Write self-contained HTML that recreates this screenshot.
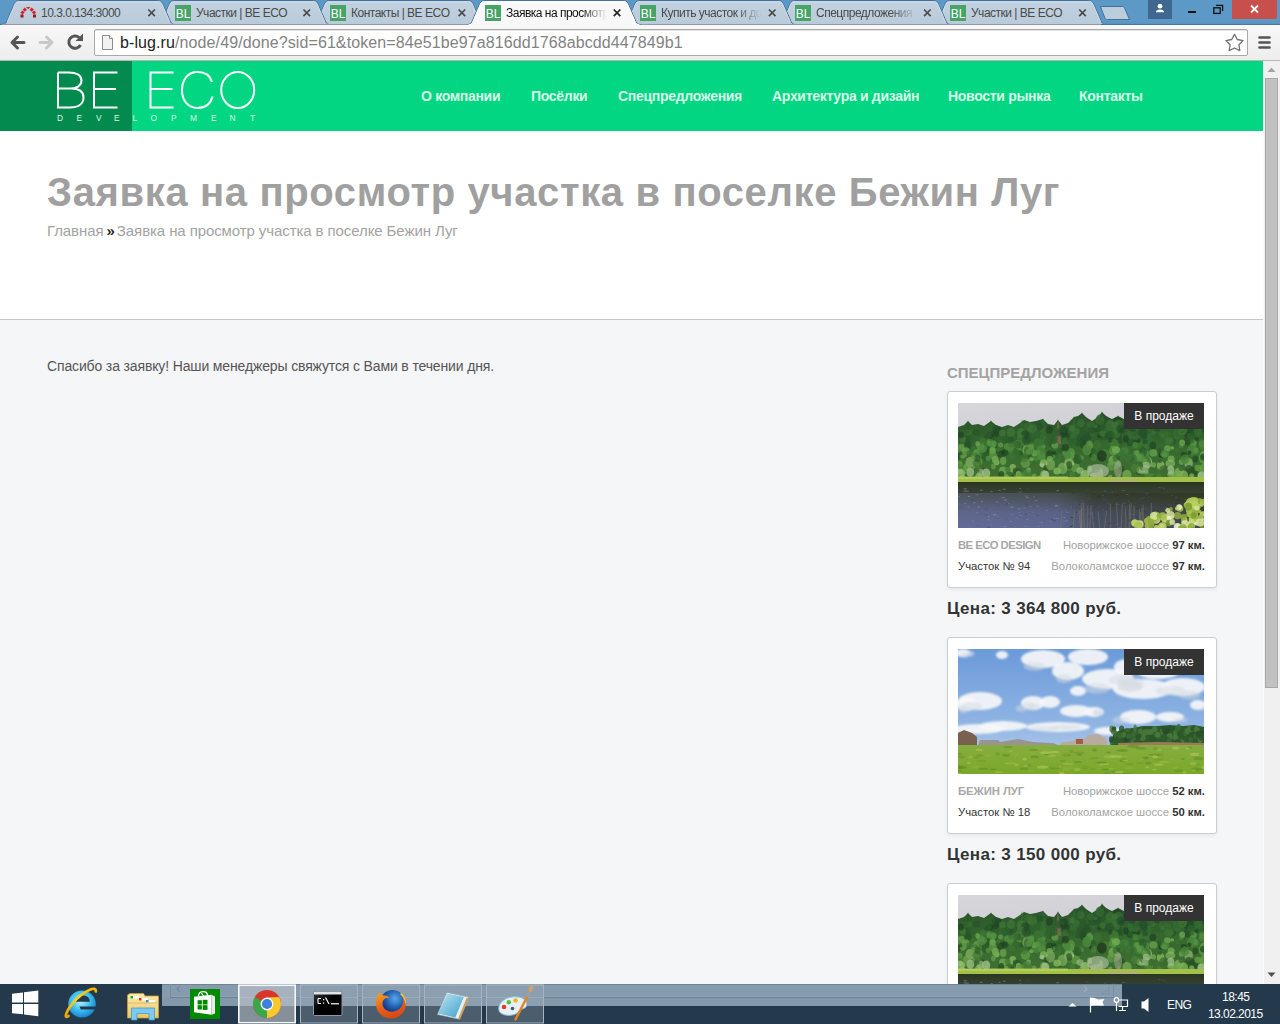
<!DOCTYPE html>
<html><head><meta charset="utf-8">
<style>
*{margin:0;padding:0;box-sizing:border-box}
html,body{width:1280px;height:1024px;overflow:hidden;background:#f5f6f8;font-family:"Liberation Sans",sans-serif}
.a{position:absolute}
#strip{left:0;top:0;width:1280px;height:25px;background:linear-gradient(#5c99c6 85%,#5690bd)}
.tt{position:absolute;top:5px;font-size:12px;line-height:16px;color:#4a4a4a;white-space:nowrap;overflow:hidden;width:104px;letter-spacing:-0.5px}
.fade{-webkit-mask-image:linear-gradient(to right,#000 72%,transparent 97%)}
#toolbar{left:0;top:25px;width:1280px;height:36px;background:linear-gradient(#f8f8f8,#ededed);border-bottom:1px solid #b6b6b6}
#omni{left:94px;top:29px;width:1154px;height:27px;background:#fff;border:1px solid #a9a9a9;border-radius:2px;box-shadow:inset 0 1px 0 #e6e6e6}
#url{left:120px;top:34px;font-size:16px;line-height:18px;color:#838383;white-space:nowrap;letter-spacing:0.1px}
#url b{font-weight:normal;color:#222}
#page{left:0;top:61px;width:1263px;height:923px;background:#f5f6f8;overflow:hidden}
#hdr{left:0;top:0;width:1263px;height:70px;background:#02d682}
#hdrdark{left:0;top:0;width:132px;height:70px;background:#038a4e}
#titlebox{left:0;top:70px;width:1263px;height:189px;background:#fff;border-bottom:1px solid #c5c7cc}
.nav{top:27px;font-size:14px;font-weight:bold;color:#d9f7e8;letter-spacing:-0.3px;line-height:16px;white-space:nowrap}
#h1{left:47px;top:108px;font-size:40px;line-height:46px;font-weight:bold;color:#a0a0a0;letter-spacing:0.63px;white-space:nowrap}
#crumb{left:47px;top:161px;font-size:15px;line-height:18px;color:#a3a3a3;letter-spacing:-0.09px;white-space:nowrap}
#crumb span{color:#2a2a2a;font-weight:bold;letter-spacing:-0.6px;margin:0 -1.5px 0 -1px}
#thanks{left:47px;top:297px;font-size:14px;line-height:16px;color:#555;letter-spacing:-0.14px;white-space:nowrap}
#sbh{left:947px;top:304px;font-size:15px;line-height:16px;font-weight:bold;color:#a3a3a3;white-space:nowrap}
.card{position:absolute;left:947px;width:270px;height:197px;background:#fff;border:1px solid #cdcdcd;border-radius:3px;box-shadow:0 2px 4px rgba(0,0,0,0.06)}
.card .img{position:absolute;left:10px;top:11px;width:246px;height:125px;overflow:hidden}
.badge{position:absolute;left:176px;top:11px;width:80px;height:26px;background:#333;color:#fff;font-size:12px;line-height:26px;text-align:center}
.r1,.r2{position:absolute;font-size:11.3px;line-height:13px;white-space:nowrap}
.r1{top:147px}.r2{top:167.5px}
.lt{left:10px}.rt{right:11px;color:#a3a3a3;text-align:right}
.rt b{color:#333}
.lt.g{color:#a8a8a8;font-weight:bold;letter-spacing:-0.55px}
.lt.d{color:#333}
.price{position:absolute;left:947px;font-size:17px;line-height:20px;font-weight:bold;color:#333;letter-spacing:0.35px;white-space:nowrap}
#scroll{left:1263px;top:61px;width:17px;height:923px;background:#f0f0f0;border-left:1px solid #fbfbfb}
#taskbar{left:0;top:984px;width:1280px;height:40px;background:#243a4c}
.tb{color:#fff;line-height:12px;white-space:nowrap}
</style></head><body>
<div id="strip" class="a">
<svg class="a" style="left:0;top:0" width="1280" height="26">
<defs><linearGradient id="tg" x1="0" y1="0" x2="0" y2="1"><stop offset="0" stop-color="#c2d2e1"/><stop offset="1" stop-color="#b9cad9"/></linearGradient></defs>
<rect x="0" y="0" width="1280" height="1" fill="#5c99c6"/>
<rect x="0" y="24" width="1280" height="1" fill="#4a76a0"/>
<path d="M932.90 24.5 C935.40 24.5 936.40 23.5 937.20 22 L944.40 5.5 C945.40 3 946.40 0.5 949.40 0.5 L1089.40 0.5 C1092.40 0.5 1093.40 3 1094.40 5.5 L1101.60 22 C1102.40 23.5 1103.40 24.5 1105.90 24.5 Z" fill="url(#tg)" stroke="#45729c" stroke-width="1"/>
<path d="M938.20 22 L945.20 5.8 C946.10 3.4 946.90 2 949.60 2 L1089.20 2 C1091.90 2 1092.70 3.4 1093.60 5.8 L1100.60 22" fill="none" stroke="#d3e0eb" stroke-width="1" opacity="0.8"/>
<path d="M777.75 24.5 C780.25 24.5 781.25 23.5 782.05 22 L789.25 5.5 C790.25 3 791.25 0.5 794.25 0.5 L934.25 0.5 C937.25 0.5 938.25 3 939.25 5.5 L946.45 22 C947.25 23.5 948.25 24.5 950.75 24.5 Z" fill="url(#tg)" stroke="#45729c" stroke-width="1"/>
<path d="M783.05 22 L790.05 5.8 C790.95 3.4 791.75 2 794.45 2 L934.05 2 C936.75 2 937.55 3.4 938.45 5.8 L945.45 22" fill="none" stroke="#d3e0eb" stroke-width="1" opacity="0.8"/>
<path d="M622.60 24.5 C625.10 24.5 626.10 23.5 626.90 22 L634.10 5.5 C635.10 3 636.10 0.5 639.10 0.5 L779.10 0.5 C782.10 0.5 783.10 3 784.10 5.5 L791.30 22 C792.10 23.5 793.10 24.5 795.60 24.5 Z" fill="url(#tg)" stroke="#45729c" stroke-width="1"/>
<path d="M627.90 22 L634.90 5.8 C635.80 3.4 636.60 2 639.30 2 L778.90 2 C781.60 2 782.40 3.4 783.30 5.8 L790.30 22" fill="none" stroke="#d3e0eb" stroke-width="1" opacity="0.8"/>
<path d="M312.30 24.5 C314.80 24.5 315.80 23.5 316.60 22 L323.80 5.5 C324.80 3 325.80 0.5 328.80 0.5 L468.80 0.5 C471.80 0.5 472.80 3 473.80 5.5 L481.00 22 C481.80 23.5 482.80 24.5 485.30 24.5 Z" fill="url(#tg)" stroke="#45729c" stroke-width="1"/>
<path d="M317.60 22 L324.60 5.8 C325.50 3.4 326.30 2 329.00 2 L468.60 2 C471.30 2 472.10 3.4 473.00 5.8 L480.00 22" fill="none" stroke="#d3e0eb" stroke-width="1" opacity="0.8"/>
<path d="M157.15 24.5 C159.65 24.5 160.65 23.5 161.45 22 L168.65 5.5 C169.65 3 170.65 0.5 173.65 0.5 L313.65 0.5 C316.65 0.5 317.65 3 318.65 5.5 L325.85 22 C326.65 23.5 327.65 24.5 330.15 24.5 Z" fill="url(#tg)" stroke="#45729c" stroke-width="1"/>
<path d="M162.45 22 L169.45 5.8 C170.35 3.4 171.15 2 173.85 2 L313.45 2 C316.15 2 316.95 3.4 317.85 5.8 L324.85 22" fill="none" stroke="#d3e0eb" stroke-width="1" opacity="0.8"/>
<path d="M2.00 24.5 C4.50 24.5 5.50 23.5 6.30 22 L13.50 5.5 C14.50 3 15.50 0.5 18.50 0.5 L158.50 0.5 C161.50 0.5 162.50 3 163.50 5.5 L170.70 22 C171.50 23.5 172.50 24.5 175.00 24.5 Z" fill="url(#tg)" stroke="#45729c" stroke-width="1"/>
<path d="M7.30 22 L14.30 5.8 C15.20 3.4 16.00 2 18.70 2 L158.30 2 C161.00 2 161.80 3.4 162.70 5.8 L169.70 22" fill="none" stroke="#d3e0eb" stroke-width="1" opacity="0.8"/>
<rect x="2" y="24" width="1099" height="1" fill="#8e9ba6"/>
<path d="M467.45 24.5 C469.95 24.5 470.95 23.5 471.75 22 L478.95 5.5 C479.95 3 480.95 0.5 483.95 0.5 L623.95 0.5 C626.95 0.5 627.95 3 628.95 5.5 L636.15 22 C636.95 23.5 637.95 24.5 640.45 24.5" fill="#f8f8f8" stroke="#45729c" stroke-width="1"/>
<rect x="468.45" y="24" width="171" height="2" fill="#f8f8f8"/>
<path d="M472.75 22 L479.75 5.8 C480.65 3.4 481.45 2 484.15 2 L623.75 2 C626.45 2 627.25 3.4 628.15 5.8 L635.15 22" fill="none" stroke="#ffffff" stroke-width="1"/>
<path d="M1100.5 6.5 L1122 6.5 C1123.5 6.5 1124.3 7 1124.8 8.5 L1129.5 19.5 L1107.5 19.5 C1106 19.5 1105.2 19 1104.7 17.5 Z" fill="#bccddd" stroke="#44709a" stroke-width="1"/>
<rect x="1148" y="0" width="24" height="19" fill="#3f6790"/>
<circle cx="1160" cy="6.2" r="2.4" fill="#fff"/>
<path d="M1156 12.3 C1156 10.2 1157.5 9.4 1160 9.4 C1162.5 9.4 1164 10.2 1164 12.3 Z" fill="#fff"/>
<rect x="1188" y="11" width="8" height="2" fill="#111"/>
<rect x="1213.8" y="7.8" width="6.4" height="5.6" fill="none" stroke="#111" stroke-width="1.3"/>
<path d="M1216 5.4 L1222.6 5.4 L1222.6 11" fill="none" stroke="#111" stroke-width="1.3"/>
<rect x="1232" y="0" width="45" height="19" fill="#c7504c"/>
<path d="M1251 5.5 L1258 12.5 M1258 5.5 L1251 12.5" stroke="#fff" stroke-width="1.8"/>
<g transform="translate(20,6)">
<path d="M0.5 11.5 L0.5 8.5 L3.5 8.5 L3.5 11.5 Z M13 11.5 L13 8.5 L16 8.5 L16 11.5 Z" fill="#a3141a"/>
<g fill="#d4202a"><rect x="1" y="5" width="3" height="3" transform="rotate(45 2.5 6.5)"/><rect x="3.3" y="2.2" width="3" height="3" transform="rotate(45 4.8 3.7)"/><path d="M6 1 L10.5 1 L8.25 3.3 Z"/><rect x="10.2" y="2.2" width="3" height="3" transform="rotate(45 11.7 3.7)"/><rect x="12.5" y="5" width="3" height="3" transform="rotate(45 14 6.5)"/></g>
</g>
<g font-family="Liberation Sans" font-size="12" fill="#fff">
<rect x="175" y="5" width="16" height="16" fill="#46a466"/><text x="175.7" y="17.5" textLength="14.6" lengthAdjust="spacingAndGlyphs">BL</text>
<rect x="330" y="5" width="16" height="16" fill="#46a466"/><text x="330.7" y="17.5" textLength="14.6" lengthAdjust="spacingAndGlyphs">BL</text>
<rect x="485" y="5" width="16" height="16" fill="#46a466"/><text x="485.7" y="17.5" textLength="14.6" lengthAdjust="spacingAndGlyphs">BL</text>
<rect x="640" y="5" width="16" height="16" fill="#46a466"/><text x="640.7" y="17.5" textLength="14.6" lengthAdjust="spacingAndGlyphs">BL</text>
<rect x="795" y="5" width="16" height="16" fill="#46a466"/><text x="795.7" y="17.5" textLength="14.6" lengthAdjust="spacingAndGlyphs">BL</text>
<rect x="950" y="5" width="16" height="16" fill="#46a466"/><text x="950.7" y="17.5" textLength="14.6" lengthAdjust="spacingAndGlyphs">BL</text>
</g>
<g stroke="#4a4a4a" stroke-width="1.7">
<path d="M148.30 9.5 L154.90 16.1 M154.90 9.5 L148.30 16.1" stroke="#4a4a4a"/>
<path d="M303.45 9.5 L310.05 16.1 M310.05 9.5 L303.45 16.1" stroke="#4a4a4a"/>
<path d="M458.60 9.5 L465.20 16.1 M465.20 9.5 L458.60 16.1" stroke="#4a4a4a"/>
<path d="M613.75 9.5 L620.35 16.1 M620.35 9.5 L613.75 16.1" stroke="#222"/>
<path d="M768.90 9.5 L775.50 16.1 M775.50 9.5 L768.90 16.1" stroke="#4a4a4a"/>
<path d="M924.05 9.5 L930.65 16.1 M930.65 9.5 L924.05 16.1" stroke="#4a4a4a"/>
<path d="M1079.20 9.5 L1085.80 16.1 M1085.80 9.5 L1079.20 16.1" stroke="#4a4a4a"/>
</g></svg>
<div class="tt" style="left:41px">10.3.0.134:3000</div>
<div class="tt" style="left:196px">Участки | BE ECO</div>
<div class="tt" style="left:351px">Контакты | BE ECO</div>
<div class="tt fade" style="left:506px;color:#111">Заявка на просмотр</div>
<div class="tt fade" style="left:661px">Купить участок и дом</div>
<div class="tt fade" style="left:816px">Спецпредложения</div>
<div class="tt" style="left:971px">Участки | BE ECO</div>
</div>

<div id="toolbar" class="a"></div>
<svg class="a" style="left:0;top:25px" width="100" height="35">
  <path d="M24 17.5 L13 17.5 M17.5 12 L12 17.5 L17.5 23" fill="none" stroke="#555" stroke-width="3" stroke-linecap="round" stroke-linejoin="round"/>
  <path d="M40 17.5 L51 17.5 M46.5 12 L52 17.5 L46.5 23" fill="none" stroke="#c9c9c9" stroke-width="3" stroke-linecap="round" stroke-linejoin="round"/>
  <path d="M80.5 20 A6.2 6.2 0 1 1 79.2 12.5" fill="none" stroke="#555" stroke-width="3"/>
  <path d="M83 8.5 L83 16 L75.5 16 Z" fill="#555"/>
</svg>
<div id="omni" class="a"></div>
<svg class="a" style="left:100px;top:33px" width="20" height="20">
  <path d="M2.5 2.5 L9.5 2.5 L12.5 5.5 L12.5 16.5 L2.5 16.5 Z" fill="#f2f2f3" stroke="#8c8c8c" stroke-width="1"/>
  <path d="M9.5 2.5 L9.5 5.5 L12.5 5.5" fill="#fff" stroke="#8c8c8c" stroke-width="1"/>
</svg>
<div id="url" class="a"><b>b-lug.ru</b>/node/49/done?sid=61&amp;token=84e51be97a816dd1768abcdd447849b1</div>
<svg class="a" style="left:1220px;top:25px" width="60" height="35">
  <path d="M14.50 9.30 L17.26 14.50 L23.06 15.52 L18.97 19.75 L19.79 25.58 L14.50 23.00 L9.21 25.58 L10.03 19.75 L5.94 15.52 L11.74 14.50 Z" fill="#fff" stroke="#707070" stroke-width="1.3" stroke-linejoin="round"/>
  <g stroke="#555" stroke-width="2.6" stroke-linecap="round"><path d="M39.5 12.5 L49.5 12.5 M39.5 17.5 L49.5 17.5 M39.5 22.5 L49.5 22.5"/></g>
</svg>

<div id="page" class="a">
  <div id="hdr" class="a"></div>
  <div id="hdrdark" class="a"></div>
  <svg class="a" style="left:0;top:0" width="300" height="70">
    <g fill="none" stroke="#fff" stroke-width="2">
      <!-- B -->
      <path d="M58 11.5 L58 46.5 L70 46.5 C78 46.5 83.5 43 83.5 36.5 C83.5 30.5 79 27.5 71 27.5 L58 27.5 M58 11.5 L69 11.5 C76 11.5 81.5 14 81.5 19.5 C81.5 25 76 27.5 71 27.5"/>
      <!-- E -->
      <path d="M117.5 11.5 L94 11.5 L94 46.5 L117.5 46.5 M94 28 L116 28"/>
      <!-- E2 -->
      <path d="M173.5 11.5 L150.5 11.5 L150.5 46.5 L173.5 46.5 M150.5 28 L172.5 28"/>
      <!-- C -->
      <path d="M212 21 C210 14 204.5 11 197.5 11 C188 11 182 18.5 182 29 C182 39.5 188 47 197.5 47 C204.5 47 210.5 43.5 212.5 35.5"/>
      <!-- O -->
      <ellipse cx="237.7" cy="29" rx="16.5" ry="18"/>
    </g>
    <g font-family="Liberation Sans" font-size="8.4" fill="#dff7ea">
      <text x="57" y="60">D</text><text x="76.5" y="60">E</text><text x="96" y="60">V</text><text x="114" y="60">E</text><text x="132.5" y="60">L</text><text x="150.5" y="60">O</text><text x="171" y="60">P</text><text x="190" y="60">M</text><text x="211" y="60">E</text><text x="229.5" y="60">N</text><text x="250" y="60">T</text>
    </g>
  </svg>
  <div class="a nav" style="left:421px">О компании</div>
  <div class="a nav" style="left:531px">Посёлки</div>
  <div class="a nav" style="left:618px">Спецпредложения</div>
  <div class="a nav" style="left:772px">Архитектура и дизайн</div>
  <div class="a nav" style="left:948px">Новости рынка</div>
  <div class="a nav" style="left:1079px">Контакты</div>
  <div id="titlebox" class="a"></div>
  <div class="a" id="h1">Заявка на просмотр участка в поселке Бежин Луг</div>
  <div class="a" id="crumb">Главная <span>»</span> Заявка на просмотр участка в поселке Бежин Луг</div>
  <div class="a" id="thanks">Спасибо за заявку! Наши менеджеры свяжутся с Вами в течении дня.</div>
  <div class="a" id="sbh">СПЕЦПРЕДЛОЖЕНИЯ</div>
  <div class="card" style="top:330px"><div class="img"><svg width="246" height="125" viewBox="0 0 246 125"><defs><linearGradient id="sa" x1="0" y1="0" x2="0.3" y2="1"><stop offset="0" stop-color="#d6d6db"/><stop offset="1" stop-color="#c4c4ca"/></linearGradient><linearGradient id="wa" x1="0" y1="0" x2="0" y2="1"><stop offset="0" stop-color="#2a3620"/><stop offset="0.3" stop-color="#3c4438"/><stop offset="0.65" stop-color="#545c7c"/><stop offset="1" stop-color="#5c6690"/></linearGradient><linearGradient id="wla" x1="0" y1="0" x2="1" y2="0"><stop offset="0" stop-color="#7078a8" stop-opacity="0.35"/><stop offset="0.4" stop-color="#6a72a0" stop-opacity="0.25"/><stop offset="0.55" stop-color="#2a2e20" stop-opacity="0.35"/><stop offset="1" stop-color="#2c3418" stop-opacity="0.6"/></linearGradient><linearGradient id="ta" x1="0" y1="0" x2="0" y2="1"><stop offset="0" stop-color="#28522a"/><stop offset="0.5" stop-color="#36682e"/><stop offset="1" stop-color="#3e7032"/></linearGradient><filter id="fa" x="-10%" y="-10%" width="120%" height="120%"><feGaussianBlur stdDeviation="0.5"/></filter></defs><rect width="246" height="125" fill="url(#sa)"/><path d="M0 76 L0 24 L6 22 L10 18 L14 22 L20 21 L26 23 L33 18 L38 22 L44 24 L50 22 L56 24 L62 20 L66 17 L72 19 L78 18 L85 16 L90 21 L96 22 L100 17 L104 22 L110 20 L116 14 L120 13 L124 10 L128 14 L134 18 L140 14 L144 9 L148 13 L154 16 L160 13 L166 16 L172 15 L180 18 L190 16 L200 18 L210 17 L220 18 L232 17 L246 18 L246 76 Z" fill="url(#ta)"/><g filter="url(#fa)"><path d="M10 17 L14.7 51.5 L5.3 51.5 Z" fill="#28552a"/><path d="M33 17 L39.7 50.7 L26.3 50.7 Z" fill="#2a5a2a"/><path d="M64 16 L69.8 54.9 L58.2 54.9 Z" fill="#336b32"/><path d="M85 15 L89.8 45.8 L80.2 45.8 Z" fill="#336b32"/><path d="M100 16 L105.6 50.6 L94.4 50.6 Z" fill="#336b32"/><path d="M116 13 L121.9 42.8 L110.1 42.8 Z" fill="#2f6330"/><path d="M124 9 L130.6 43.3 L117.4 43.3 Z" fill="#2a5a2a"/><path d="M144 8 L150.0 36.8 L138.0 36.8 Z" fill="#2a5a2a"/><path d="M160 12 L164.9 40.4 L155.1 40.4 Z" fill="#28552a"/><path d="M172 14 L177.4 50.6 L166.6 50.6 Z" fill="#336b32"/><path d="M190 15 L196.1 54.1 L183.9 54.1 Z" fill="#336b32"/><path d="M100 17 L104 45 L96 45 Z" fill="#8a6a5a" opacity="0.7"/><ellipse cx="180.5" cy="53.1" rx="4.9" ry="6.1" fill="#4a863a" opacity="0.58"/><ellipse cx="31.3" cy="34.7" rx="4.9" ry="5.8" fill="#1f4424" opacity="0.85"/><ellipse cx="103.1" cy="67.5" rx="3.7" ry="4.1" fill="#2a5226" opacity="0.87"/><ellipse cx="168.9" cy="72.0" rx="4.6" ry="5.3" fill="#80b45a" opacity="0.66"/><ellipse cx="133.5" cy="52.8" rx="2.3" ry="2.1" fill="#1e3e1e" opacity="0.84"/><ellipse cx="141.5" cy="33.2" rx="2.2" ry="1.8" fill="#1f4424" opacity="0.83"/><ellipse cx="100.4" cy="29.8" rx="2.9" ry="3.6" fill="#1f4424" opacity="0.57"/><ellipse cx="151.9" cy="21.5" rx="4.2" ry="4.5" fill="#386c32" opacity="0.87"/><ellipse cx="67.3" cy="34.3" rx="2.1" ry="1.8" fill="#24502a" opacity="0.76"/><ellipse cx="4.9" cy="36.2" rx="3.2" ry="3.0" fill="#3f7436" opacity="0.79"/><ellipse cx="243.9" cy="40.3" rx="3.1" ry="3.8" fill="#4a863a" opacity="0.68"/><ellipse cx="113.0" cy="49.6" rx="3.9" ry="4.5" fill="#62a048" opacity="0.59"/><ellipse cx="242.2" cy="65.8" rx="2.8" ry="3.6" fill="#4a8438" opacity="0.70"/><ellipse cx="62.1" cy="39.7" rx="3.0" ry="3.0" fill="#70a852" opacity="0.75"/><ellipse cx="2.1" cy="57.3" rx="3.9" ry="4.4" fill="#3c7432" opacity="0.67"/><ellipse cx="85.9" cy="71.4" rx="3.8" ry="4.5" fill="#90bc68" opacity="0.56"/><ellipse cx="12.3" cy="59.2" rx="4.9" ry="5.4" fill="#90bc68" opacity="0.65"/><ellipse cx="148.6" cy="27.7" rx="2.6" ry="3.1" fill="#386c32" opacity="0.64"/><ellipse cx="195.4" cy="26.8" rx="4.4" ry="5.1" fill="#3f7436" opacity="0.60"/><ellipse cx="123.0" cy="54.8" rx="2.8" ry="2.5" fill="#569444" opacity="0.70"/><ellipse cx="172.9" cy="25.1" rx="3.0" ry="3.4" fill="#386c32" opacity="0.63"/><ellipse cx="201.1" cy="73.9" rx="2.2" ry="2.8" fill="#4a8438" opacity="0.71"/><ellipse cx="53.7" cy="33.1" rx="3.6" ry="3.4" fill="#2e602c" opacity="0.84"/><ellipse cx="141.9" cy="67.8" rx="3.0" ry="3.6" fill="#6ea84e" opacity="0.67"/><ellipse cx="29.7" cy="39.4" rx="4.4" ry="4.5" fill="#386c32" opacity="0.77"/><ellipse cx="70.2" cy="52.9" rx="2.1" ry="1.8" fill="#2a5a28" opacity="0.55"/><ellipse cx="234.7" cy="69.4" rx="5.0" ry="5.4" fill="#2a5226" opacity="0.90"/><ellipse cx="177.7" cy="22.9" rx="3.4" ry="4.3" fill="#3f7436" opacity="0.74"/><ellipse cx="221.2" cy="68.5" rx="4.6" ry="3.9" fill="#90bc68" opacity="0.64"/><ellipse cx="5.9" cy="66.2" rx="3.5" ry="4.4" fill="#4a8438" opacity="0.86"/><ellipse cx="142.4" cy="15.8" rx="4.2" ry="4.5" fill="#2e602c" opacity="0.63"/><ellipse cx="2.0" cy="53.5" rx="2.2" ry="1.9" fill="#62a048" opacity="0.59"/><ellipse cx="241.9" cy="51.1" rx="4.4" ry="4.3" fill="#3c7432" opacity="0.62"/><ellipse cx="131.7" cy="65.8" rx="2.5" ry="3.2" fill="#90bc68" opacity="0.83"/><ellipse cx="204.5" cy="22.0" rx="3.9" ry="3.2" fill="#1f4424" opacity="0.64"/><ellipse cx="64.7" cy="50.5" rx="3.3" ry="3.1" fill="#2a5a28" opacity="0.84"/><ellipse cx="213.0" cy="63.7" rx="2.1" ry="1.8" fill="#5e9a44" opacity="0.89"/><ellipse cx="212.3" cy="25.9" rx="3.5" ry="3.1" fill="#386c32" opacity="0.58"/><ellipse cx="94.2" cy="45.3" rx="2.9" ry="2.6" fill="#569444" opacity="0.67"/><ellipse cx="28.2" cy="53.5" rx="4.1" ry="5.0" fill="#2a5a28" opacity="0.75"/><ellipse cx="7.8" cy="48.1" rx="4.0" ry="3.9" fill="#62a048" opacity="0.83"/><ellipse cx="154.0" cy="44.2" rx="3.1" ry="3.7" fill="#2a5a28" opacity="0.66"/><ellipse cx="236.5" cy="44.2" rx="2.1" ry="2.2" fill="#4a863a" opacity="0.79"/><ellipse cx="15.0" cy="47.1" rx="3.3" ry="4.2" fill="#3c7432" opacity="0.68"/><ellipse cx="223.3" cy="64.7" rx="2.8" ry="3.2" fill="#3c6a30" opacity="0.88"/><ellipse cx="181.3" cy="67.8" rx="3.6" ry="4.1" fill="#2a5226" opacity="0.81"/><ellipse cx="139.1" cy="24.5" rx="3.8" ry="3.9" fill="#24502a" opacity="0.63"/><ellipse cx="94.9" cy="52.3" rx="3.7" ry="4.6" fill="#1e3e1e" opacity="0.61"/><ellipse cx="2.9" cy="68.2" rx="2.4" ry="2.7" fill="#6ea84e" opacity="0.84"/><ellipse cx="237.0" cy="53.0" rx="4.4" ry="5.7" fill="#3c7432" opacity="0.75"/><ellipse cx="130.3" cy="33.0" rx="3.7" ry="4.6" fill="#24502a" opacity="0.57"/><ellipse cx="78.7" cy="52.4" rx="4.5" ry="5.8" fill="#4a863a" opacity="0.78"/><ellipse cx="111.4" cy="60.0" rx="4.8" ry="4.7" fill="#90bc68" opacity="0.69"/><ellipse cx="85.3" cy="43.6" rx="2.2" ry="2.1" fill="#62a048" opacity="0.88"/><ellipse cx="209.6" cy="74.2" rx="3.2" ry="2.9" fill="#3c6a30" opacity="0.69"/><ellipse cx="220.7" cy="30.7" rx="3.5" ry="4.4" fill="#1f4424" opacity="0.73"/><ellipse cx="108.6" cy="61.5" rx="2.6" ry="3.0" fill="#90bc68" opacity="0.60"/><ellipse cx="126.9" cy="72.1" rx="4.6" ry="5.2" fill="#90bc68" opacity="0.85"/><ellipse cx="147.0" cy="51.1" rx="5.0" ry="4.7" fill="#4a863a" opacity="0.64"/><ellipse cx="199.6" cy="32.8" rx="3.7" ry="3.6" fill="#2e602c" opacity="0.82"/><ellipse cx="33.2" cy="75.5" rx="3.4" ry="3.6" fill="#4a8438" opacity="0.84"/><ellipse cx="204.0" cy="51.9" rx="3.4" ry="2.9" fill="#1e3e1e" opacity="0.88"/><ellipse cx="194.3" cy="69.5" rx="2.1" ry="2.7" fill="#4a8438" opacity="0.78"/><ellipse cx="192.9" cy="24.4" rx="2.7" ry="2.4" fill="#386c32" opacity="0.62"/><ellipse cx="62.2" cy="33.6" rx="4.1" ry="5.1" fill="#24502a" opacity="0.64"/><ellipse cx="215.0" cy="38.6" rx="3.3" ry="2.8" fill="#24502a" opacity="0.64"/><ellipse cx="227.3" cy="23.4" rx="3.4" ry="2.7" fill="#386c32" opacity="0.67"/><ellipse cx="106.9" cy="49.8" rx="2.6" ry="3.1" fill="#62a048" opacity="0.72"/><ellipse cx="28.6" cy="41.4" rx="4.7" ry="5.3" fill="#3c7432" opacity="0.59"/><ellipse cx="220.6" cy="71.1" rx="2.3" ry="2.6" fill="#a0c088" opacity="0.68"/><ellipse cx="110.5" cy="58.3" rx="4.0" ry="4.8" fill="#70a852" opacity="0.59"/><ellipse cx="235.0" cy="39.8" rx="3.7" ry="3.2" fill="#62a048" opacity="0.72"/><ellipse cx="85.7" cy="60.4" rx="4.0" ry="4.5" fill="#80b45a" opacity="0.81"/><ellipse cx="34.7" cy="42.9" rx="4.8" ry="4.1" fill="#2a5a28" opacity="0.88"/><ellipse cx="32.6" cy="40.1" rx="4.2" ry="4.2" fill="#62a048" opacity="0.66"/><ellipse cx="44.1" cy="51.1" rx="4.3" ry="3.6" fill="#1e3e1e" opacity="0.80"/><ellipse cx="187.1" cy="50.7" rx="4.2" ry="3.6" fill="#569444" opacity="0.64"/><ellipse cx="10.5" cy="29.8" rx="3.4" ry="3.2" fill="#386c32" opacity="0.82"/><ellipse cx="86.2" cy="39.5" rx="3.2" ry="3.9" fill="#3f7436" opacity="0.57"/><ellipse cx="122.5" cy="75.7" rx="2.5" ry="2.8" fill="#6ea84e" opacity="0.75"/><ellipse cx="226.3" cy="27.6" rx="4.1" ry="4.1" fill="#3f7436" opacity="0.81"/><ellipse cx="202.6" cy="62.4" rx="3.8" ry="4.6" fill="#80b45a" opacity="0.83"/><ellipse cx="134.3" cy="31.0" rx="2.5" ry="2.5" fill="#386c32" opacity="0.65"/><ellipse cx="209.3" cy="45.5" rx="3.2" ry="3.2" fill="#70a852" opacity="0.74"/><ellipse cx="143.9" cy="53.0" rx="4.9" ry="5.7" fill="#1e3e1e" opacity="0.86"/><ellipse cx="165.2" cy="21.3" rx="2.6" ry="2.2" fill="#24502a" opacity="0.81"/><ellipse cx="55.9" cy="36.3" rx="3.9" ry="3.5" fill="#2e602c" opacity="0.74"/><ellipse cx="6.3" cy="50.9" rx="3.9" ry="3.4" fill="#2a5a28" opacity="0.65"/><ellipse cx="162.7" cy="27.1" rx="3.4" ry="3.8" fill="#24502a" opacity="0.57"/><ellipse cx="87.7" cy="35.1" rx="2.2" ry="1.8" fill="#3f7436" opacity="0.67"/><ellipse cx="79.7" cy="40.2" rx="4.1" ry="5.0" fill="#3c7432" opacity="0.76"/><ellipse cx="230.6" cy="60.4" rx="4.2" ry="5.5" fill="#a0c088" opacity="0.62"/><ellipse cx="13.0" cy="35.2" rx="4.1" ry="4.3" fill="#2e602c" opacity="0.59"/><ellipse cx="7.8" cy="28.3" rx="2.6" ry="2.6" fill="#2e602c" opacity="0.72"/><ellipse cx="14.1" cy="68.6" rx="2.6" ry="2.5" fill="#3c6a30" opacity="0.71"/><ellipse cx="187.8" cy="42.7" rx="2.5" ry="2.9" fill="#3c7432" opacity="0.68"/><ellipse cx="90.5" cy="52.0" rx="3.8" ry="4.9" fill="#4a863a" opacity="0.83"/><ellipse cx="62.2" cy="43.1" rx="4.6" ry="4.1" fill="#62a048" opacity="0.62"/><ellipse cx="40.0" cy="46.6" rx="2.5" ry="2.2" fill="#3c7432" opacity="0.76"/><ellipse cx="108.6" cy="34.0" rx="4.5" ry="4.6" fill="#1f4424" opacity="0.69"/><ellipse cx="174.3" cy="22.7" rx="3.2" ry="3.4" fill="#1f4424" opacity="0.87"/><ellipse cx="219.5" cy="35.0" rx="3.2" ry="2.8" fill="#2e602c" opacity="0.77"/><ellipse cx="84.3" cy="27.1" rx="2.2" ry="2.0" fill="#386c32" opacity="0.83"/><ellipse cx="114.3" cy="72.2" rx="2.9" ry="3.1" fill="#4a8438" opacity="0.56"/><ellipse cx="81.9" cy="75.6" rx="3.0" ry="3.4" fill="#5e9a44" opacity="0.89"/><ellipse cx="146.2" cy="15.5" rx="2.1" ry="1.7" fill="#24502a" opacity="0.73"/><ellipse cx="118.4" cy="28.5" rx="3.5" ry="3.2" fill="#386c32" opacity="0.89"/><ellipse cx="117.2" cy="64.6" rx="4.8" ry="4.7" fill="#5e9a44" opacity="0.81"/><ellipse cx="156.1" cy="41.4" rx="4.8" ry="5.9" fill="#4a863a" opacity="0.59"/><ellipse cx="95.2" cy="42.6" rx="4.0" ry="3.6" fill="#2a5a28" opacity="0.81"/><ellipse cx="182.0" cy="67.1" rx="3.7" ry="3.6" fill="#80b45a" opacity="0.70"/><ellipse cx="54.8" cy="65.3" rx="3.4" ry="4.2" fill="#90bc68" opacity="0.73"/><ellipse cx="186.7" cy="71.3" rx="4.1" ry="3.4" fill="#3c6a30" opacity="0.61"/><ellipse cx="186.4" cy="66.2" rx="2.3" ry="2.2" fill="#6ea84e" opacity="0.76"/><ellipse cx="198.9" cy="24.8" rx="3.8" ry="3.9" fill="#24502a" opacity="0.86"/><ellipse cx="181.7" cy="39.8" rx="3.1" ry="2.8" fill="#3c7432" opacity="0.83"/><ellipse cx="227.8" cy="39.8" rx="2.9" ry="2.5" fill="#2a5a28" opacity="0.78"/><ellipse cx="57.7" cy="29.3" rx="2.5" ry="2.7" fill="#2e602c" opacity="0.55"/><ellipse cx="54.9" cy="74.4" rx="2.7" ry="2.8" fill="#2a5226" opacity="0.87"/><ellipse cx="77.4" cy="69.7" rx="4.3" ry="3.9" fill="#3c6a30" opacity="0.58"/><ellipse cx="205.0" cy="27.6" rx="2.1" ry="1.9" fill="#24502a" opacity="0.86"/><ellipse cx="18.6" cy="48.9" rx="2.7" ry="3.0" fill="#70a852" opacity="0.59"/><ellipse cx="119.4" cy="56.5" rx="4.1" ry="4.5" fill="#2a5a28" opacity="0.71"/><ellipse cx="25.0" cy="67.9" rx="3.8" ry="3.4" fill="#2a5226" opacity="0.74"/><ellipse cx="114.0" cy="60.8" rx="2.2" ry="2.0" fill="#a0c088" opacity="0.81"/><ellipse cx="229.8" cy="58.8" rx="3.1" ry="3.5" fill="#70a852" opacity="0.76"/><ellipse cx="51.0" cy="43.7" rx="5.0" ry="4.6" fill="#569444" opacity="0.70"/><ellipse cx="60.2" cy="41.6" rx="4.2" ry="4.9" fill="#4a863a" opacity="0.86"/><ellipse cx="245.6" cy="55.0" rx="4.8" ry="5.9" fill="#62a048" opacity="0.68"/><ellipse cx="45.2" cy="57.8" rx="3.2" ry="4.2" fill="#70a852" opacity="0.71"/><ellipse cx="145.1" cy="16.2" rx="4.9" ry="4.3" fill="#24502a" opacity="0.58"/><ellipse cx="179.0" cy="37.6" rx="3.6" ry="2.9" fill="#1f4424" opacity="0.81"/><ellipse cx="66.5" cy="44.9" rx="3.0" ry="2.7" fill="#1e3e1e" opacity="0.82"/><ellipse cx="33.0" cy="46.0" rx="4.7" ry="4.0" fill="#2a5a28" opacity="0.60"/><ellipse cx="189.2" cy="59.3" rx="4.9" ry="6.3" fill="#a0c088" opacity="0.70"/><ellipse cx="233.9" cy="47.1" rx="5.0" ry="4.9" fill="#4a863a" opacity="0.85"/><ellipse cx="68.9" cy="47.0" rx="4.7" ry="5.7" fill="#70a852" opacity="0.81"/><ellipse cx="231.4" cy="49.6" rx="2.0" ry="2.2" fill="#1e3e1e" opacity="0.74"/><ellipse cx="38.8" cy="28.8" rx="2.6" ry="2.6" fill="#1f4424" opacity="0.89"/><ellipse cx="88.4" cy="52.5" rx="3.5" ry="2.8" fill="#4a863a" opacity="0.70"/><ellipse cx="82.2" cy="23.6" rx="3.6" ry="3.7" fill="#24502a" opacity="0.64"/><ellipse cx="166.3" cy="47.9" rx="4.2" ry="3.4" fill="#569444" opacity="0.70"/><ellipse cx="155.1" cy="57.6" rx="4.7" ry="5.1" fill="#70a852" opacity="0.88"/><ellipse cx="184.4" cy="67.3" rx="3.2" ry="3.5" fill="#a0c088" opacity="0.65"/><ellipse cx="39.5" cy="27.4" rx="3.9" ry="4.1" fill="#1f4424" opacity="0.78"/><ellipse cx="231.0" cy="65.8" rx="3.8" ry="3.8" fill="#2a5226" opacity="0.77"/><ellipse cx="71.0" cy="26.6" rx="2.4" ry="2.1" fill="#3f7436" opacity="0.82"/><ellipse cx="108.9" cy="38.7" rx="2.8" ry="3.5" fill="#386c32" opacity="0.60"/><ellipse cx="76.4" cy="50.3" rx="3.2" ry="3.0" fill="#70a852" opacity="0.71"/><ellipse cx="144.5" cy="30.6" rx="2.9" ry="3.2" fill="#3f7436" opacity="0.72"/><ellipse cx="67.5" cy="60.2" rx="4.7" ry="4.8" fill="#6ea84e" opacity="0.58"/><ellipse cx="5.5" cy="50.4" rx="4.3" ry="4.8" fill="#70a852" opacity="0.62"/><ellipse cx="229.0" cy="31.2" rx="3.1" ry="3.0" fill="#1f4424" opacity="0.64"/><ellipse cx="236.4" cy="72.9" rx="3.0" ry="3.2" fill="#2a5226" opacity="0.56"/><ellipse cx="102.2" cy="45.3" rx="4.7" ry="4.3" fill="#2a5a28" opacity="0.62"/><ellipse cx="17.0" cy="52.1" rx="4.2" ry="3.6" fill="#70a852" opacity="0.84"/><ellipse cx="218.9" cy="72.9" rx="4.9" ry="5.0" fill="#6ea84e" opacity="0.89"/><ellipse cx="113.4" cy="36.7" rx="3.7" ry="3.4" fill="#2e602c" opacity="0.89"/><ellipse cx="33.3" cy="70.9" rx="2.5" ry="2.9" fill="#3c6a30" opacity="0.78"/><ellipse cx="32.8" cy="25.1" rx="4.3" ry="4.1" fill="#2e602c" opacity="0.78"/><ellipse cx="30.0" cy="31.8" rx="3.6" ry="3.8" fill="#2e602c" opacity="0.68"/><ellipse cx="24.0" cy="45.7" rx="5.0" ry="4.2" fill="#569444" opacity="0.59"/><ellipse cx="71.3" cy="43.2" rx="4.8" ry="4.0" fill="#62a048" opacity="0.62"/><ellipse cx="233.7" cy="75.8" rx="4.9" ry="4.1" fill="#4a8438" opacity="0.74"/><ellipse cx="222.5" cy="27.4" rx="4.5" ry="3.7" fill="#1f4424" opacity="0.67"/><ellipse cx="185.5" cy="64.0" rx="3.7" ry="4.0" fill="#3c6a30" opacity="0.66"/><ellipse cx="34.6" cy="47.3" rx="3.2" ry="3.5" fill="#70a852" opacity="0.88"/><ellipse cx="210.8" cy="30.9" rx="4.9" ry="4.7" fill="#2e602c" opacity="0.84"/><ellipse cx="29.9" cy="55.5" rx="2.2" ry="2.7" fill="#62a048" opacity="0.59"/><ellipse cx="0.5" cy="69.7" rx="4.4" ry="4.7" fill="#a0c088" opacity="0.82"/><ellipse cx="20.3" cy="52.6" rx="3.3" ry="3.6" fill="#4a863a" opacity="0.63"/><ellipse cx="112.0" cy="52.5" rx="3.9" ry="3.8" fill="#62a048" opacity="0.76"/><ellipse cx="244.1" cy="72.5" rx="4.6" ry="4.3" fill="#a0c088" opacity="0.89"/><ellipse cx="65.0" cy="28.4" rx="3.5" ry="4.1" fill="#386c32" opacity="0.64"/><ellipse cx="106.5" cy="38.7" rx="2.4" ry="2.5" fill="#386c32" opacity="0.86"/><ellipse cx="245.6" cy="50.5" rx="3.3" ry="2.7" fill="#62a048" opacity="0.70"/><ellipse cx="135.6" cy="54.6" rx="2.9" ry="3.5" fill="#4a863a" opacity="0.68"/><ellipse cx="244.3" cy="41.7" rx="2.6" ry="2.8" fill="#62a048" opacity="0.59"/><ellipse cx="181.5" cy="42.9" rx="3.7" ry="3.5" fill="#3c7432" opacity="0.73"/><ellipse cx="97.6" cy="43.4" rx="4.0" ry="4.3" fill="#3c7432" opacity="0.60"/><ellipse cx="52.4" cy="45.1" rx="3.8" ry="4.8" fill="#4a863a" opacity="0.62"/><ellipse cx="106.7" cy="35.1" rx="2.1" ry="2.2" fill="#386c32" opacity="0.81"/><ellipse cx="205.8" cy="67.1" rx="4.7" ry="4.6" fill="#3c6a30" opacity="0.75"/><ellipse cx="125.4" cy="71.6" rx="2.7" ry="3.3" fill="#80b45a" opacity="0.65"/><ellipse cx="44.9" cy="67.5" rx="3.8" ry="3.9" fill="#6ea84e" opacity="0.83"/><ellipse cx="93.5" cy="50.3" rx="5.0" ry="4.6" fill="#2a5a28" opacity="0.69"/><ellipse cx="126.0" cy="41.9" rx="3.9" ry="3.7" fill="#1e3e1e" opacity="0.65"/><ellipse cx="158.4" cy="61.2" rx="4.6" ry="4.7" fill="#6ea84e" opacity="0.81"/><ellipse cx="246.9" cy="27.4" rx="2.0" ry="2.5" fill="#1f4424" opacity="0.77"/><ellipse cx="20.7" cy="58.7" rx="3.9" ry="3.6" fill="#62a048" opacity="0.66"/><ellipse cx="160.4" cy="73.5" rx="2.2" ry="2.7" fill="#5e9a44" opacity="0.73"/><ellipse cx="57.3" cy="67.6" rx="2.5" ry="3.1" fill="#3c6a30" opacity="0.87"/><ellipse cx="96.8" cy="42.5" rx="3.4" ry="3.1" fill="#62a048" opacity="0.75"/><ellipse cx="83.4" cy="53.1" rx="3.7" ry="4.2" fill="#569444" opacity="0.67"/><ellipse cx="190.7" cy="71.0" rx="4.6" ry="4.7" fill="#4a8438" opacity="0.80"/><ellipse cx="213.1" cy="55.7" rx="3.5" ry="3.2" fill="#70a852" opacity="0.84"/><ellipse cx="233.3" cy="27.7" rx="4.7" ry="5.8" fill="#1f4424" opacity="0.66"/><ellipse cx="187.2" cy="38.7" rx="2.7" ry="2.5" fill="#24502a" opacity="0.68"/><ellipse cx="53.3" cy="41.0" rx="3.0" ry="3.5" fill="#3c7432" opacity="0.67"/><ellipse cx="25.0" cy="37.5" rx="3.3" ry="2.9" fill="#3f7436" opacity="0.72"/><ellipse cx="49.7" cy="66.6" rx="3.1" ry="2.7" fill="#4a8438" opacity="0.81"/><ellipse cx="96.3" cy="52.8" rx="3.8" ry="3.6" fill="#1e3e1e" opacity="0.68"/><ellipse cx="16.8" cy="52.6" rx="3.4" ry="3.7" fill="#3c7432" opacity="0.64"/><ellipse cx="223.5" cy="58.9" rx="2.7" ry="2.8" fill="#70a852" opacity="0.72"/><ellipse cx="99.4" cy="55.4" rx="4.3" ry="5.0" fill="#3c7432" opacity="0.67"/><ellipse cx="181.5" cy="53.4" rx="2.3" ry="2.0" fill="#62a048" opacity="0.65"/><ellipse cx="155.6" cy="27.8" rx="4.8" ry="5.0" fill="#386c32" opacity="0.75"/><ellipse cx="204.6" cy="32.6" rx="2.3" ry="2.5" fill="#3f7436" opacity="0.75"/><ellipse cx="167.9" cy="35.9" rx="3.0" ry="3.6" fill="#1f4424" opacity="0.81"/><ellipse cx="70.4" cy="23.0" rx="4.0" ry="4.1" fill="#386c32" opacity="0.68"/><ellipse cx="42.7" cy="41.9" rx="2.6" ry="2.5" fill="#70a852" opacity="0.59"/><ellipse cx="136.6" cy="38.1" rx="4.2" ry="4.5" fill="#2e602c" opacity="0.71"/><ellipse cx="225.8" cy="51.6" rx="3.1" ry="2.6" fill="#1e3e1e" opacity="0.72"/><ellipse cx="47.8" cy="51.6" rx="2.5" ry="2.7" fill="#3c7432" opacity="0.59"/><ellipse cx="94.6" cy="53.7" rx="2.9" ry="2.5" fill="#569444" opacity="0.65"/><ellipse cx="76.2" cy="72.9" rx="2.4" ry="2.4" fill="#6ea84e" opacity="0.70"/><ellipse cx="63.1" cy="74.0" rx="2.6" ry="2.9" fill="#4a8438" opacity="0.64"/><ellipse cx="62.1" cy="42.0" rx="3.0" ry="2.6" fill="#3c7432" opacity="0.80"/><ellipse cx="186.1" cy="33.2" rx="3.4" ry="3.2" fill="#24502a" opacity="0.82"/><ellipse cx="38.7" cy="59.4" rx="2.8" ry="2.8" fill="#80b45a" opacity="0.85"/><ellipse cx="184.7" cy="48.8" rx="4.1" ry="5.2" fill="#2a5a28" opacity="0.70"/><ellipse cx="71.4" cy="37.3" rx="4.7" ry="3.9" fill="#2e602c" opacity="0.61"/><ellipse cx="158.4" cy="30.1" rx="4.3" ry="5.0" fill="#3f7436" opacity="0.62"/><ellipse cx="173.0" cy="55.9" rx="2.8" ry="3.0" fill="#1e3e1e" opacity="0.81"/><ellipse cx="229.1" cy="32.3" rx="2.5" ry="2.6" fill="#24502a" opacity="0.81"/><ellipse cx="34.7" cy="52.0" rx="4.0" ry="4.7" fill="#62a048" opacity="0.64"/><ellipse cx="18.9" cy="29.2" rx="4.0" ry="3.2" fill="#24502a" opacity="0.58"/><ellipse cx="194.9" cy="42.5" rx="3.4" ry="3.7" fill="#1e3e1e" opacity="0.64"/><ellipse cx="173.6" cy="19.7" rx="2.8" ry="2.5" fill="#1f4424" opacity="0.56"/><ellipse cx="127.6" cy="36.7" rx="4.9" ry="4.0" fill="#24502a" opacity="0.62"/><ellipse cx="-0.1" cy="51.9" rx="4.8" ry="4.6" fill="#1e3e1e" opacity="0.63"/><ellipse cx="111.0" cy="65.4" rx="3.0" ry="2.7" fill="#4a8438" opacity="0.69"/><ellipse cx="96.7" cy="75.0" rx="2.3" ry="2.2" fill="#4a8438" opacity="0.56"/><ellipse cx="3.7" cy="43.5" rx="2.6" ry="2.7" fill="#62a048" opacity="0.77"/><ellipse cx="245.5" cy="42.6" rx="4.7" ry="5.0" fill="#4a863a" opacity="0.70"/><ellipse cx="74.7" cy="25.9" rx="4.4" ry="4.7" fill="#3f7436" opacity="0.65"/><ellipse cx="233.7" cy="72.6" rx="2.4" ry="2.3" fill="#80b45a" opacity="0.73"/><ellipse cx="53.9" cy="52.9" rx="2.9" ry="3.0" fill="#3c7432" opacity="0.72"/><ellipse cx="59.4" cy="72.2" rx="3.2" ry="2.6" fill="#5e9a44" opacity="0.77"/><ellipse cx="11.7" cy="50.3" rx="3.4" ry="2.8" fill="#3c7432" opacity="0.79"/><ellipse cx="73.8" cy="47.9" rx="2.9" ry="3.5" fill="#569444" opacity="0.66"/><ellipse cx="138.9" cy="42.0" rx="3.9" ry="5.1" fill="#3c7432" opacity="0.62"/><ellipse cx="18.0" cy="63.1" rx="3.6" ry="4.0" fill="#80b45a" opacity="0.58"/><ellipse cx="166.8" cy="48.6" rx="4.9" ry="5.1" fill="#3c7432" opacity="0.68"/><ellipse cx="122.9" cy="20.0" rx="4.0" ry="4.3" fill="#386c32" opacity="0.69"/><ellipse cx="114.3" cy="53.6" rx="2.1" ry="2.2" fill="#569444" opacity="0.77"/><ellipse cx="195.3" cy="62.1" rx="2.6" ry="2.9" fill="#6ea84e" opacity="0.81"/><ellipse cx="238.1" cy="47.5" rx="2.6" ry="2.9" fill="#569444" opacity="0.78"/><ellipse cx="248.5" cy="26.5" rx="3.2" ry="2.9" fill="#1f4424" opacity="0.58"/><ellipse cx="42.0" cy="51.7" rx="2.8" ry="3.0" fill="#2a5a28" opacity="0.67"/><ellipse cx="105.6" cy="27.5" rx="4.2" ry="4.1" fill="#1f4424" opacity="0.80"/><ellipse cx="65.7" cy="33.3" rx="2.7" ry="3.2" fill="#2e602c" opacity="0.56"/><ellipse cx="101.2" cy="67.7" rx="3.8" ry="4.0" fill="#2a5226" opacity="0.68"/><ellipse cx="123.8" cy="40.9" rx="2.6" ry="2.2" fill="#2a5a28" opacity="0.75"/><ellipse cx="37.7" cy="26.9" rx="3.7" ry="4.8" fill="#24502a" opacity="0.60"/><ellipse cx="192.7" cy="70.4" rx="2.4" ry="3.0" fill="#4a8438" opacity="0.65"/><ellipse cx="212.5" cy="70.9" rx="3.3" ry="2.9" fill="#80b45a" opacity="0.79"/><ellipse cx="154.9" cy="47.6" rx="3.9" ry="4.9" fill="#62a048" opacity="0.64"/><ellipse cx="1.6" cy="73.5" rx="3.0" ry="2.7" fill="#2a5226" opacity="0.59"/><ellipse cx="47.1" cy="37.1" rx="3.2" ry="3.9" fill="#2e602c" opacity="0.67"/><ellipse cx="183.3" cy="26.4" rx="3.7" ry="4.5" fill="#2e602c" opacity="0.62"/><ellipse cx="180.8" cy="21.9" rx="3.9" ry="5.0" fill="#2e602c" opacity="0.81"/><ellipse cx="203.6" cy="25.5" rx="2.8" ry="2.6" fill="#2e602c" opacity="0.67"/><ellipse cx="51.5" cy="36.4" rx="3.9" ry="4.0" fill="#24502a" opacity="0.64"/><ellipse cx="131.4" cy="42.3" rx="3.7" ry="4.8" fill="#70a852" opacity="0.62"/><ellipse cx="229.5" cy="38.3" rx="4.0" ry="4.0" fill="#24502a" opacity="0.82"/><ellipse cx="177.3" cy="64.7" rx="4.3" ry="4.0" fill="#4a8438" opacity="0.59"/><ellipse cx="142.0" cy="17.0" rx="4.6" ry="5.1" fill="#386c32" opacity="0.63"/><ellipse cx="9.0" cy="64.3" rx="3.8" ry="3.8" fill="#6ea84e" opacity="0.67"/><ellipse cx="70.3" cy="48.5" rx="4.3" ry="5.6" fill="#2a5a28" opacity="0.61"/><ellipse cx="-2.8" cy="64.7" rx="3.1" ry="2.9" fill="#3c6a30" opacity="0.85"/><ellipse cx="46.9" cy="49.6" rx="3.4" ry="3.4" fill="#1e3e1e" opacity="0.55"/><ellipse cx="134.3" cy="47.8" rx="3.5" ry="2.8" fill="#2a5a28" opacity="0.58"/><ellipse cx="73.8" cy="35.2" rx="3.6" ry="3.2" fill="#2e602c" opacity="0.83"/><ellipse cx="62.7" cy="27.6" rx="3.6" ry="4.4" fill="#2e602c" opacity="0.86"/><ellipse cx="243.9" cy="24.7" rx="3.1" ry="3.5" fill="#24502a" opacity="0.73"/><ellipse cx="84.8" cy="47.2" rx="2.0" ry="2.3" fill="#2a5a28" opacity="0.86"/><ellipse cx="135.2" cy="25.6" rx="4.7" ry="5.3" fill="#24502a" opacity="0.62"/><ellipse cx="23.3" cy="30.2" rx="3.0" ry="2.5" fill="#2e602c" opacity="0.70"/><ellipse cx="28.1" cy="70.4" rx="4.2" ry="4.8" fill="#a0c088" opacity="0.81"/><ellipse cx="153.2" cy="62.8" rx="4.1" ry="5.0" fill="#5e9a44" opacity="0.80"/><ellipse cx="159.8" cy="18.0" rx="4.3" ry="3.7" fill="#1f4424" opacity="0.85"/><ellipse cx="109.2" cy="51.3" rx="4.0" ry="4.4" fill="#4a863a" opacity="0.87"/><ellipse cx="73.4" cy="56.3" rx="2.2" ry="2.0" fill="#70a852" opacity="0.86"/><ellipse cx="107.4" cy="44.8" rx="3.6" ry="3.8" fill="#1e3e1e" opacity="0.65"/><ellipse cx="83.9" cy="62.1" rx="2.5" ry="2.1" fill="#a0c088" opacity="0.87"/><ellipse cx="180.9" cy="54.0" rx="3.2" ry="3.3" fill="#62a048" opacity="0.63"/><ellipse cx="22.3" cy="43.4" rx="3.8" ry="3.9" fill="#569444" opacity="0.57"/><ellipse cx="158.5" cy="48.6" rx="4.5" ry="5.0" fill="#569444" opacity="0.72"/><ellipse cx="128.8" cy="46.8" rx="4.5" ry="5.5" fill="#4a863a" opacity="0.90"/><ellipse cx="19.0" cy="60.3" rx="4.4" ry="4.4" fill="#3c6a30" opacity="0.61"/><ellipse cx="212.3" cy="60.4" rx="4.9" ry="3.9" fill="#90bc68" opacity="0.61"/><ellipse cx="47.3" cy="73.9" rx="3.4" ry="3.2" fill="#6ea84e" opacity="0.78"/><ellipse cx="201.9" cy="58.2" rx="2.0" ry="1.9" fill="#2a5a28" opacity="0.76"/><ellipse cx="226.9" cy="56.2" rx="4.3" ry="4.8" fill="#4a863a" opacity="0.75"/><ellipse cx="122.1" cy="67.5" rx="3.6" ry="3.3" fill="#a0c088" opacity="0.62"/><ellipse cx="5.9" cy="70.0" rx="2.2" ry="2.0" fill="#5e9a44" opacity="0.72"/><ellipse cx="79.3" cy="30.9" rx="3.1" ry="3.2" fill="#2e602c" opacity="0.73"/><ellipse cx="132.6" cy="21.7" rx="3.6" ry="3.2" fill="#386c32" opacity="0.65"/><ellipse cx="59.8" cy="69.0" rx="4.5" ry="3.9" fill="#2a5226" opacity="0.70"/><ellipse cx="173.9" cy="23.0" rx="4.8" ry="6.0" fill="#24502a" opacity="0.79"/><ellipse cx="152.6" cy="74.6" rx="2.8" ry="2.8" fill="#90bc68" opacity="0.55"/><ellipse cx="239.7" cy="65.0" rx="3.2" ry="3.2" fill="#5e9a44" opacity="0.86"/><ellipse cx="188.4" cy="58.6" rx="4.5" ry="5.8" fill="#3c7432" opacity="0.88"/><ellipse cx="43.3" cy="71.5" rx="3.0" ry="3.6" fill="#2a5226" opacity="0.88"/><ellipse cx="172.4" cy="39.4" rx="3.5" ry="3.5" fill="#1f4424" opacity="0.67"/><ellipse cx="151.9" cy="32.0" rx="4.6" ry="4.3" fill="#24502a" opacity="0.60"/><ellipse cx="63.3" cy="30.3" rx="4.6" ry="5.0" fill="#3f7436" opacity="0.85"/><ellipse cx="219.7" cy="30.9" rx="4.5" ry="5.8" fill="#386c32" opacity="0.82"/><ellipse cx="95.8" cy="36.3" rx="4.0" ry="4.9" fill="#2e602c" opacity="0.78"/><ellipse cx="88.2" cy="65.0" rx="2.8" ry="3.1" fill="#2a5226" opacity="0.82"/><ellipse cx="35.8" cy="42.0" rx="2.2" ry="2.8" fill="#569444" opacity="0.82"/><ellipse cx="67.1" cy="32.0" rx="4.2" ry="4.7" fill="#1f4424" opacity="0.62"/><ellipse cx="178.5" cy="50.0" rx="3.1" ry="2.9" fill="#62a048" opacity="0.64"/><ellipse cx="224.3" cy="28.1" rx="4.2" ry="4.6" fill="#3f7436" opacity="0.88"/><ellipse cx="162.6" cy="51.7" rx="4.6" ry="5.8" fill="#3c7432" opacity="0.84"/><ellipse cx="134.8" cy="72.6" rx="2.9" ry="2.5" fill="#a0c088" opacity="0.73"/><ellipse cx="62.0" cy="72.4" rx="4.4" ry="5.2" fill="#3c6a30" opacity="0.79"/><ellipse cx="62.8" cy="36.0" rx="4.0" ry="4.8" fill="#3f7436" opacity="0.82"/><ellipse cx="18.0" cy="66.9" rx="2.0" ry="2.5" fill="#3c6a30" opacity="0.75"/><ellipse cx="106.1" cy="31.2" rx="3.2" ry="3.8" fill="#1f4424" opacity="0.67"/><ellipse cx="223.1" cy="43.5" rx="2.2" ry="1.9" fill="#4a863a" opacity="0.64"/><ellipse cx="191.3" cy="26.7" rx="3.6" ry="4.0" fill="#2e602c" opacity="0.67"/><ellipse cx="188.0" cy="66.3" rx="3.7" ry="4.6" fill="#a0c088" opacity="0.57"/><ellipse cx="16.0" cy="54.6" rx="2.4" ry="2.2" fill="#62a048" opacity="0.83"/><ellipse cx="47.6" cy="35.1" rx="4.3" ry="4.3" fill="#2e602c" opacity="0.73"/><ellipse cx="2.9" cy="32.1" rx="3.0" ry="3.5" fill="#1f4424" opacity="0.70"/><ellipse cx="53.0" cy="29.3" rx="4.1" ry="4.8" fill="#3f7436" opacity="0.79"/><ellipse cx="210.7" cy="31.1" rx="2.6" ry="2.1" fill="#386c32" opacity="0.72"/><ellipse cx="163.2" cy="26.7" rx="2.7" ry="2.5" fill="#1f4424" opacity="0.86"/><ellipse cx="12.3" cy="69.2" rx="3.9" ry="4.8" fill="#a0c088" opacity="0.77"/><ellipse cx="37.2" cy="56.8" rx="3.3" ry="4.0" fill="#70a852" opacity="0.86"/><ellipse cx="212.7" cy="67.1" rx="3.7" ry="4.2" fill="#a0c088" opacity="0.75"/><ellipse cx="104.3" cy="27.1" rx="2.3" ry="2.4" fill="#2e602c" opacity="0.63"/><ellipse cx="99.2" cy="68.1" rx="3.9" ry="3.5" fill="#80b45a" opacity="0.86"/><ellipse cx="238.4" cy="36.0" rx="2.4" ry="1.9" fill="#1f4424" opacity="0.69"/><ellipse cx="206.7" cy="51.1" rx="4.6" ry="3.9" fill="#4a863a" opacity="0.87"/><ellipse cx="4.5" cy="74.5" rx="2.7" ry="2.8" fill="#a0c088" opacity="0.79"/><ellipse cx="70.6" cy="67.1" rx="2.3" ry="2.6" fill="#a0c088" opacity="0.57"/><ellipse cx="234.2" cy="38.5" rx="2.2" ry="1.9" fill="#386c32" opacity="0.85"/><ellipse cx="170.1" cy="54.5" rx="3.4" ry="4.2" fill="#3c7432" opacity="0.84"/><ellipse cx="177.1" cy="42.1" rx="2.8" ry="3.4" fill="#4a863a" opacity="0.67"/><ellipse cx="160.7" cy="21.3" rx="4.3" ry="4.7" fill="#386c32" opacity="0.77"/><ellipse cx="36.1" cy="37.7" rx="4.1" ry="4.2" fill="#2e602c" opacity="0.73"/><ellipse cx="19.6" cy="40.7" rx="2.2" ry="2.8" fill="#70a852" opacity="0.73"/><ellipse cx="186.7" cy="58.4" rx="2.6" ry="3.0" fill="#62a048" opacity="0.69"/><ellipse cx="237.4" cy="56.0" rx="2.9" ry="3.5" fill="#1e3e1e" opacity="0.60"/><ellipse cx="174.2" cy="55.1" rx="4.8" ry="4.4" fill="#3c7432" opacity="0.73"/><ellipse cx="111.2" cy="62.0" rx="3.2" ry="3.8" fill="#2a5226" opacity="0.73"/><ellipse cx="73.0" cy="44.4" rx="3.1" ry="2.6" fill="#569444" opacity="0.84"/><ellipse cx="152.4" cy="37.1" rx="2.3" ry="2.6" fill="#1f4424" opacity="0.64"/><ellipse cx="114.0" cy="25.4" rx="2.7" ry="3.1" fill="#3f7436" opacity="0.85"/><ellipse cx="37.9" cy="31.3" rx="3.1" ry="2.8" fill="#1f4424" opacity="0.70"/><ellipse cx="2.2" cy="70.0" rx="5.0" ry="4.1" fill="#90bc68" opacity="0.76"/><ellipse cx="44.3" cy="29.9" rx="3.4" ry="3.4" fill="#3f7436" opacity="0.83"/><ellipse cx="214.1" cy="44.9" rx="2.0" ry="1.6" fill="#70a852" opacity="0.89"/><ellipse cx="100.6" cy="27.4" rx="2.5" ry="2.8" fill="#2e602c" opacity="0.59"/><ellipse cx="140.6" cy="70.6" rx="4.7" ry="5.3" fill="#a0c088" opacity="0.66"/><ellipse cx="158.4" cy="55.6" rx="3.8" ry="3.6" fill="#2a5a28" opacity="0.55"/><ellipse cx="92.4" cy="61.6" rx="4.7" ry="6.0" fill="#90bc68" opacity="0.55"/><ellipse cx="59.8" cy="41.7" rx="3.4" ry="3.8" fill="#2a5a28" opacity="0.55"/><ellipse cx="211.0" cy="37.7" rx="4.8" ry="4.1" fill="#3f7436" opacity="0.69"/><ellipse cx="35.4" cy="63.4" rx="2.3" ry="2.8" fill="#6ea84e" opacity="0.64"/><ellipse cx="1.7" cy="61.0" rx="2.9" ry="3.0" fill="#5e9a44" opacity="0.88"/><ellipse cx="82.8" cy="47.0" rx="4.6" ry="4.5" fill="#4a863a" opacity="0.84"/><ellipse cx="205.7" cy="30.8" rx="4.8" ry="4.8" fill="#386c32" opacity="0.67"/><ellipse cx="22.5" cy="69.7" rx="3.3" ry="4.1" fill="#a0c088" opacity="0.67"/><ellipse cx="20.6" cy="73.9" rx="3.4" ry="3.8" fill="#90bc68" opacity="0.73"/><ellipse cx="123.6" cy="38.8" rx="2.6" ry="3.2" fill="#24502a" opacity="0.75"/><ellipse cx="60.4" cy="71.5" rx="2.6" ry="3.4" fill="#80b45a" opacity="0.81"/><ellipse cx="195.4" cy="49.9" rx="4.1" ry="3.6" fill="#70a852" opacity="0.67"/><ellipse cx="246.0" cy="65.2" rx="4.3" ry="4.8" fill="#6ea84e" opacity="0.61"/><ellipse cx="178.0" cy="34.7" rx="2.8" ry="2.3" fill="#386c32" opacity="0.71"/><ellipse cx="224.2" cy="39.7" rx="2.9" ry="3.2" fill="#70a852" opacity="0.75"/><ellipse cx="224.0" cy="27.0" rx="3.0" ry="3.5" fill="#2e602c" opacity="0.64"/><ellipse cx="232.6" cy="33.5" rx="3.3" ry="3.8" fill="#2e602c" opacity="0.89"/><ellipse cx="201.3" cy="47.7" rx="2.4" ry="2.7" fill="#2a5a28" opacity="0.67"/><ellipse cx="34.5" cy="40.8" rx="4.5" ry="3.6" fill="#569444" opacity="0.63"/><ellipse cx="90.2" cy="38.3" rx="3.8" ry="4.9" fill="#2e602c" opacity="0.66"/><ellipse cx="245.5" cy="54.1" rx="3.5" ry="3.4" fill="#1e3e1e" opacity="0.66"/><ellipse cx="223.4" cy="26.1" rx="3.2" ry="2.8" fill="#3f7436" opacity="0.75"/><ellipse cx="193.8" cy="67.5" rx="3.5" ry="3.6" fill="#3c6a30" opacity="0.85"/><ellipse cx="68.2" cy="37.2" rx="4.4" ry="5.5" fill="#24502a" opacity="0.59"/><ellipse cx="104.5" cy="65.4" rx="4.8" ry="5.9" fill="#80b45a" opacity="0.71"/><ellipse cx="65.9" cy="55.3" rx="4.1" ry="4.1" fill="#3c7432" opacity="0.55"/><ellipse cx="206.5" cy="51.7" rx="2.8" ry="2.5" fill="#569444" opacity="0.84"/><ellipse cx="1.5" cy="63.4" rx="2.5" ry="2.8" fill="#4a8438" opacity="0.58"/><ellipse cx="-0.8" cy="45.3" rx="4.1" ry="4.8" fill="#62a048" opacity="0.63"/><ellipse cx="79.5" cy="49.1" rx="2.8" ry="2.3" fill="#569444" opacity="0.75"/><ellipse cx="138.2" cy="65.4" rx="3.8" ry="4.2" fill="#3c6a30" opacity="0.77"/><ellipse cx="188.3" cy="61.8" rx="3.5" ry="3.1" fill="#a0c088" opacity="0.67"/><ellipse cx="19.0" cy="67.1" rx="2.8" ry="2.6" fill="#3c6a30" opacity="0.76"/><ellipse cx="4.4" cy="53.7" rx="2.4" ry="2.1" fill="#62a048" opacity="0.71"/><ellipse cx="71.1" cy="48.7" rx="3.5" ry="2.9" fill="#569444" opacity="0.70"/><ellipse cx="226.0" cy="72.7" rx="4.0" ry="4.9" fill="#80b45a" opacity="0.72"/><ellipse cx="137.4" cy="23.3" rx="2.0" ry="2.1" fill="#3f7436" opacity="0.70"/><ellipse cx="163.6" cy="66.1" rx="3.2" ry="3.0" fill="#2a5226" opacity="0.71"/><ellipse cx="157.0" cy="21.5" rx="3.5" ry="3.0" fill="#3f7436" opacity="0.75"/><ellipse cx="35.3" cy="40.2" rx="2.2" ry="2.3" fill="#569444" opacity="0.82"/><ellipse cx="62.2" cy="73.5" rx="4.1" ry="4.3" fill="#5e9a44" opacity="0.76"/><ellipse cx="19.4" cy="55.2" rx="2.9" ry="3.7" fill="#2a5a28" opacity="0.60"/><ellipse cx="172.5" cy="38.8" rx="2.3" ry="2.9" fill="#2e602c" opacity="0.83"/><ellipse cx="157.4" cy="74.7" rx="3.7" ry="4.1" fill="#3c6a30" opacity="0.85"/><ellipse cx="212.7" cy="37.9" rx="2.6" ry="2.5" fill="#3f7436" opacity="0.66"/><ellipse cx="157.4" cy="63.5" rx="3.1" ry="3.0" fill="#4a8438" opacity="0.68"/><ellipse cx="69.3" cy="71.0" rx="4.7" ry="4.8" fill="#4a8438" opacity="0.68"/><ellipse cx="218.9" cy="46.7" rx="2.2" ry="2.3" fill="#3c7432" opacity="0.70"/><ellipse cx="183.1" cy="54.5" rx="3.3" ry="4.2" fill="#569444" opacity="0.68"/><ellipse cx="185.3" cy="29.7" rx="4.7" ry="4.0" fill="#24502a" opacity="0.85"/><ellipse cx="91.2" cy="52.1" rx="3.8" ry="4.4" fill="#1e3e1e" opacity="0.55"/><ellipse cx="207.7" cy="68.3" rx="2.6" ry="2.5" fill="#3c6a30" opacity="0.81"/><ellipse cx="91.8" cy="55.8" rx="3.0" ry="2.9" fill="#70a852" opacity="0.83"/><ellipse cx="157.9" cy="46.8" rx="4.0" ry="3.6" fill="#70a852" opacity="0.88"/><ellipse cx="239.7" cy="28.6" rx="4.3" ry="5.0" fill="#386c32" opacity="0.71"/><ellipse cx="162.7" cy="26.0" rx="4.5" ry="4.5" fill="#24502a" opacity="0.68"/><ellipse cx="114.8" cy="32.6" rx="3.5" ry="2.9" fill="#386c32" opacity="0.63"/><ellipse cx="91.6" cy="26.4" rx="3.3" ry="4.2" fill="#1f4424" opacity="0.78"/><ellipse cx="175.5" cy="23.1" rx="2.3" ry="2.8" fill="#1f4424" opacity="0.87"/><ellipse cx="105.2" cy="27.3" rx="2.9" ry="3.2" fill="#24502a" opacity="0.77"/><ellipse cx="87.2" cy="72.4" rx="4.0" ry="5.0" fill="#a0c088" opacity="0.80"/><ellipse cx="140" cy="68" rx="11" ry="7" fill="#a9b99a" opacity="0.7"/><ellipse cx="160" cy="66" rx="4" ry="9" fill="#b0aa9a" opacity="0.5"/></g><rect x="0" y="74" width="246" height="5" fill="#a2c04a"/><rect x="0" y="73.5" width="110" height="2.5" fill="#b8cf5c" opacity="0.8"/><rect x="150" y="76.5" width="30" height="2.5" fill="#b9a98f" opacity="0.6"/><rect x="0" y="79" width="246" height="46" fill="url(#wa)"/><rect x="0" y="90" width="246" height="35" fill="url(#wla)"/><rect x="213.7" y="120.0" width="1.6" height="1" fill="#6a7090" opacity="0.5"/><rect x="18.9" y="122.1" width="2.6" height="1" fill="#3c4560" opacity="0.5"/><rect x="200.2" y="84.1" width="1.8" height="1" fill="#5a6270" opacity="0.5"/><rect x="154.6" y="100.6" width="1.8" height="1" fill="#3c4030" opacity="0.5"/><rect x="68.3" y="94.2" width="2.1" height="1" fill="#a0a6c8" opacity="0.5"/><rect x="38.2" y="98.6" width="1.6" height="1" fill="#a0a6c8" opacity="0.5"/><rect x="202.8" y="87.5" width="2.6" height="1" fill="#2c3020" opacity="0.5"/><rect x="197.1" y="96.4" width="2.3" height="1" fill="#3c4030" opacity="0.5"/><rect x="5.7" y="87.5" width="3.2" height="1" fill="#a0a6c8" opacity="0.5"/><rect x="178.2" y="104.8" width="2.5" height="1" fill="#2c3020" opacity="0.5"/><rect x="235.5" y="86.3" width="2.4" height="1" fill="#3c4030" opacity="0.5"/><rect x="121.1" y="101.1" width="1.9" height="1" fill="#2c3020" opacity="0.5"/><rect x="58.5" y="114.0" width="2.0" height="1" fill="#a0a6c8" opacity="0.5"/><rect x="183.2" y="117.3" width="1.5" height="1" fill="#6a7090" opacity="0.5"/><rect x="53.7" y="103.4" width="1.9" height="1" fill="#7a84b2" opacity="0.5"/><rect x="91.2" y="118.2" width="1.9" height="1" fill="#7a84b2" opacity="0.5"/><rect x="26.7" y="105.5" width="1.5" height="1" fill="#3c4560" opacity="0.5"/><rect x="143.9" y="106.6" width="2.1" height="1" fill="#5a6270" opacity="0.5"/><rect x="239.3" y="111.2" width="2.0" height="1" fill="#2c3020" opacity="0.5"/><rect x="45.7" y="123.1" width="2.0" height="1" fill="#a0a6c8" opacity="0.5"/><rect x="172.0" y="121.3" width="1.2" height="1" fill="#4b5478" opacity="0.5"/><rect x="134.1" y="120.9" width="1.3" height="1" fill="#4b5478" opacity="0.5"/><rect x="207.2" y="104.1" width="2.9" height="1" fill="#5a6270" opacity="0.5"/><rect x="67.0" y="92.7" width="3.4" height="1" fill="#7a84b2" opacity="0.5"/><rect x="198.0" y="108.0" width="2.9" height="1" fill="#2c3020" opacity="0.5"/><rect x="238.4" y="104.6" width="1.7" height="1" fill="#2c3020" opacity="0.5"/><rect x="203.5" y="123.1" width="1.1" height="1" fill="#2c3020" opacity="0.5"/><rect x="217.1" y="93.8" width="1.9" height="1" fill="#6a7090" opacity="0.5"/><rect x="154.0" y="102.3" width="1.4" height="1" fill="#2c3020" opacity="0.5"/><rect x="129.1" y="113.1" width="3.3" height="1" fill="#3c4030" opacity="0.5"/><rect x="64.9" y="104.6" width="3.1" height="1" fill="#7a84b2" opacity="0.5"/><rect x="149.4" y="99.9" width="1.6" height="1" fill="#5a6270" opacity="0.5"/><rect x="196.6" y="100.2" width="1.1" height="1" fill="#4b5478" opacity="0.5"/><rect x="169.4" y="116.7" width="3.0" height="1" fill="#2c3020" opacity="0.5"/><rect x="151.0" y="119.5" width="3.2" height="1" fill="#2c3020" opacity="0.5"/><rect x="18.5" y="108.9" width="1.5" height="1" fill="#8c94bc" opacity="0.5"/><rect x="237.2" y="120.2" width="3.0" height="1" fill="#4b5478" opacity="0.5"/><rect x="115.7" y="104.8" width="3.1" height="1" fill="#4b5478" opacity="0.5"/><rect x="9.8" y="92.9" width="2.3" height="1" fill="#a0a6c8" opacity="0.5"/><rect x="17.8" y="110.0" width="1.1" height="1" fill="#7a84b2" opacity="0.5"/><rect x="107.8" y="95.2" width="1.4" height="1" fill="#4b5478" opacity="0.5"/><rect x="231.3" y="98.8" width="2.7" height="1" fill="#6a7090" opacity="0.5"/><rect x="112.2" y="114.0" width="3.2" height="1" fill="#2c3020" opacity="0.5"/><rect x="90.4" y="100.7" width="1.1" height="1" fill="#3c4560" opacity="0.5"/><rect x="112.2" y="123.0" width="1.9" height="1" fill="#2c3020" opacity="0.5"/><rect x="31.6" y="95.0" width="1.5" height="1" fill="#4b5478" opacity="0.5"/><rect x="219.4" y="94.9" width="2.7" height="1" fill="#3c4030" opacity="0.5"/><rect x="59.6" y="105.3" width="1.7" height="1" fill="#a0a6c8" opacity="0.5"/><rect x="130.9" y="109.7" width="2.5" height="1" fill="#5a6270" opacity="0.5"/><rect x="204.8" y="84.9" width="2.2" height="1" fill="#5a6270" opacity="0.5"/><rect x="224.6" y="92.3" width="1.1" height="1" fill="#2c3020" opacity="0.5"/><rect x="184.2" y="94.6" width="2.1" height="1" fill="#4b5478" opacity="0.5"/><rect x="92.3" y="115.7" width="3.4" height="1" fill="#3c4560" opacity="0.5"/><rect x="53.7" y="99.3" width="1.2" height="1" fill="#4b5478" opacity="0.5"/><rect x="22.0" y="86.7" width="2.5" height="1" fill="#a0a6c8" opacity="0.5"/><rect x="227.2" y="92.8" width="3.5" height="1" fill="#3c4030" opacity="0.5"/><rect x="169.2" y="121.4" width="1.4" height="1" fill="#2c3020" opacity="0.5"/><rect x="18.3" y="95.5" width="2.1" height="1" fill="#4b5478" opacity="0.5"/><rect x="231.5" y="124.4" width="3.2" height="1" fill="#3c4030" opacity="0.5"/><rect x="208.6" y="117.4" width="2.4" height="1" fill="#5a6270" opacity="0.5"/><rect x="82.7" y="118.9" width="1.8" height="1" fill="#a0a6c8" opacity="0.5"/><rect x="126.0" y="106.5" width="1.9" height="1" fill="#4b5478" opacity="0.5"/><rect x="0.8" y="100.6" width="1.4" height="1" fill="#7a84b2" opacity="0.5"/><rect x="154.1" y="89.4" width="1.2" height="1" fill="#5a6270" opacity="0.5"/><rect x="231.1" y="91.2" width="2.5" height="1" fill="#3c4030" opacity="0.5"/><rect x="95.5" y="115.0" width="1.7" height="1" fill="#7a84b2" opacity="0.5"/><rect x="187.2" y="115.0" width="2.8" height="1" fill="#2c3020" opacity="0.5"/><rect x="73.6" y="108.6" width="2.7" height="1" fill="#7a84b2" opacity="0.5"/><rect x="66.7" y="110.7" width="2.2" height="1" fill="#3c4560" opacity="0.5"/><rect x="220.4" y="96.9" width="1.4" height="1" fill="#2c3020" opacity="0.5"/><rect x="47.1" y="100.4" width="2.7" height="1" fill="#3c4560" opacity="0.5"/><rect x="28.6" y="105.9" width="1.8" height="1" fill="#3c4560" opacity="0.5"/><rect x="39.1" y="114.8" width="1.6" height="1" fill="#4b5478" opacity="0.5"/><rect x="223.9" y="103.4" width="1.5" height="1" fill="#2c3020" opacity="0.5"/><rect x="143.9" y="91.6" width="1.7" height="1" fill="#6a7090" opacity="0.5"/><rect x="75.1" y="93.6" width="1.5" height="1" fill="#8c94bc" opacity="0.5"/><rect x="170.9" y="117.4" width="2.9" height="1" fill="#2c3020" opacity="0.5"/><rect x="229.5" y="122.2" width="2.4" height="1" fill="#6a7090" opacity="0.5"/><rect x="78.1" y="93.4" width="2.0" height="1" fill="#3c4560" opacity="0.5"/><rect x="47.3" y="115.1" width="1.9" height="1" fill="#4b5478" opacity="0.5"/><rect x="164.0" y="86.8" width="3.4" height="1" fill="#6a7090" opacity="0.5"/><rect x="28.1" y="112.3" width="1.4" height="1" fill="#4b5478" opacity="0.5"/><rect x="150.1" y="91.8" width="2.8" height="1" fill="#3c4030" opacity="0.5"/><rect x="157.4" y="96.6" width="1.5" height="1" fill="#2c3020" opacity="0.5"/><rect x="5.2" y="100.0" width="3.1" height="1" fill="#7a84b2" opacity="0.5"/><rect x="220.4" y="110.6" width="1.9" height="1" fill="#5a6270" opacity="0.5"/><rect x="183.8" y="122.8" width="1.7" height="1" fill="#2c3020" opacity="0.5"/><rect x="165.9" y="110.0" width="1.3" height="1" fill="#5a6270" opacity="0.5"/><rect x="234.7" y="98.6" width="2.7" height="1" fill="#2c3020" opacity="0.5"/><rect x="157.7" y="120.8" width="2.1" height="1" fill="#6a7090" opacity="0.5"/><rect x="183.5" y="111.3" width="3.3" height="1" fill="#5a6270" opacity="0.5"/><rect x="9.6" y="103.3" width="2.0" height="1" fill="#8c94bc" opacity="0.5"/><rect x="167.7" y="90.9" width="2.8" height="1" fill="#6a7090" opacity="0.5"/><rect x="173.1" y="106.5" width="1.4" height="1" fill="#4b5478" opacity="0.5"/><rect x="237.1" y="124.4" width="1.4" height="1" fill="#3c4030" opacity="0.5"/><rect x="187.1" y="96.6" width="2.9" height="1" fill="#3c4030" opacity="0.5"/><rect x="237.7" y="117.1" width="3.0" height="1" fill="#5a6270" opacity="0.5"/><rect x="239.2" y="86.7" width="2.1" height="1" fill="#3c4030" opacity="0.5"/><rect x="172.2" y="97.0" width="3.1" height="1" fill="#2c3020" opacity="0.5"/><rect x="68.6" y="85.4" width="3.0" height="1" fill="#3c4560" opacity="0.5"/><rect x="145.1" y="96.1" width="3.2" height="1" fill="#4b5478" opacity="0.5"/><rect x="235.6" y="114.6" width="2.5" height="1" fill="#3c4030" opacity="0.5"/><rect x="156.5" y="122.4" width="1.3" height="1" fill="#5a6270" opacity="0.5"/><rect x="29.8" y="113.1" width="1.8" height="1" fill="#a0a6c8" opacity="0.5"/><rect x="158.5" y="101.0" width="3.2" height="1" fill="#5a6270" opacity="0.5"/><rect x="187.9" y="105.6" width="3.3" height="1" fill="#4b5478" opacity="0.5"/><rect x="150.8" y="120.4" width="1.3" height="1" fill="#2c3020" opacity="0.5"/><rect x="134.9" y="116.5" width="1.5" height="1" fill="#2c3020" opacity="0.5"/><rect x="19.9" y="122.2" width="1.1" height="1" fill="#a0a6c8" opacity="0.5"/><rect x="204.6" y="112.5" width="1.6" height="1" fill="#5a6270" opacity="0.5"/><rect x="69.7" y="110.9" width="1.6" height="1" fill="#7a84b2" opacity="0.5"/><rect x="61.4" y="104.9" width="2.4" height="1" fill="#7a84b2" opacity="0.5"/><rect x="221.6" y="124.9" width="2.4" height="1" fill="#5a6270" opacity="0.5"/><rect x="145.7" y="87.6" width="2.7" height="1" fill="#6a7090" opacity="0.5"/><rect x="23.1" y="110.1" width="1.6" height="1" fill="#4b5478" opacity="0.5"/><rect x="245.6" y="111.4" width="1.2" height="1" fill="#2c3020" opacity="0.5"/><rect x="40.4" y="86.9" width="2.1" height="1" fill="#8c94bc" opacity="0.5"/><rect x="43.6" y="94.0" width="3.2" height="1" fill="#8c94bc" opacity="0.5"/><rect x="92.3" y="107.2" width="1.3" height="1" fill="#4b5478" opacity="0.5"/><rect x="137.9" y="122.9" width="3.4" height="1" fill="#4b5478" opacity="0.5"/><rect x="26.7" y="111.1" width="2.4" height="1" fill="#4b5478" opacity="0.5"/><rect x="15.9" y="90.2" width="2.9" height="1" fill="#4b5478" opacity="0.5"/><rect x="32.6" y="88.1" width="2.1" height="1" fill="#8c94bc" opacity="0.5"/><rect x="6.1" y="85.0" width="1.9" height="1" fill="#4b5478" opacity="0.5"/><rect x="166.7" y="117.1" width="2.5" height="1" fill="#4b5478" opacity="0.5"/><rect x="29.0" y="123.8" width="3.2" height="1" fill="#3c4560" opacity="0.5"/><rect x="108.2" y="108.9" width="3.1" height="1" fill="#7a84b2" opacity="0.5"/><rect x="60.5" y="112.0" width="3.0" height="1" fill="#7a84b2" opacity="0.5"/><rect x="169.8" y="110.4" width="2.2" height="1" fill="#4b5478" opacity="0.5"/><rect x="213.0" y="91.7" width="1.7" height="1" fill="#5a6270" opacity="0.5"/><rect x="166.2" y="124.6" width="1.9" height="1" fill="#6a7090" opacity="0.5"/><rect x="78.7" y="111.9" width="2.4" height="1" fill="#3c4560" opacity="0.5"/><rect x="184.5" y="106.3" width="2.1" height="1" fill="#4b5478" opacity="0.5"/><rect x="97.1" y="102.5" width="3.4" height="1" fill="#a0a6c8" opacity="0.5"/><rect x="139.6" y="104.2" width="2.7" height="1" fill="#4b5478" opacity="0.5"/><rect x="90.7" y="89.4" width="1.4" height="1" fill="#4b5478" opacity="0.5"/><rect x="115.8" y="113.1" width="2.4" height="1" fill="#5a6270" opacity="0.5"/><rect x="107.9" y="99.0" width="1.0" height="1" fill="#3c4560" opacity="0.5"/><rect x="15.5" y="99.3" width="2.0" height="1" fill="#a0a6c8" opacity="0.5"/><rect x="3.9" y="94.0" width="2.6" height="1" fill="#4b5478" opacity="0.5"/><rect x="29.4" y="116.4" width="2.5" height="1" fill="#8c94bc" opacity="0.5"/><rect x="209.9" y="119.0" width="3.2" height="1" fill="#2c3020" opacity="0.5"/><rect x="60.5" y="88.6" width="3.2" height="1" fill="#7a84b2" opacity="0.5"/><rect x="124.1" y="108.4" width="1.4" height="1" fill="#3c4030" opacity="0.5"/><rect x="144.6" y="110.9" width="2.3" height="1" fill="#5a6270" opacity="0.5"/><rect x="199.7" y="122.7" width="1.3" height="1" fill="#4b5478" opacity="0.5"/><rect x="59.3" y="114.8" width="1.3" height="1" fill="#8c94bc" opacity="0.5"/><rect x="243.0" y="113.4" width="2.0" height="1" fill="#5a6270" opacity="0.5"/><rect x="157.6" y="88.8" width="3.5" height="1" fill="#3c4030" opacity="0.5"/><rect x="205.4" y="91.2" width="2.2" height="1" fill="#3c4030" opacity="0.5"/><rect x="167.1" y="104.7" width="2.4" height="1" fill="#4b5478" opacity="0.5"/><rect x="117.2" y="99.1" width="1.1" height="1" fill="#6a7090" opacity="0.5"/><rect x="17.6" y="91.3" width="3.2" height="1" fill="#7a84b2" opacity="0.5"/><rect x="208.1" y="119.6" width="1.2" height="1" fill="#3c4030" opacity="0.5"/><rect x="98.4" y="87.2" width="2.4" height="1" fill="#a0a6c8" opacity="0.5"/><rect x="52.0" y="117.8" width="2.2" height="1" fill="#8c94bc" opacity="0.5"/><rect x="105.2" y="117.8" width="1.5" height="1" fill="#7a84b2" opacity="0.5"/><rect x="39.5" y="102.2" width="1.4" height="1" fill="#3c4560" opacity="0.5"/><rect x="87.8" y="106.9" width="2.1" height="1" fill="#7a84b2" opacity="0.5"/><rect x="226.7" y="96.2" width="3.0" height="1" fill="#5a6270" opacity="0.5"/><rect x="68.5" y="116.0" width="1.7" height="1" fill="#8c94bc" opacity="0.5"/><rect x="84.2" y="102.4" width="2.1" height="1" fill="#4b5478" opacity="0.5"/><rect x="23.3" y="98.1" width="1.6" height="1" fill="#a0a6c8" opacity="0.5"/><rect x="193.6" y="114.4" width="3.2" height="1" fill="#6a7090" opacity="0.5"/><rect x="78.3" y="102.7" width="2.6" height="1" fill="#7a84b2" opacity="0.5"/><rect x="139.7" y="93.1" width="1.7" height="1" fill="#2c3020" opacity="0.5"/><rect x="5.9" y="88.9" width="1.9" height="1" fill="#4b5478" opacity="0.5"/><rect x="69.8" y="112.0" width="1.5" height="1" fill="#4b5478" opacity="0.5"/><rect x="158.8" y="91.9" width="1.9" height="1" fill="#2c3020" opacity="0.5"/><rect x="171.3" y="105.9" width="1.8" height="1" fill="#4b5478" opacity="0.5"/><rect x="157.0" y="88.5" width="1.8" height="1" fill="#4b5478" opacity="0.5"/><rect x="174.1" y="111.0" width="2.1" height="1" fill="#6a7090" opacity="0.5"/><rect x="211.3" y="113.1" width="2.2" height="1" fill="#5a6270" opacity="0.5"/><rect x="45.8" y="96.5" width="3.3" height="1" fill="#a0a6c8" opacity="0.5"/><rect x="50.3" y="100.2" width="1.2" height="1" fill="#a0a6c8" opacity="0.5"/><rect x="207.9" y="118.7" width="3.2" height="1" fill="#6a7090" opacity="0.5"/><rect x="113.6" y="89.6" width="2.4" height="1" fill="#2c3020" opacity="0.5"/><rect x="113.1" y="122.4" width="1.9" height="1" fill="#2c3020" opacity="0.5"/><rect x="66.8" y="122.9" width="1.5" height="1" fill="#8c94bc" opacity="0.5"/><rect x="51.7" y="103.5" width="3.4" height="1" fill="#8c94bc" opacity="0.5"/><rect x="125.1" y="91.6" width="1.6" height="1" fill="#4b5478" opacity="0.5"/><rect x="8.5" y="87.7" width="2.3" height="1" fill="#8c94bc" opacity="0.5"/><rect x="242.9" y="98.6" width="1.7" height="1" fill="#3c4030" opacity="0.5"/><rect x="106.8" y="114.5" width="2.3" height="1" fill="#4b5478" opacity="0.5"/><rect x="180.6" y="95.3" width="3.3" height="1" fill="#4b5478" opacity="0.5"/><rect x="56.7" y="123.2" width="1.1" height="1" fill="#8c94bc" opacity="0.5"/><rect x="165.6" y="103.2" width="3.3" height="1" fill="#5a6270" opacity="0.5"/><rect x="97.3" y="101.9" width="1.4" height="1" fill="#a0a6c8" opacity="0.5"/><rect x="112.3" y="103.7" width="1.8" height="1" fill="#6a7090" opacity="0.5"/><rect x="14.2" y="117.4" width="1.3" height="1" fill="#8c94bc" opacity="0.5"/><rect x="189.3" y="116.2" width="3.3" height="1" fill="#6a7090" opacity="0.5"/><rect x="61.5" y="84.9" width="1.6" height="1" fill="#a0a6c8" opacity="0.5"/><rect x="129.8" y="94.8" width="1.3" height="1" fill="#5a6270" opacity="0.5"/><rect x="59.1" y="113.8" width="2.9" height="1" fill="#3c4560" opacity="0.5"/><rect x="60.0" y="109.2" width="2.3" height="1" fill="#7a84b2" opacity="0.5"/><rect x="52.5" y="122.6" width="2.1" height="1" fill="#4b5478" opacity="0.5"/><rect x="106.9" y="117.5" width="3.4" height="1" fill="#8c94bc" opacity="0.5"/><rect x="0.4" y="93.3" width="1.6" height="1" fill="#8c94bc" opacity="0.5"/><rect x="197.2" y="104.6" width="2.1" height="1" fill="#4b5478" opacity="0.5"/><rect x="190.3" y="93.6" width="1.1" height="1" fill="#6a7090" opacity="0.5"/><rect x="0.2" y="86.7" width="1.1" height="1" fill="#4b5478" opacity="0.5"/><rect x="239.3" y="107.0" width="3.0" height="1" fill="#3c4030" opacity="0.5"/><rect x="67.4" y="101.0" width="1.1" height="1" fill="#3c4560" opacity="0.5"/><rect x="19.2" y="103.4" width="2.3" height="1" fill="#a0a6c8" opacity="0.5"/><rect x="198.6" y="117.5" width="2.8" height="1" fill="#5a6270" opacity="0.5"/><rect x="78.9" y="123.1" width="2.7" height="1" fill="#7a84b2" opacity="0.5"/><rect x="32.6" y="121.5" width="1.8" height="1" fill="#8c94bc" opacity="0.5"/><rect x="170.4" y="97.5" width="1.8" height="1" fill="#5a6270" opacity="0.5"/><rect x="115.9" y="108.8" width="3.4" height="1" fill="#3c4030" opacity="0.5"/><rect x="38.3" y="112.6" width="2.7" height="1" fill="#7a84b2" opacity="0.5"/><rect x="52.2" y="111.0" width="2.8" height="1" fill="#7a84b2" opacity="0.5"/><rect x="45.0" y="85.7" width="2.7" height="1" fill="#8c94bc" opacity="0.5"/><rect x="30.5" y="89.3" width="1.9" height="1" fill="#4b5478" opacity="0.5"/><rect x="164.4" y="99.7" width="3.3" height="1" fill="#6a7090" opacity="0.5"/><rect x="159.9" y="123.9" width="3.5" height="1" fill="#5a6270" opacity="0.5"/><rect x="114.6" y="121.9" width="3.1" height="1" fill="#5a6270" opacity="0.5"/><rect x="187.3" y="90.1" width="3.4" height="1" fill="#4b5478" opacity="0.5"/><rect x="153.2" y="88.4" width="3.2" height="1" fill="#4b5478" opacity="0.5"/><rect x="94.5" y="117.2" width="3.5" height="1" fill="#3c4560" opacity="0.5"/><rect x="216.9" y="117.7" width="1.1" height="1" fill="#4b5478" opacity="0.5"/><rect x="5.7" y="85.3" width="3.1" height="1" fill="#8c94bc" opacity="0.5"/><rect x="210.4" y="101.4" width="3.0" height="1" fill="#4b5478" opacity="0.5"/><rect x="210.2" y="104.9" width="2.4" height="1" fill="#6a7090" opacity="0.5"/><rect x="122.8" y="97.0" width="2.9" height="1" fill="#4b5478" opacity="0.5"/><rect x="144.5" y="90.9" width="1.1" height="1" fill="#2c3020" opacity="0.5"/><rect x="69.8" y="101.1" width="1.9" height="1" fill="#4b5478" opacity="0.5"/><rect x="145.2" y="98.0" width="1.8" height="1" fill="#3c4030" opacity="0.5"/><rect x="105.5" y="114.3" width="2.2" height="1" fill="#a0a6c8" opacity="0.5"/><rect x="34.9" y="111.3" width="3.4" height="1" fill="#a0a6c8" opacity="0.5"/><rect x="1.5" y="104.0" width="2.7" height="1" fill="#4b5478" opacity="0.5"/><rect x="103.7" y="102.6" width="1.2" height="1" fill="#4b5478" opacity="0.5"/><rect x="70.8" y="103.2" width="3.0" height="1" fill="#7a84b2" opacity="0.5"/><rect x="245.6" y="85.9" width="1.3" height="1" fill="#6a7090" opacity="0.5"/><rect x="202.7" y="84.0" width="1.8" height="1" fill="#4b5478" opacity="0.5"/><rect x="14.1" y="96.2" width="2.1" height="1" fill="#3c4560" opacity="0.5"/><rect x="133.0" y="120.5" width="3.2" height="1" fill="#4b5478" opacity="0.5"/><rect x="242.1" y="113.6" width="1.3" height="1" fill="#5a6270" opacity="0.5"/><rect x="107.0" y="107.3" width="1.6" height="1" fill="#7a84b2" opacity="0.5"/><rect x="43.7" y="85.1" width="1.0" height="1" fill="#4b5478" opacity="0.5"/><rect x="39.2" y="109.1" width="1.8" height="1" fill="#4b5478" opacity="0.5"/><rect x="200.1" y="118.2" width="1.3" height="1" fill="#2c3020" opacity="0.5"/><rect x="68.4" y="85.2" width="2.9" height="1" fill="#3c4560" opacity="0.5"/><rect x="176.1" y="112.9" width="1.2" height="1" fill="#2c3020" opacity="0.5"/><rect x="76.4" y="97.2" width="3.4" height="1" fill="#7a84b2" opacity="0.5"/><rect x="194.3" y="103.4" width="1.7" height="1" fill="#4b5478" opacity="0.5"/><rect x="98.4" y="115.0" width="2.4" height="1" fill="#8c94bc" opacity="0.5"/><rect x="67.8" y="101.3" width="1.7" height="1" fill="#3c4560" opacity="0.5"/><rect x="242.8" y="94.2" width="2.9" height="1" fill="#4b5478" opacity="0.5"/><rect x="195.8" y="107.2" width="3.4" height="1" fill="#2c3020" opacity="0.5"/><rect x="73.2" y="89.6" width="3.0" height="1" fill="#3c4560" opacity="0.5"/><rect x="127.7" y="86.4" width="3.2" height="1" fill="#4b5478" opacity="0.5"/><rect x="178.9" y="121.5" width="1.9" height="1" fill="#5a6270" opacity="0.5"/><rect x="170.5" y="100.7" width="2.5" height="1" fill="#2c3020" opacity="0.5"/><rect x="101.9" y="97.9" width="1.3" height="1" fill="#4b5478" opacity="0.5"/><rect x="216.7" y="99.8" width="2.9" height="1" fill="#2c3020" opacity="0.5"/><rect x="159.0" y="93.5" width="2.3" height="1" fill="#3c4030" opacity="0.5"/><rect x="53.1" y="104.3" width="2.2" height="1" fill="#7a84b2" opacity="0.5"/><rect x="185.0" y="107.6" width="1.7" height="1" fill="#2c3020" opacity="0.5"/><rect x="127.7" y="103.5" width="3.4" height="1" fill="#3c4030" opacity="0.5"/><rect x="231.4" y="101.5" width="1.4" height="1" fill="#5a6270" opacity="0.5"/><path d="M115.1 125 L116.8 107.1" stroke="#8a8268" stroke-width="0.8" opacity="0.55"/><path d="M126.4 125 L125.3 99.4" stroke="#8a8268" stroke-width="0.8" opacity="0.55"/><path d="M181.5 125 L182.6 108.9" stroke="#8a8268" stroke-width="0.8" opacity="0.55"/><path d="M124.0 125 L123.1 100.3" stroke="#8a8268" stroke-width="0.8" opacity="0.55"/><path d="M193.1 125 L193.4 99.7" stroke="#8a8268" stroke-width="0.8" opacity="0.55"/><path d="M146.5 125 L148.5 108.0" stroke="#8a8268" stroke-width="0.8" opacity="0.55"/><path d="M176.2 125 L176.1 102.7" stroke="#8a8268" stroke-width="0.8" opacity="0.55"/><path d="M159.8 125 L158.6 99.8" stroke="#8a8268" stroke-width="0.8" opacity="0.55"/><path d="M152.8 125 L152.3 100.7" stroke="#8a8268" stroke-width="0.8" opacity="0.55"/><path d="M182.0 125 L181.3 106.0" stroke="#8a8268" stroke-width="0.8" opacity="0.55"/><path d="M171.7 125 L173.2 100.2" stroke="#8a8268" stroke-width="0.8" opacity="0.55"/><path d="M102.8 125 L104.2 107.6" stroke="#8a8268" stroke-width="0.8" opacity="0.55"/><path d="M132.0 125 L133.2 102.1" stroke="#8a8268" stroke-width="0.8" opacity="0.55"/><path d="M122.4 125 L120.7 107.3" stroke="#8a8268" stroke-width="0.8" opacity="0.55"/><path d="M184.5 125 L183.8 105.6" stroke="#8a8268" stroke-width="0.8" opacity="0.55"/><path d="M141.6 125 L140.2 108.4" stroke="#8a8268" stroke-width="0.8" opacity="0.55"/><path d="M135.9 125 L134.0 108.6" stroke="#8a8268" stroke-width="0.8" opacity="0.55"/><path d="M185.3 125 L185.1 101.6" stroke="#8a8268" stroke-width="0.8" opacity="0.55"/><path d="M129.6 125 L129.8 102.4" stroke="#8a8268" stroke-width="0.8" opacity="0.55"/><path d="M122.5 125 L122.1 106.7" stroke="#8a8268" stroke-width="0.8" opacity="0.55"/><path d="M163.1 125 L164.2 100.9" stroke="#8a8268" stroke-width="0.8" opacity="0.55"/><path d="M123.5 125 L123.8 105.5" stroke="#8a8268" stroke-width="0.8" opacity="0.55"/><path d="M168.1 125 L167.3 105.5" stroke="#8a8268" stroke-width="0.8" opacity="0.55"/><path d="M171.1 125 L171.5 100.6" stroke="#8a8268" stroke-width="0.8" opacity="0.55"/><g filter="url(#fa)"><ellipse cx="177.0" cy="120.1" rx="3.3" ry="3.3" fill="#eef0d8" opacity="0.85"/><ellipse cx="230.6" cy="123.0" rx="2.6" ry="2.6" fill="#eef0d8" opacity="0.85"/><ellipse cx="242.0" cy="98.6" rx="2.1" ry="2.1" fill="#8fae3a" opacity="0.85"/><ellipse cx="191.7" cy="117.3" rx="2.6" ry="2.6" fill="#c6d86c" opacity="0.85"/><ellipse cx="203.1" cy="123.5" rx="3.0" ry="3.0" fill="#7a9a30" opacity="0.85"/><ellipse cx="189.4" cy="122.7" rx="2.8" ry="2.8" fill="#a9c24e" opacity="0.85"/><ellipse cx="207.8" cy="118.2" rx="2.1" ry="2.1" fill="#a9c24e" opacity="0.85"/><ellipse cx="230.3" cy="102.3" rx="4.0" ry="4.0" fill="#c6d86c" opacity="0.85"/><ellipse cx="237.8" cy="117.8" rx="2.6" ry="2.6" fill="#a9c24e" opacity="0.85"/><ellipse cx="227.2" cy="116.6" rx="2.3" ry="2.3" fill="#c6d86c" opacity="0.85"/><ellipse cx="204.5" cy="123.5" rx="4.2" ry="4.2" fill="#c6d86c" opacity="0.85"/><ellipse cx="199.4" cy="114.2" rx="1.8" ry="1.8" fill="#c6d86c" opacity="0.85"/><ellipse cx="181.6" cy="121.2" rx="4.0" ry="4.0" fill="#d8e4a0" opacity="0.85"/><ellipse cx="233.8" cy="121.0" rx="3.6" ry="3.6" fill="#eef0d8" opacity="0.85"/><ellipse cx="235.3" cy="106.1" rx="2.6" ry="2.6" fill="#d8e4a0" opacity="0.85"/><ellipse cx="234.8" cy="98.2" rx="4.2" ry="4.2" fill="#b4cc58" opacity="0.85"/><ellipse cx="236.9" cy="107.3" rx="4.3" ry="4.3" fill="#7a9a30" opacity="0.85"/><ellipse cx="227.6" cy="101.8" rx="2.1" ry="2.1" fill="#8fae3a" opacity="0.85"/><ellipse cx="241.6" cy="97.6" rx="2.6" ry="2.6" fill="#8fae3a" opacity="0.85"/><ellipse cx="214.1" cy="114.3" rx="2.0" ry="2.0" fill="#c6d86c" opacity="0.85"/><ellipse cx="191.8" cy="116.8" rx="4.1" ry="4.1" fill="#7a9a30" opacity="0.85"/><ellipse cx="236.6" cy="101.8" rx="3.7" ry="3.7" fill="#eef0d8" opacity="0.85"/><ellipse cx="189.1" cy="117.9" rx="3.1" ry="3.1" fill="#a9c24e" opacity="0.85"/><ellipse cx="219.6" cy="112.6" rx="3.7" ry="3.7" fill="#8fae3a" opacity="0.85"/><ellipse cx="222.1" cy="105.6" rx="3.3" ry="3.3" fill="#a9c24e" opacity="0.85"/><ellipse cx="191.6" cy="116.6" rx="3.4" ry="3.4" fill="#8fae3a" opacity="0.85"/><ellipse cx="239.0" cy="103.1" rx="3.3" ry="3.3" fill="#c6d86c" opacity="0.85"/><ellipse cx="207.0" cy="115.3" rx="4.2" ry="4.2" fill="#c6d86c" opacity="0.85"/><ellipse cx="243.6" cy="101.7" rx="2.1" ry="2.1" fill="#c6d86c" opacity="0.85"/><ellipse cx="198.5" cy="124.6" rx="2.7" ry="2.7" fill="#c6d86c" opacity="0.85"/><ellipse cx="193.1" cy="122.3" rx="3.1" ry="3.1" fill="#8fae3a" opacity="0.85"/><ellipse cx="220.4" cy="123.9" rx="2.9" ry="2.9" fill="#b4cc58" opacity="0.85"/><ellipse cx="231.1" cy="111.2" rx="2.9" ry="2.9" fill="#8fae3a" opacity="0.85"/><ellipse cx="230.8" cy="123.0" rx="3.3" ry="3.3" fill="#b4cc58" opacity="0.85"/><ellipse cx="231.4" cy="107.1" rx="3.6" ry="3.6" fill="#a9c24e" opacity="0.85"/><ellipse cx="244.9" cy="120.7" rx="2.3" ry="2.3" fill="#b4cc58" opacity="0.85"/><ellipse cx="221.2" cy="104.1" rx="2.8" ry="2.8" fill="#eef0d8" opacity="0.85"/><ellipse cx="238.2" cy="120.1" rx="2.5" ry="2.5" fill="#eef0d8" opacity="0.85"/><ellipse cx="244.8" cy="122.0" rx="3.6" ry="3.6" fill="#7a9a30" opacity="0.85"/><ellipse cx="244.2" cy="116.0" rx="1.9" ry="1.9" fill="#d8e4a0" opacity="0.85"/><ellipse cx="244.7" cy="111.0" rx="2.8" ry="2.8" fill="#c6d86c" opacity="0.85"/><ellipse cx="198.2" cy="116.4" rx="4.3" ry="4.3" fill="#c6d86c" opacity="0.85"/><ellipse cx="213.4" cy="116.0" rx="1.8" ry="1.8" fill="#7a9a30" opacity="0.85"/><ellipse cx="194.9" cy="120.5" rx="1.8" ry="1.8" fill="#8fae3a" opacity="0.85"/><ellipse cx="226.2" cy="118.1" rx="2.9" ry="2.9" fill="#c6d86c" opacity="0.85"/><ellipse cx="213.0" cy="106.0" rx="1.9" ry="1.9" fill="#8fae3a" opacity="0.85"/><ellipse cx="230.4" cy="102.0" rx="4.2" ry="4.2" fill="#b4cc58" opacity="0.85"/><ellipse cx="212.4" cy="112.1" rx="4.1" ry="4.1" fill="#d8e4a0" opacity="0.85"/><ellipse cx="236.6" cy="111.3" rx="3.6" ry="3.6" fill="#b4cc58" opacity="0.85"/><ellipse cx="232.3" cy="99.0" rx="4.1" ry="4.1" fill="#b4cc58" opacity="0.85"/><ellipse cx="219.2" cy="105.4" rx="2.2" ry="2.2" fill="#c6d86c" opacity="0.85"/><ellipse cx="197.1" cy="115.8" rx="2.7" ry="2.7" fill="#8fae3a" opacity="0.85"/><ellipse cx="219.4" cy="123.7" rx="3.7" ry="3.7" fill="#eef0d8" opacity="0.85"/><ellipse cx="231.9" cy="110.6" rx="3.2" ry="3.2" fill="#a9c24e" opacity="0.85"/><ellipse cx="230.4" cy="103.5" rx="3.8" ry="3.8" fill="#7a9a30" opacity="0.85"/><ellipse cx="245.4" cy="99.0" rx="3.2" ry="3.2" fill="#a9c24e" opacity="0.85"/><ellipse cx="211.1" cy="115.3" rx="2.3" ry="2.3" fill="#eef0d8" opacity="0.85"/><ellipse cx="234.9" cy="115.8" rx="4.2" ry="4.2" fill="#b4cc58" opacity="0.85"/><ellipse cx="176.7" cy="119.9" rx="3.6" ry="3.6" fill="#b4cc58" opacity="0.85"/><ellipse cx="209.7" cy="107.3" rx="2.4" ry="2.4" fill="#d8e4a0" opacity="0.85"/><ellipse cx="181.9" cy="120.6" rx="2.2" ry="2.2" fill="#b4cc58" opacity="0.85"/><ellipse cx="223.9" cy="123.0" rx="2.0" ry="2.0" fill="#d8e4a0" opacity="0.85"/><ellipse cx="227.0" cy="120.3" rx="3.6" ry="3.6" fill="#d8e4a0" opacity="0.85"/><ellipse cx="197.7" cy="112.6" rx="4.1" ry="4.1" fill="#a9c24e" opacity="0.85"/><ellipse cx="204.6" cy="113.2" rx="3.9" ry="3.9" fill="#a9c24e" opacity="0.85"/><ellipse cx="238.3" cy="104.2" rx="4.1" ry="4.1" fill="#b4cc58" opacity="0.85"/><ellipse cx="233.0" cy="119.9" rx="2.8" ry="2.8" fill="#d8e4a0" opacity="0.85"/><ellipse cx="222.2" cy="124.9" rx="2.3" ry="2.3" fill="#8fae3a" opacity="0.85"/><ellipse cx="237.4" cy="97.3" rx="3.1" ry="3.1" fill="#b4cc58" opacity="0.85"/><ellipse cx="211.1" cy="120.0" rx="3.3" ry="3.3" fill="#7a9a30" opacity="0.85"/><ellipse cx="195.9" cy="113.0" rx="3.9" ry="3.9" fill="#d8e4a0" opacity="0.85"/><ellipse cx="225.7" cy="114.2" rx="3.3" ry="3.3" fill="#8fae3a" opacity="0.85"/><ellipse cx="234.0" cy="117.6" rx="3.2" ry="3.2" fill="#c6d86c" opacity="0.85"/><ellipse cx="238.7" cy="115.6" rx="3.3" ry="3.3" fill="#a9c24e" opacity="0.85"/><ellipse cx="233.5" cy="123.5" rx="3.6" ry="3.6" fill="#8fae3a" opacity="0.85"/><ellipse cx="204.1" cy="123.0" rx="2.2" ry="2.2" fill="#c6d86c" opacity="0.85"/><ellipse cx="201.0" cy="112.9" rx="2.5" ry="2.5" fill="#8fae3a" opacity="0.85"/><ellipse cx="192.8" cy="118.9" rx="3.4" ry="3.4" fill="#8fae3a" opacity="0.85"/><ellipse cx="180.3" cy="122.8" rx="4.1" ry="4.1" fill="#a9c24e" opacity="0.85"/><ellipse cx="225.1" cy="124.9" rx="3.7" ry="3.7" fill="#8fae3a" opacity="0.85"/><ellipse cx="242.0" cy="119.5" rx="4.1" ry="4.1" fill="#d8e4a0" opacity="0.85"/><ellipse cx="236.8" cy="103.7" rx="1.9" ry="1.9" fill="#c6d86c" opacity="0.85"/><ellipse cx="238.8" cy="105.1" rx="2.4" ry="2.4" fill="#d8e4a0" opacity="0.85"/><ellipse cx="241.5" cy="108.6" rx="1.8" ry="1.8" fill="#a9c24e" opacity="0.85"/><ellipse cx="214.2" cy="118.9" rx="2.9" ry="2.9" fill="#d8e4a0" opacity="0.85"/><ellipse cx="236.8" cy="110.3" rx="3.1" ry="3.1" fill="#8fae3a" opacity="0.85"/><ellipse cx="243.1" cy="113.3" rx="2.4" ry="2.4" fill="#a9c24e" opacity="0.85"/><ellipse cx="235.6" cy="112.7" rx="3.1" ry="3.1" fill="#7a9a30" opacity="0.85"/></g></svg></div><div class="badge">В продаже</div>
<div class="r1 lt g">BE ECO DESIGN</div><div class="r1 rt">Новорижское шоссе <b>97 км.</b></div>
<div class="r2 lt d">Участок № 94</div><div class="r2 rt">Волоколамское шоссе <b>97 км.</b></div></div>
<div class="price" style="top:538px">Цена: 3 364 800 руб.</div>
<div class="card" style="top:576px"><div class="img"><svg width="246" height="125" viewBox="0 0 246 125"><defs><linearGradient id="sb" x1="0" y1="0" x2="0" y2="1"><stop offset="0" stop-color="#6b9ad8"/><stop offset="0.6" stop-color="#8fb4e4"/><stop offset="1" stop-color="#c4d6ec"/></linearGradient><linearGradient id="gb" x1="0" y1="0" x2="0" y2="1"><stop offset="0" stop-color="#86ad40"/><stop offset="1" stop-color="#7aa82a"/></linearGradient><filter id="cb" x="-20%" y="-20%" width="140%" height="140%"><feGaussianBlur stdDeviation="1.1"/></filter><filter id="tb"><feGaussianBlur stdDeviation="0.5"/></filter></defs><rect width="246" height="125" fill="url(#sb)"/><g filter="url(#cb)"><ellipse cx="5" cy="4" rx="8" ry="4" fill="#f6f7f9" opacity="0.92"/><ellipse cx="44" cy="6" rx="6" ry="4" fill="#f6f7f9" opacity="0.92"/><ellipse cx="85" cy="10" rx="22" ry="9" fill="#f6f7f9" opacity="0.92"/><ellipse cx="110" cy="22" rx="16" ry="9" fill="#f6f7f9" opacity="0.92"/><ellipse cx="130" cy="8" rx="20" ry="8" fill="#f6f7f9" opacity="0.92"/><ellipse cx="150" cy="30" rx="26" ry="10" fill="#f6f7f9" opacity="0.92"/><ellipse cx="185" cy="40" rx="30" ry="10" fill="#f6f7f9" opacity="0.92"/><ellipse cx="225" cy="38" rx="22" ry="9" fill="#f6f7f9" opacity="0.92"/><ellipse cx="200" cy="22" rx="22" ry="8" fill="#f6f7f9" opacity="0.92"/><ellipse cx="170" cy="18" rx="14" ry="8" fill="#f6f7f9" opacity="0.92"/><ellipse cx="22" cy="52" rx="22" ry="9" fill="#f6f7f9" opacity="0.92"/><ellipse cx="8" cy="55" rx="10" ry="7" fill="#f6f7f9" opacity="0.92"/><ellipse cx="75" cy="54" rx="12" ry="7" fill="#f6f7f9" opacity="0.92"/><ellipse cx="92" cy="53" rx="10" ry="6" fill="#f6f7f9" opacity="0.92"/><ellipse cx="118" cy="62" rx="16" ry="6" fill="#f6f7f9" opacity="0.92"/><ellipse cx="136" cy="63" rx="10" ry="5" fill="#f6f7f9" opacity="0.92"/><ellipse cx="180" cy="68" rx="18" ry="7" fill="#f6f7f9" opacity="0.92"/><ellipse cx="212" cy="68" rx="14" ry="5" fill="#f6f7f9" opacity="0.92"/><ellipse cx="45" cy="77" rx="24" ry="5" fill="#f6f7f9" opacity="0.92"/><ellipse cx="100" cy="78" rx="32" ry="5" fill="#f6f7f9" opacity="0.92"/><ellipse cx="20" cy="80" rx="26" ry="5" fill="#f6f7f9" opacity="0.92"/><ellipse cx="150" cy="82" rx="14" ry="4" fill="#f6f7f9" opacity="0.92"/><ellipse cx="240" cy="56" rx="8" ry="5" fill="#f6f7f9" opacity="0.92"/><ellipse cx="120" cy="42" rx="8" ry="5" fill="#f6f7f9" opacity="0.92"/><ellipse cx="84.3" cy="79.8" rx="16.0" ry="2.5" fill="#d4dae2" opacity="0.5"/><ellipse cx="247.1" cy="59.7" rx="4.0" ry="2.5" fill="#d4dae2" opacity="0.5"/><ellipse cx="163.0" cy="71.3" rx="9.0" ry="3.5" fill="#d4dae2" opacity="0.5"/><ellipse cx="231.6" cy="46.1" rx="11.0" ry="4.5" fill="#d4dae2" opacity="0.5"/><ellipse cx="105.9" cy="29.8" rx="8.0" ry="4.5" fill="#d4dae2" opacity="0.5"/><ellipse cx="76.1" cy="58.0" rx="6.0" ry="3.5" fill="#d4dae2" opacity="0.5"/><ellipse cx="8.7" cy="5.6" rx="4.0" ry="2.0" fill="#d4dae2" opacity="0.5"/><ellipse cx="171.6" cy="37.7" rx="13.0" ry="5.0" fill="#d4dae2" opacity="0.5"/><ellipse cx="163.6" cy="30.7" rx="13.0" ry="5.0" fill="#d4dae2" opacity="0.5"/><ellipse cx="107.5" cy="78.6" rx="16.0" ry="2.5" fill="#d4dae2" opacity="0.5"/><ellipse cx="12.6" cy="4.0" rx="4.0" ry="2.0" fill="#d4dae2" opacity="0.5"/><ellipse cx="212.6" cy="41.7" rx="15.0" ry="5.0" fill="#d4dae2" opacity="0.5"/><ellipse cx="139.0" cy="39.6" rx="13.0" ry="5.0" fill="#d4dae2" opacity="0.5"/><ellipse cx="222.5" cy="71.1" rx="7.0" ry="2.5" fill="#d4dae2" opacity="0.5"/><ellipse cx="172.9" cy="36.9" rx="13.0" ry="5.0" fill="#d4dae2" opacity="0.5"/><ellipse cx="70.2" cy="56.5" rx="6.0" ry="3.5" fill="#d4dae2" opacity="0.5"/><ellipse cx="172.7" cy="32.6" rx="13.0" ry="5.0" fill="#d4dae2" opacity="0.5"/><ellipse cx="13.3" cy="57.4" rx="11.0" ry="4.5" fill="#d4dae2" opacity="0.5"/><ellipse cx="6.5" cy="6.8" rx="4.0" ry="2.0" fill="#d4dae2" opacity="0.5"/><ellipse cx="76.6" cy="17.4" rx="11.0" ry="4.5" fill="#d4dae2" opacity="0.5"/><ellipse cx="139.9" cy="63.9" rx="5.0" ry="2.5" fill="#d4dae2" opacity="0.5"/><ellipse cx="140.1" cy="63.3" rx="5.0" ry="2.5" fill="#d4dae2" opacity="0.5"/><ellipse cx="12.2" cy="5.4" rx="4.0" ry="2.0" fill="#d4dae2" opacity="0.5"/><ellipse cx="63.4" cy="59.5" rx="6.0" ry="3.5" fill="#d4dae2" opacity="0.5"/><ellipse cx="5.5" cy="60.9" rx="5.0" ry="3.5" fill="#d4dae2" opacity="0.5"/></g><g filter="url(#tb)"><path d="M0 97 L0 84 L6 81 L14 84 L19 88 L19 97 Z" fill="#7a6050"/><path d="M20 97 L22 91 L40 91 L42 93 L60 90 L75 93 L95 94 L100 96 Z" fill="#9a9490"/><path d="M100 97 L104 93 L115 92 L120 89 L127 90 L130 86 L140 85 L148 89 L150 97 Z" fill="#b8aca0"/><rect x="118" y="90" width="7" height="5" fill="#a45a48"/><path d="M153 97 L155 86 L160 82 L166 80 L175 79 L185 77 L200 77 L212 76 L225 77 L236 76 L246 78 L246 97 Z" fill="#2e5a2c"/><ellipse cx="194.6" cy="89.3" rx="2.7" ry="3.9" fill="#2a5228" opacity="0.8"/><ellipse cx="223.0" cy="92.9" rx="3.4" ry="2.7" fill="#4a7a3e" opacity="0.8"/><ellipse cx="235.9" cy="82.0" rx="2.4" ry="3.2" fill="#4a7a3e" opacity="0.8"/><ellipse cx="232.8" cy="78.6" rx="3.4" ry="2.2" fill="#4a7a3e" opacity="0.8"/><ellipse cx="200.2" cy="83.8" rx="1.8" ry="2.6" fill="#2a5228" opacity="0.8"/><ellipse cx="181.4" cy="83.1" rx="1.9" ry="2.2" fill="#3a6a34" opacity="0.8"/><ellipse cx="219.8" cy="82.9" rx="2.5" ry="3.4" fill="#2a5228" opacity="0.8"/><ellipse cx="244.7" cy="86.5" rx="2.3" ry="2.5" fill="#4a7a3e" opacity="0.8"/><ellipse cx="229.7" cy="85.3" rx="2.3" ry="2.1" fill="#2a5228" opacity="0.8"/><ellipse cx="227.4" cy="83.3" rx="1.9" ry="4.0" fill="#3a6a34" opacity="0.8"/><ellipse cx="211.3" cy="90.6" rx="1.7" ry="2.9" fill="#3a6a34" opacity="0.8"/><ellipse cx="157.5" cy="84.7" rx="1.8" ry="3.8" fill="#3a6a34" opacity="0.8"/><ellipse cx="243.7" cy="85.3" rx="2.5" ry="3.5" fill="#24482a" opacity="0.8"/><ellipse cx="177.8" cy="85.5" rx="3.3" ry="2.2" fill="#3a6a34" opacity="0.8"/><ellipse cx="210.9" cy="86.0" rx="2.2" ry="2.2" fill="#4a7a3e" opacity="0.8"/><ellipse cx="200.4" cy="86.8" rx="2.5" ry="2.1" fill="#4a7a3e" opacity="0.8"/><ellipse cx="217.3" cy="88.6" rx="3.0" ry="2.7" fill="#4a7a3e" opacity="0.8"/><ellipse cx="230.5" cy="82.2" rx="3.5" ry="3.4" fill="#4a7a3e" opacity="0.8"/><ellipse cx="213.1" cy="87.3" rx="1.5" ry="3.1" fill="#4a7a3e" opacity="0.8"/><ellipse cx="182.6" cy="82.4" rx="2.1" ry="3.0" fill="#4a7a3e" opacity="0.8"/><ellipse cx="184.7" cy="88.3" rx="3.0" ry="3.7" fill="#4a7a3e" opacity="0.8"/><ellipse cx="238.7" cy="80.8" rx="3.2" ry="2.9" fill="#4a7a3e" opacity="0.8"/><ellipse cx="241.9" cy="86.3" rx="2.6" ry="2.3" fill="#4a7a3e" opacity="0.8"/><ellipse cx="240.1" cy="85.6" rx="2.9" ry="3.4" fill="#24482a" opacity="0.8"/><ellipse cx="168.2" cy="90.5" rx="2.7" ry="3.3" fill="#24482a" opacity="0.8"/><ellipse cx="180.5" cy="86.9" rx="3.2" ry="2.5" fill="#2a5228" opacity="0.8"/><ellipse cx="170.4" cy="87.4" rx="2.7" ry="2.4" fill="#3a6a34" opacity="0.8"/><ellipse cx="211.3" cy="78.7" rx="2.4" ry="2.5" fill="#2a5228" opacity="0.8"/><ellipse cx="235.8" cy="79.8" rx="3.4" ry="3.0" fill="#2a5228" opacity="0.8"/><ellipse cx="191.1" cy="83.6" rx="2.8" ry="2.1" fill="#3a6a34" opacity="0.8"/><ellipse cx="174.4" cy="92.5" rx="1.5" ry="2.8" fill="#4a7a3e" opacity="0.8"/><ellipse cx="232.5" cy="91.9" rx="2.9" ry="3.1" fill="#2a5228" opacity="0.8"/><ellipse cx="203.7" cy="82.8" rx="2.1" ry="3.0" fill="#4a7a3e" opacity="0.8"/><ellipse cx="242.1" cy="91.1" rx="2.3" ry="3.6" fill="#4a7a3e" opacity="0.8"/><ellipse cx="195.9" cy="80.5" rx="2.3" ry="3.0" fill="#3a6a34" opacity="0.8"/><ellipse cx="243.0" cy="87.7" rx="2.2" ry="3.8" fill="#2a5228" opacity="0.8"/><ellipse cx="187.9" cy="83.2" rx="3.3" ry="3.1" fill="#4a7a3e" opacity="0.8"/><ellipse cx="211.2" cy="92.3" rx="2.3" ry="2.9" fill="#3a6a34" opacity="0.8"/><ellipse cx="198.4" cy="85.7" rx="2.9" ry="2.8" fill="#3a6a34" opacity="0.8"/><ellipse cx="208.0" cy="82.2" rx="3.5" ry="3.0" fill="#24482a" opacity="0.8"/><ellipse cx="153.8" cy="93.1" rx="2.1" ry="3.9" fill="#3a6a34" opacity="0.8"/><ellipse cx="196.8" cy="80.0" rx="2.7" ry="2.9" fill="#4a7a3e" opacity="0.8"/><ellipse cx="155.8" cy="80.2" rx="2.3" ry="3.0" fill="#4a7a3e" opacity="0.8"/><ellipse cx="174.9" cy="85.6" rx="1.6" ry="3.0" fill="#3a6a34" opacity="0.8"/><ellipse cx="219.8" cy="82.6" rx="2.5" ry="4.0" fill="#2a5228" opacity="0.8"/><ellipse cx="153.5" cy="80.0" rx="2.1" ry="3.4" fill="#4a7a3e" opacity="0.8"/><ellipse cx="220.7" cy="78.4" rx="2.2" ry="3.4" fill="#3a6a34" opacity="0.8"/><ellipse cx="155.4" cy="82.0" rx="2.4" ry="3.8" fill="#3a6a34" opacity="0.8"/><ellipse cx="153.4" cy="90.5" rx="2.4" ry="3.2" fill="#24482a" opacity="0.8"/><ellipse cx="232.7" cy="91.5" rx="2.5" ry="3.4" fill="#3a6a34" opacity="0.8"/><ellipse cx="236.5" cy="85.4" rx="3.0" ry="2.6" fill="#2a5228" opacity="0.8"/><ellipse cx="217.3" cy="84.9" rx="2.1" ry="3.6" fill="#4a7a3e" opacity="0.8"/><ellipse cx="165.4" cy="85.7" rx="2.6" ry="3.0" fill="#4a7a3e" opacity="0.8"/><ellipse cx="202.6" cy="84.8" rx="2.6" ry="2.1" fill="#3a6a34" opacity="0.8"/><ellipse cx="177.1" cy="79.4" rx="1.6" ry="3.9" fill="#4a7a3e" opacity="0.8"/><ellipse cx="219.9" cy="93.7" rx="3.5" ry="3.4" fill="#2a5228" opacity="0.8"/><ellipse cx="163.6" cy="80.0" rx="2.7" ry="3.6" fill="#2a5228" opacity="0.8"/><ellipse cx="219.0" cy="80.2" rx="2.1" ry="3.8" fill="#3a6a34" opacity="0.8"/><ellipse cx="169.2" cy="81.0" rx="3.1" ry="2.1" fill="#3a6a34" opacity="0.8"/><ellipse cx="156.1" cy="79.7" rx="2.3" ry="2.1" fill="#2a5228" opacity="0.8"/><ellipse cx="205.7" cy="79.9" rx="2.3" ry="3.2" fill="#2a5228" opacity="0.8"/><ellipse cx="192.6" cy="83.0" rx="2.7" ry="3.0" fill="#4a7a3e" opacity="0.8"/><ellipse cx="238.0" cy="80.2" rx="2.1" ry="3.1" fill="#4a7a3e" opacity="0.8"/><ellipse cx="237.6" cy="86.9" rx="2.7" ry="2.5" fill="#3a6a34" opacity="0.8"/><ellipse cx="175.9" cy="90.0" rx="2.5" ry="2.3" fill="#3a6a34" opacity="0.8"/><ellipse cx="233.2" cy="85.3" rx="2.3" ry="2.3" fill="#2a5228" opacity="0.8"/><ellipse cx="213.6" cy="79.4" rx="2.8" ry="2.2" fill="#2a5228" opacity="0.8"/><ellipse cx="199.6" cy="85.3" rx="2.3" ry="2.9" fill="#4a7a3e" opacity="0.8"/><ellipse cx="162.1" cy="86.5" rx="2.6" ry="2.8" fill="#3a6a34" opacity="0.8"/><ellipse cx="240.8" cy="84.9" rx="3.1" ry="3.5" fill="#2a5228" opacity="0.8"/><path d="M160 97 L160 94 L200 93 L246 94 L246 97 Z" fill="#9a7a5a"/></g><rect x="0" y="96" width="246" height="29" fill="url(#gb)"/><ellipse cx="239.3" cy="115.6" rx="2.6" ry="1.4" fill="#6a9628" opacity="0.55"/><ellipse cx="87.2" cy="103.6" rx="5.7" ry="1.5" fill="#b8cc60" opacity="0.55"/><ellipse cx="195.8" cy="107.6" rx="4.6" ry="1.6" fill="#b8cc60" opacity="0.55"/><ellipse cx="106.6" cy="120.8" rx="2.1" ry="1.8" fill="#90b040" opacity="0.55"/><ellipse cx="52.9" cy="102.1" rx="2.4" ry="0.8" fill="#a4c050" opacity="0.55"/><ellipse cx="49.8" cy="98.1" rx="4.6" ry="1.1" fill="#5f8a24" opacity="0.55"/><ellipse cx="105.0" cy="105.4" rx="5.7" ry="1.1" fill="#90b040" opacity="0.55"/><ellipse cx="113.6" cy="102.4" rx="2.3" ry="1.7" fill="#6a9628" opacity="0.55"/><ellipse cx="213.8" cy="110.2" rx="3.0" ry="1.1" fill="#90b040" opacity="0.55"/><ellipse cx="39.7" cy="105.0" rx="2.1" ry="1.7" fill="#6a9628" opacity="0.55"/><ellipse cx="84.7" cy="118.1" rx="5.8" ry="1.5" fill="#b8cc60" opacity="0.55"/><ellipse cx="165.8" cy="110.2" rx="2.5" ry="1.5" fill="#6a9628" opacity="0.55"/><ellipse cx="71.6" cy="115.9" rx="2.1" ry="1.5" fill="#6a9628" opacity="0.55"/><ellipse cx="141.4" cy="115.4" rx="3.6" ry="1.8" fill="#90b040" opacity="0.55"/><ellipse cx="89.6" cy="105.7" rx="3.4" ry="0.9" fill="#5f8a24" opacity="0.55"/><ellipse cx="244.4" cy="110.1" rx="2.7" ry="1.0" fill="#6a9628" opacity="0.55"/><ellipse cx="10.8" cy="114.0" rx="2.0" ry="0.9" fill="#b8cc60" opacity="0.55"/><ellipse cx="191.7" cy="108.5" rx="2.1" ry="1.6" fill="#a4c050" opacity="0.55"/><ellipse cx="206.0" cy="112.8" rx="4.9" ry="1.0" fill="#a4c050" opacity="0.55"/><ellipse cx="197.6" cy="99.6" rx="2.2" ry="1.0" fill="#5f8a24" opacity="0.55"/><ellipse cx="12.4" cy="108.1" rx="2.2" ry="1.6" fill="#a4c050" opacity="0.55"/><ellipse cx="109.7" cy="114.9" rx="5.8" ry="1.0" fill="#a4c050" opacity="0.55"/><ellipse cx="171.1" cy="114.9" rx="4.1" ry="0.9" fill="#6a9628" opacity="0.55"/><ellipse cx="77.2" cy="100.0" rx="5.9" ry="1.0" fill="#90b040" opacity="0.55"/><ellipse cx="18.5" cy="117.4" rx="2.1" ry="1.3" fill="#90b040" opacity="0.55"/><ellipse cx="119.7" cy="113.0" rx="4.1" ry="0.9" fill="#5f8a24" opacity="0.55"/><ellipse cx="3.0" cy="118.2" rx="5.6" ry="1.8" fill="#5f8a24" opacity="0.55"/><ellipse cx="136.4" cy="100.9" rx="2.4" ry="1.6" fill="#5f8a24" opacity="0.55"/><ellipse cx="201.6" cy="105.8" rx="4.1" ry="1.3" fill="#6a9628" opacity="0.55"/><ellipse cx="171.5" cy="119.4" rx="4.7" ry="1.1" fill="#90b040" opacity="0.55"/><ellipse cx="121.2" cy="104.0" rx="5.2" ry="1.7" fill="#6a9628" opacity="0.55"/><ellipse cx="217.8" cy="99.0" rx="3.5" ry="1.6" fill="#b8cc60" opacity="0.55"/><ellipse cx="0.0" cy="105.0" rx="4.3" ry="1.2" fill="#6a9628" opacity="0.55"/><ellipse cx="200.9" cy="115.4" rx="4.9" ry="1.5" fill="#a4c050" opacity="0.55"/><ellipse cx="65.9" cy="119.7" rx="4.2" ry="1.1" fill="#5f8a24" opacity="0.55"/><ellipse cx="75.4" cy="100.8" rx="4.7" ry="1.1" fill="#5f8a24" opacity="0.55"/><ellipse cx="15.6" cy="118.4" rx="2.1" ry="0.9" fill="#90b040" opacity="0.55"/><ellipse cx="238.5" cy="120.1" rx="5.4" ry="1.7" fill="#5f8a24" opacity="0.55"/><ellipse cx="150.6" cy="103.5" rx="2.5" ry="1.0" fill="#5f8a24" opacity="0.55"/><ellipse cx="88.1" cy="101.6" rx="5.3" ry="1.5" fill="#90b040" opacity="0.55"/><ellipse cx="23.4" cy="111.8" rx="4.5" ry="0.9" fill="#6a9628" opacity="0.55"/><ellipse cx="188.1" cy="109.2" rx="2.5" ry="1.1" fill="#5f8a24" opacity="0.55"/><ellipse cx="225.1" cy="109.9" rx="2.7" ry="0.8" fill="#5f8a24" opacity="0.55"/><ellipse cx="164.3" cy="101.5" rx="5.9" ry="1.4" fill="#5f8a24" opacity="0.55"/><ellipse cx="25.5" cy="119.8" rx="4.7" ry="1.0" fill="#5f8a24" opacity="0.55"/><ellipse cx="0.3" cy="122.5" rx="3.9" ry="1.7" fill="#6a9628" opacity="0.55"/><ellipse cx="96.6" cy="103.0" rx="5.3" ry="1.1" fill="#b8cc60" opacity="0.55"/><ellipse cx="126.9" cy="118.4" rx="3.5" ry="1.6" fill="#6a9628" opacity="0.55"/><ellipse cx="200.3" cy="115.6" rx="4.5" ry="1.2" fill="#a4c050" opacity="0.55"/><ellipse cx="35.2" cy="120.3" rx="3.5" ry="0.9" fill="#5f8a24" opacity="0.55"/><ellipse cx="97.7" cy="118.1" rx="5.6" ry="1.0" fill="#b8cc60" opacity="0.55"/><ellipse cx="196.1" cy="106.1" rx="5.5" ry="1.4" fill="#5f8a24" opacity="0.55"/><ellipse cx="196.9" cy="107.5" rx="2.4" ry="1.4" fill="#a4c050" opacity="0.55"/><ellipse cx="152.8" cy="119.8" rx="3.3" ry="0.8" fill="#a4c050" opacity="0.55"/><ellipse cx="76.8" cy="107.7" rx="4.2" ry="1.5" fill="#5f8a24" opacity="0.55"/><ellipse cx="110.6" cy="119.1" rx="5.7" ry="1.5" fill="#90b040" opacity="0.55"/><ellipse cx="164.9" cy="112.0" rx="3.5" ry="1.4" fill="#5f8a24" opacity="0.55"/><ellipse cx="167.1" cy="111.6" rx="3.1" ry="0.8" fill="#b8cc60" opacity="0.55"/><ellipse cx="190.3" cy="114.1" rx="3.2" ry="1.7" fill="#5f8a24" opacity="0.55"/><ellipse cx="67.6" cy="117.0" rx="2.2" ry="0.9" fill="#a4c050" opacity="0.55"/><ellipse cx="236.6" cy="105.4" rx="4.8" ry="1.6" fill="#b8cc60" opacity="0.55"/><ellipse cx="181.7" cy="114.1" rx="3.9" ry="0.9" fill="#6a9628" opacity="0.55"/><ellipse cx="29.8" cy="106.6" rx="3.7" ry="1.8" fill="#90b040" opacity="0.55"/><ellipse cx="165.1" cy="107.6" rx="5.6" ry="1.7" fill="#90b040" opacity="0.55"/><ellipse cx="150.9" cy="107.8" rx="5.4" ry="1.7" fill="#a4c050" opacity="0.55"/><ellipse cx="169.3" cy="124.5" rx="5.5" ry="1.0" fill="#6a9628" opacity="0.55"/><ellipse cx="75.2" cy="104.5" rx="2.3" ry="1.8" fill="#90b040" opacity="0.55"/><ellipse cx="18.9" cy="108.6" rx="2.9" ry="0.9" fill="#6a9628" opacity="0.55"/><ellipse cx="139.2" cy="120.2" rx="4.9" ry="1.2" fill="#90b040" opacity="0.55"/><ellipse cx="104.6" cy="111.8" rx="3.2" ry="1.1" fill="#6a9628" opacity="0.55"/><ellipse cx="148.9" cy="124.1" rx="3.7" ry="0.9" fill="#6a9628" opacity="0.55"/><ellipse cx="72.7" cy="112.5" rx="2.7" ry="1.0" fill="#90b040" opacity="0.55"/><ellipse cx="146.3" cy="115.1" rx="4.9" ry="0.9" fill="#b8cc60" opacity="0.55"/><ellipse cx="119.2" cy="120.4" rx="3.3" ry="1.7" fill="#a4c050" opacity="0.55"/><ellipse cx="158.7" cy="122.9" rx="5.6" ry="1.4" fill="#6a9628" opacity="0.55"/><ellipse cx="196.3" cy="120.5" rx="2.8" ry="1.0" fill="#a4c050" opacity="0.55"/><ellipse cx="22.8" cy="101.3" rx="5.0" ry="1.4" fill="#90b040" opacity="0.55"/><ellipse cx="108.5" cy="106.0" rx="4.9" ry="1.7" fill="#6a9628" opacity="0.55"/><ellipse cx="235.4" cy="114.5" rx="3.5" ry="1.6" fill="#a4c050" opacity="0.55"/><ellipse cx="48.1" cy="106.1" rx="3.8" ry="1.5" fill="#6a9628" opacity="0.55"/><ellipse cx="182.8" cy="99.3" rx="5.8" ry="1.3" fill="#5f8a24" opacity="0.55"/><ellipse cx="1.4" cy="124.4" rx="2.5" ry="0.8" fill="#b8cc60" opacity="0.55"/><ellipse cx="93.7" cy="106.6" rx="4.0" ry="1.7" fill="#a4c050" opacity="0.55"/><ellipse cx="175.2" cy="97.4" rx="6.0" ry="1.6" fill="#5f8a24" opacity="0.55"/><ellipse cx="48.1" cy="106.6" rx="3.2" ry="1.3" fill="#6a9628" opacity="0.55"/><ellipse cx="171.4" cy="119.1" rx="2.4" ry="1.2" fill="#90b040" opacity="0.55"/><ellipse cx="232.0" cy="98.8" rx="2.2" ry="1.2" fill="#5f8a24" opacity="0.55"/><ellipse cx="58.5" cy="115.7" rx="2.6" ry="1.8" fill="#a4c050" opacity="0.55"/><ellipse cx="136.1" cy="109.1" rx="4.2" ry="1.2" fill="#6a9628" opacity="0.55"/><ellipse cx="229.7" cy="99.6" rx="2.5" ry="0.9" fill="#b8cc60" opacity="0.55"/><ellipse cx="201.2" cy="100.9" rx="2.1" ry="1.4" fill="#a4c050" opacity="0.55"/><ellipse cx="235.4" cy="121.3" rx="2.2" ry="1.0" fill="#a4c050" opacity="0.55"/><ellipse cx="239.7" cy="109.4" rx="4.1" ry="1.8" fill="#5f8a24" opacity="0.55"/><ellipse cx="147.2" cy="120.5" rx="4.0" ry="0.9" fill="#5f8a24" opacity="0.55"/><ellipse cx="96.6" cy="118.8" rx="5.4" ry="1.7" fill="#5f8a24" opacity="0.55"/><ellipse cx="162.6" cy="114.3" rx="2.1" ry="0.8" fill="#90b040" opacity="0.55"/><ellipse cx="189.3" cy="108.6" rx="5.7" ry="1.2" fill="#5f8a24" opacity="0.55"/><ellipse cx="245.8" cy="118.2" rx="2.6" ry="1.6" fill="#b8cc60" opacity="0.55"/><ellipse cx="103.8" cy="124.2" rx="2.9" ry="1.2" fill="#b8cc60" opacity="0.55"/><ellipse cx="66.6" cy="110.2" rx="2.0" ry="1.4" fill="#b8cc60" opacity="0.55"/><ellipse cx="189.2" cy="118.2" rx="2.3" ry="1.2" fill="#a4c050" opacity="0.55"/><ellipse cx="220.8" cy="121.8" rx="4.6" ry="1.5" fill="#6a9628" opacity="0.55"/><ellipse cx="121.5" cy="105.9" rx="2.5" ry="1.0" fill="#5f8a24" opacity="0.55"/><ellipse cx="226.4" cy="123.3" rx="2.1" ry="1.6" fill="#a4c050" opacity="0.55"/><ellipse cx="21.1" cy="100.7" rx="3.3" ry="1.0" fill="#b8cc60" opacity="0.55"/><ellipse cx="72.3" cy="122.1" rx="2.4" ry="0.9" fill="#90b040" opacity="0.55"/><ellipse cx="158.3" cy="107.5" rx="5.6" ry="1.3" fill="#b8cc60" opacity="0.55"/><ellipse cx="109.1" cy="121.4" rx="2.6" ry="0.8" fill="#90b040" opacity="0.55"/><ellipse cx="3.1" cy="107.8" rx="3.9" ry="1.5" fill="#6a9628" opacity="0.55"/><ellipse cx="2.0" cy="118.6" rx="2.9" ry="1.5" fill="#5f8a24" opacity="0.55"/><ellipse cx="58.1" cy="105.6" rx="3.0" ry="1.5" fill="#90b040" opacity="0.55"/><ellipse cx="217.5" cy="118.7" rx="3.2" ry="1.3" fill="#90b040" opacity="0.55"/><ellipse cx="161.1" cy="122.9" rx="4.3" ry="1.1" fill="#b8cc60" opacity="0.55"/><ellipse cx="143.4" cy="113.6" rx="6.0" ry="1.1" fill="#5f8a24" opacity="0.55"/><ellipse cx="41.0" cy="123.1" rx="4.6" ry="0.9" fill="#a4c050" opacity="0.55"/><ellipse cx="52.2" cy="114.3" rx="5.7" ry="1.1" fill="#a4c050" opacity="0.55"/><ellipse cx="135.7" cy="120.2" rx="3.8" ry="0.9" fill="#6a9628" opacity="0.55"/><ellipse cx="0.9" cy="112.8" rx="3.8" ry="0.9" fill="#90b040" opacity="0.55"/><ellipse cx="21.6" cy="106.6" rx="3.5" ry="1.1" fill="#6a9628" opacity="0.55"/><ellipse cx="200.5" cy="110.6" rx="5.0" ry="1.1" fill="#6a9628" opacity="0.55"/></svg></div><div class="badge">В продаже</div>
<div class="r1 lt g" style="letter-spacing:-0.05px">БЕЖИН ЛУГ</div><div class="r1 rt">Новорижское шоссе <b>52 км.</b></div>
<div class="r2 lt d">Участок № 18</div><div class="r2 rt">Волоколамское шоссе <b>50 км.</b></div></div>
<div class="price" style="top:784px">Цена: 3 150 000 руб.</div>
<div class="card" style="top:822px"><div class="img"><svg width="246" height="125" viewBox="0 0 246 125"><defs><linearGradient id="sc" x1="0" y1="0" x2="0.3" y2="1"><stop offset="0" stop-color="#d6d6db"/><stop offset="1" stop-color="#c4c4ca"/></linearGradient><linearGradient id="wc" x1="0" y1="0" x2="0" y2="1"><stop offset="0" stop-color="#2a3620"/><stop offset="0.3" stop-color="#3c4438"/><stop offset="0.65" stop-color="#545c7c"/><stop offset="1" stop-color="#5c6690"/></linearGradient><linearGradient id="wlc" x1="0" y1="0" x2="1" y2="0"><stop offset="0" stop-color="#7078a8" stop-opacity="0.35"/><stop offset="0.4" stop-color="#6a72a0" stop-opacity="0.25"/><stop offset="0.55" stop-color="#2a2e20" stop-opacity="0.35"/><stop offset="1" stop-color="#2c3418" stop-opacity="0.6"/></linearGradient><linearGradient id="tc" x1="0" y1="0" x2="0" y2="1"><stop offset="0" stop-color="#28522a"/><stop offset="0.5" stop-color="#36682e"/><stop offset="1" stop-color="#3e7032"/></linearGradient><filter id="fc" x="-10%" y="-10%" width="120%" height="120%"><feGaussianBlur stdDeviation="0.5"/></filter></defs><rect width="246" height="125" fill="url(#sc)"/><path d="M0 76 L0 24 L6 22 L10 18 L14 22 L20 21 L26 23 L33 18 L38 22 L44 24 L50 22 L56 24 L62 20 L66 17 L72 19 L78 18 L85 16 L90 21 L96 22 L100 17 L104 22 L110 20 L116 14 L120 13 L124 10 L128 14 L134 18 L140 14 L144 9 L148 13 L154 16 L160 13 L166 16 L172 15 L180 18 L190 16 L200 18 L210 17 L220 18 L232 17 L246 18 L246 76 Z" fill="url(#tc)"/><g filter="url(#fc)"><path d="M10 17 L14.7 51.5 L5.3 51.5 Z" fill="#28552a"/><path d="M33 17 L39.7 50.7 L26.3 50.7 Z" fill="#2a5a2a"/><path d="M64 16 L69.8 54.9 L58.2 54.9 Z" fill="#336b32"/><path d="M85 15 L89.8 45.8 L80.2 45.8 Z" fill="#336b32"/><path d="M100 16 L105.6 50.6 L94.4 50.6 Z" fill="#336b32"/><path d="M116 13 L121.9 42.8 L110.1 42.8 Z" fill="#2f6330"/><path d="M124 9 L130.6 43.3 L117.4 43.3 Z" fill="#2a5a2a"/><path d="M144 8 L150.0 36.8 L138.0 36.8 Z" fill="#2a5a2a"/><path d="M160 12 L164.9 40.4 L155.1 40.4 Z" fill="#28552a"/><path d="M172 14 L177.4 50.6 L166.6 50.6 Z" fill="#336b32"/><path d="M190 15 L196.1 54.1 L183.9 54.1 Z" fill="#336b32"/><path d="M100 17 L104 45 L96 45 Z" fill="#8a6a5a" opacity="0.7"/><ellipse cx="180.5" cy="53.1" rx="4.9" ry="6.1" fill="#4a863a" opacity="0.58"/><ellipse cx="31.3" cy="34.7" rx="4.9" ry="5.8" fill="#1f4424" opacity="0.85"/><ellipse cx="103.1" cy="67.5" rx="3.7" ry="4.1" fill="#2a5226" opacity="0.87"/><ellipse cx="168.9" cy="72.0" rx="4.6" ry="5.3" fill="#80b45a" opacity="0.66"/><ellipse cx="133.5" cy="52.8" rx="2.3" ry="2.1" fill="#1e3e1e" opacity="0.84"/><ellipse cx="141.5" cy="33.2" rx="2.2" ry="1.8" fill="#1f4424" opacity="0.83"/><ellipse cx="100.4" cy="29.8" rx="2.9" ry="3.6" fill="#1f4424" opacity="0.57"/><ellipse cx="151.9" cy="21.5" rx="4.2" ry="4.5" fill="#386c32" opacity="0.87"/><ellipse cx="67.3" cy="34.3" rx="2.1" ry="1.8" fill="#24502a" opacity="0.76"/><ellipse cx="4.9" cy="36.2" rx="3.2" ry="3.0" fill="#3f7436" opacity="0.79"/><ellipse cx="243.9" cy="40.3" rx="3.1" ry="3.8" fill="#4a863a" opacity="0.68"/><ellipse cx="113.0" cy="49.6" rx="3.9" ry="4.5" fill="#62a048" opacity="0.59"/><ellipse cx="242.2" cy="65.8" rx="2.8" ry="3.6" fill="#4a8438" opacity="0.70"/><ellipse cx="62.1" cy="39.7" rx="3.0" ry="3.0" fill="#70a852" opacity="0.75"/><ellipse cx="2.1" cy="57.3" rx="3.9" ry="4.4" fill="#3c7432" opacity="0.67"/><ellipse cx="85.9" cy="71.4" rx="3.8" ry="4.5" fill="#90bc68" opacity="0.56"/><ellipse cx="12.3" cy="59.2" rx="4.9" ry="5.4" fill="#90bc68" opacity="0.65"/><ellipse cx="148.6" cy="27.7" rx="2.6" ry="3.1" fill="#386c32" opacity="0.64"/><ellipse cx="195.4" cy="26.8" rx="4.4" ry="5.1" fill="#3f7436" opacity="0.60"/><ellipse cx="123.0" cy="54.8" rx="2.8" ry="2.5" fill="#569444" opacity="0.70"/><ellipse cx="172.9" cy="25.1" rx="3.0" ry="3.4" fill="#386c32" opacity="0.63"/><ellipse cx="201.1" cy="73.9" rx="2.2" ry="2.8" fill="#4a8438" opacity="0.71"/><ellipse cx="53.7" cy="33.1" rx="3.6" ry="3.4" fill="#2e602c" opacity="0.84"/><ellipse cx="141.9" cy="67.8" rx="3.0" ry="3.6" fill="#6ea84e" opacity="0.67"/><ellipse cx="29.7" cy="39.4" rx="4.4" ry="4.5" fill="#386c32" opacity="0.77"/><ellipse cx="70.2" cy="52.9" rx="2.1" ry="1.8" fill="#2a5a28" opacity="0.55"/><ellipse cx="234.7" cy="69.4" rx="5.0" ry="5.4" fill="#2a5226" opacity="0.90"/><ellipse cx="177.7" cy="22.9" rx="3.4" ry="4.3" fill="#3f7436" opacity="0.74"/><ellipse cx="221.2" cy="68.5" rx="4.6" ry="3.9" fill="#90bc68" opacity="0.64"/><ellipse cx="5.9" cy="66.2" rx="3.5" ry="4.4" fill="#4a8438" opacity="0.86"/><ellipse cx="142.4" cy="15.8" rx="4.2" ry="4.5" fill="#2e602c" opacity="0.63"/><ellipse cx="2.0" cy="53.5" rx="2.2" ry="1.9" fill="#62a048" opacity="0.59"/><ellipse cx="241.9" cy="51.1" rx="4.4" ry="4.3" fill="#3c7432" opacity="0.62"/><ellipse cx="131.7" cy="65.8" rx="2.5" ry="3.2" fill="#90bc68" opacity="0.83"/><ellipse cx="204.5" cy="22.0" rx="3.9" ry="3.2" fill="#1f4424" opacity="0.64"/><ellipse cx="64.7" cy="50.5" rx="3.3" ry="3.1" fill="#2a5a28" opacity="0.84"/><ellipse cx="213.0" cy="63.7" rx="2.1" ry="1.8" fill="#5e9a44" opacity="0.89"/><ellipse cx="212.3" cy="25.9" rx="3.5" ry="3.1" fill="#386c32" opacity="0.58"/><ellipse cx="94.2" cy="45.3" rx="2.9" ry="2.6" fill="#569444" opacity="0.67"/><ellipse cx="28.2" cy="53.5" rx="4.1" ry="5.0" fill="#2a5a28" opacity="0.75"/><ellipse cx="7.8" cy="48.1" rx="4.0" ry="3.9" fill="#62a048" opacity="0.83"/><ellipse cx="154.0" cy="44.2" rx="3.1" ry="3.7" fill="#2a5a28" opacity="0.66"/><ellipse cx="236.5" cy="44.2" rx="2.1" ry="2.2" fill="#4a863a" opacity="0.79"/><ellipse cx="15.0" cy="47.1" rx="3.3" ry="4.2" fill="#3c7432" opacity="0.68"/><ellipse cx="223.3" cy="64.7" rx="2.8" ry="3.2" fill="#3c6a30" opacity="0.88"/><ellipse cx="181.3" cy="67.8" rx="3.6" ry="4.1" fill="#2a5226" opacity="0.81"/><ellipse cx="139.1" cy="24.5" rx="3.8" ry="3.9" fill="#24502a" opacity="0.63"/><ellipse cx="94.9" cy="52.3" rx="3.7" ry="4.6" fill="#1e3e1e" opacity="0.61"/><ellipse cx="2.9" cy="68.2" rx="2.4" ry="2.7" fill="#6ea84e" opacity="0.84"/><ellipse cx="237.0" cy="53.0" rx="4.4" ry="5.7" fill="#3c7432" opacity="0.75"/><ellipse cx="130.3" cy="33.0" rx="3.7" ry="4.6" fill="#24502a" opacity="0.57"/><ellipse cx="78.7" cy="52.4" rx="4.5" ry="5.8" fill="#4a863a" opacity="0.78"/><ellipse cx="111.4" cy="60.0" rx="4.8" ry="4.7" fill="#90bc68" opacity="0.69"/><ellipse cx="85.3" cy="43.6" rx="2.2" ry="2.1" fill="#62a048" opacity="0.88"/><ellipse cx="209.6" cy="74.2" rx="3.2" ry="2.9" fill="#3c6a30" opacity="0.69"/><ellipse cx="220.7" cy="30.7" rx="3.5" ry="4.4" fill="#1f4424" opacity="0.73"/><ellipse cx="108.6" cy="61.5" rx="2.6" ry="3.0" fill="#90bc68" opacity="0.60"/><ellipse cx="126.9" cy="72.1" rx="4.6" ry="5.2" fill="#90bc68" opacity="0.85"/><ellipse cx="147.0" cy="51.1" rx="5.0" ry="4.7" fill="#4a863a" opacity="0.64"/><ellipse cx="199.6" cy="32.8" rx="3.7" ry="3.6" fill="#2e602c" opacity="0.82"/><ellipse cx="33.2" cy="75.5" rx="3.4" ry="3.6" fill="#4a8438" opacity="0.84"/><ellipse cx="204.0" cy="51.9" rx="3.4" ry="2.9" fill="#1e3e1e" opacity="0.88"/><ellipse cx="194.3" cy="69.5" rx="2.1" ry="2.7" fill="#4a8438" opacity="0.78"/><ellipse cx="192.9" cy="24.4" rx="2.7" ry="2.4" fill="#386c32" opacity="0.62"/><ellipse cx="62.2" cy="33.6" rx="4.1" ry="5.1" fill="#24502a" opacity="0.64"/><ellipse cx="215.0" cy="38.6" rx="3.3" ry="2.8" fill="#24502a" opacity="0.64"/><ellipse cx="227.3" cy="23.4" rx="3.4" ry="2.7" fill="#386c32" opacity="0.67"/><ellipse cx="106.9" cy="49.8" rx="2.6" ry="3.1" fill="#62a048" opacity="0.72"/><ellipse cx="28.6" cy="41.4" rx="4.7" ry="5.3" fill="#3c7432" opacity="0.59"/><ellipse cx="220.6" cy="71.1" rx="2.3" ry="2.6" fill="#a0c088" opacity="0.68"/><ellipse cx="110.5" cy="58.3" rx="4.0" ry="4.8" fill="#70a852" opacity="0.59"/><ellipse cx="235.0" cy="39.8" rx="3.7" ry="3.2" fill="#62a048" opacity="0.72"/><ellipse cx="85.7" cy="60.4" rx="4.0" ry="4.5" fill="#80b45a" opacity="0.81"/><ellipse cx="34.7" cy="42.9" rx="4.8" ry="4.1" fill="#2a5a28" opacity="0.88"/><ellipse cx="32.6" cy="40.1" rx="4.2" ry="4.2" fill="#62a048" opacity="0.66"/><ellipse cx="44.1" cy="51.1" rx="4.3" ry="3.6" fill="#1e3e1e" opacity="0.80"/><ellipse cx="187.1" cy="50.7" rx="4.2" ry="3.6" fill="#569444" opacity="0.64"/><ellipse cx="10.5" cy="29.8" rx="3.4" ry="3.2" fill="#386c32" opacity="0.82"/><ellipse cx="86.2" cy="39.5" rx="3.2" ry="3.9" fill="#3f7436" opacity="0.57"/><ellipse cx="122.5" cy="75.7" rx="2.5" ry="2.8" fill="#6ea84e" opacity="0.75"/><ellipse cx="226.3" cy="27.6" rx="4.1" ry="4.1" fill="#3f7436" opacity="0.81"/><ellipse cx="202.6" cy="62.4" rx="3.8" ry="4.6" fill="#80b45a" opacity="0.83"/><ellipse cx="134.3" cy="31.0" rx="2.5" ry="2.5" fill="#386c32" opacity="0.65"/><ellipse cx="209.3" cy="45.5" rx="3.2" ry="3.2" fill="#70a852" opacity="0.74"/><ellipse cx="143.9" cy="53.0" rx="4.9" ry="5.7" fill="#1e3e1e" opacity="0.86"/><ellipse cx="165.2" cy="21.3" rx="2.6" ry="2.2" fill="#24502a" opacity="0.81"/><ellipse cx="55.9" cy="36.3" rx="3.9" ry="3.5" fill="#2e602c" opacity="0.74"/><ellipse cx="6.3" cy="50.9" rx="3.9" ry="3.4" fill="#2a5a28" opacity="0.65"/><ellipse cx="162.7" cy="27.1" rx="3.4" ry="3.8" fill="#24502a" opacity="0.57"/><ellipse cx="87.7" cy="35.1" rx="2.2" ry="1.8" fill="#3f7436" opacity="0.67"/><ellipse cx="79.7" cy="40.2" rx="4.1" ry="5.0" fill="#3c7432" opacity="0.76"/><ellipse cx="230.6" cy="60.4" rx="4.2" ry="5.5" fill="#a0c088" opacity="0.62"/><ellipse cx="13.0" cy="35.2" rx="4.1" ry="4.3" fill="#2e602c" opacity="0.59"/><ellipse cx="7.8" cy="28.3" rx="2.6" ry="2.6" fill="#2e602c" opacity="0.72"/><ellipse cx="14.1" cy="68.6" rx="2.6" ry="2.5" fill="#3c6a30" opacity="0.71"/><ellipse cx="187.8" cy="42.7" rx="2.5" ry="2.9" fill="#3c7432" opacity="0.68"/><ellipse cx="90.5" cy="52.0" rx="3.8" ry="4.9" fill="#4a863a" opacity="0.83"/><ellipse cx="62.2" cy="43.1" rx="4.6" ry="4.1" fill="#62a048" opacity="0.62"/><ellipse cx="40.0" cy="46.6" rx="2.5" ry="2.2" fill="#3c7432" opacity="0.76"/><ellipse cx="108.6" cy="34.0" rx="4.5" ry="4.6" fill="#1f4424" opacity="0.69"/><ellipse cx="174.3" cy="22.7" rx="3.2" ry="3.4" fill="#1f4424" opacity="0.87"/><ellipse cx="219.5" cy="35.0" rx="3.2" ry="2.8" fill="#2e602c" opacity="0.77"/><ellipse cx="84.3" cy="27.1" rx="2.2" ry="2.0" fill="#386c32" opacity="0.83"/><ellipse cx="114.3" cy="72.2" rx="2.9" ry="3.1" fill="#4a8438" opacity="0.56"/><ellipse cx="81.9" cy="75.6" rx="3.0" ry="3.4" fill="#5e9a44" opacity="0.89"/><ellipse cx="146.2" cy="15.5" rx="2.1" ry="1.7" fill="#24502a" opacity="0.73"/><ellipse cx="118.4" cy="28.5" rx="3.5" ry="3.2" fill="#386c32" opacity="0.89"/><ellipse cx="117.2" cy="64.6" rx="4.8" ry="4.7" fill="#5e9a44" opacity="0.81"/><ellipse cx="156.1" cy="41.4" rx="4.8" ry="5.9" fill="#4a863a" opacity="0.59"/><ellipse cx="95.2" cy="42.6" rx="4.0" ry="3.6" fill="#2a5a28" opacity="0.81"/><ellipse cx="182.0" cy="67.1" rx="3.7" ry="3.6" fill="#80b45a" opacity="0.70"/><ellipse cx="54.8" cy="65.3" rx="3.4" ry="4.2" fill="#90bc68" opacity="0.73"/><ellipse cx="186.7" cy="71.3" rx="4.1" ry="3.4" fill="#3c6a30" opacity="0.61"/><ellipse cx="186.4" cy="66.2" rx="2.3" ry="2.2" fill="#6ea84e" opacity="0.76"/><ellipse cx="198.9" cy="24.8" rx="3.8" ry="3.9" fill="#24502a" opacity="0.86"/><ellipse cx="181.7" cy="39.8" rx="3.1" ry="2.8" fill="#3c7432" opacity="0.83"/><ellipse cx="227.8" cy="39.8" rx="2.9" ry="2.5" fill="#2a5a28" opacity="0.78"/><ellipse cx="57.7" cy="29.3" rx="2.5" ry="2.7" fill="#2e602c" opacity="0.55"/><ellipse cx="54.9" cy="74.4" rx="2.7" ry="2.8" fill="#2a5226" opacity="0.87"/><ellipse cx="77.4" cy="69.7" rx="4.3" ry="3.9" fill="#3c6a30" opacity="0.58"/><ellipse cx="205.0" cy="27.6" rx="2.1" ry="1.9" fill="#24502a" opacity="0.86"/><ellipse cx="18.6" cy="48.9" rx="2.7" ry="3.0" fill="#70a852" opacity="0.59"/><ellipse cx="119.4" cy="56.5" rx="4.1" ry="4.5" fill="#2a5a28" opacity="0.71"/><ellipse cx="25.0" cy="67.9" rx="3.8" ry="3.4" fill="#2a5226" opacity="0.74"/><ellipse cx="114.0" cy="60.8" rx="2.2" ry="2.0" fill="#a0c088" opacity="0.81"/><ellipse cx="229.8" cy="58.8" rx="3.1" ry="3.5" fill="#70a852" opacity="0.76"/><ellipse cx="51.0" cy="43.7" rx="5.0" ry="4.6" fill="#569444" opacity="0.70"/><ellipse cx="60.2" cy="41.6" rx="4.2" ry="4.9" fill="#4a863a" opacity="0.86"/><ellipse cx="245.6" cy="55.0" rx="4.8" ry="5.9" fill="#62a048" opacity="0.68"/><ellipse cx="45.2" cy="57.8" rx="3.2" ry="4.2" fill="#70a852" opacity="0.71"/><ellipse cx="145.1" cy="16.2" rx="4.9" ry="4.3" fill="#24502a" opacity="0.58"/><ellipse cx="179.0" cy="37.6" rx="3.6" ry="2.9" fill="#1f4424" opacity="0.81"/><ellipse cx="66.5" cy="44.9" rx="3.0" ry="2.7" fill="#1e3e1e" opacity="0.82"/><ellipse cx="33.0" cy="46.0" rx="4.7" ry="4.0" fill="#2a5a28" opacity="0.60"/><ellipse cx="189.2" cy="59.3" rx="4.9" ry="6.3" fill="#a0c088" opacity="0.70"/><ellipse cx="233.9" cy="47.1" rx="5.0" ry="4.9" fill="#4a863a" opacity="0.85"/><ellipse cx="68.9" cy="47.0" rx="4.7" ry="5.7" fill="#70a852" opacity="0.81"/><ellipse cx="231.4" cy="49.6" rx="2.0" ry="2.2" fill="#1e3e1e" opacity="0.74"/><ellipse cx="38.8" cy="28.8" rx="2.6" ry="2.6" fill="#1f4424" opacity="0.89"/><ellipse cx="88.4" cy="52.5" rx="3.5" ry="2.8" fill="#4a863a" opacity="0.70"/><ellipse cx="82.2" cy="23.6" rx="3.6" ry="3.7" fill="#24502a" opacity="0.64"/><ellipse cx="166.3" cy="47.9" rx="4.2" ry="3.4" fill="#569444" opacity="0.70"/><ellipse cx="155.1" cy="57.6" rx="4.7" ry="5.1" fill="#70a852" opacity="0.88"/><ellipse cx="184.4" cy="67.3" rx="3.2" ry="3.5" fill="#a0c088" opacity="0.65"/><ellipse cx="39.5" cy="27.4" rx="3.9" ry="4.1" fill="#1f4424" opacity="0.78"/><ellipse cx="231.0" cy="65.8" rx="3.8" ry="3.8" fill="#2a5226" opacity="0.77"/><ellipse cx="71.0" cy="26.6" rx="2.4" ry="2.1" fill="#3f7436" opacity="0.82"/><ellipse cx="108.9" cy="38.7" rx="2.8" ry="3.5" fill="#386c32" opacity="0.60"/><ellipse cx="76.4" cy="50.3" rx="3.2" ry="3.0" fill="#70a852" opacity="0.71"/><ellipse cx="144.5" cy="30.6" rx="2.9" ry="3.2" fill="#3f7436" opacity="0.72"/><ellipse cx="67.5" cy="60.2" rx="4.7" ry="4.8" fill="#6ea84e" opacity="0.58"/><ellipse cx="5.5" cy="50.4" rx="4.3" ry="4.8" fill="#70a852" opacity="0.62"/><ellipse cx="229.0" cy="31.2" rx="3.1" ry="3.0" fill="#1f4424" opacity="0.64"/><ellipse cx="236.4" cy="72.9" rx="3.0" ry="3.2" fill="#2a5226" opacity="0.56"/><ellipse cx="102.2" cy="45.3" rx="4.7" ry="4.3" fill="#2a5a28" opacity="0.62"/><ellipse cx="17.0" cy="52.1" rx="4.2" ry="3.6" fill="#70a852" opacity="0.84"/><ellipse cx="218.9" cy="72.9" rx="4.9" ry="5.0" fill="#6ea84e" opacity="0.89"/><ellipse cx="113.4" cy="36.7" rx="3.7" ry="3.4" fill="#2e602c" opacity="0.89"/><ellipse cx="33.3" cy="70.9" rx="2.5" ry="2.9" fill="#3c6a30" opacity="0.78"/><ellipse cx="32.8" cy="25.1" rx="4.3" ry="4.1" fill="#2e602c" opacity="0.78"/><ellipse cx="30.0" cy="31.8" rx="3.6" ry="3.8" fill="#2e602c" opacity="0.68"/><ellipse cx="24.0" cy="45.7" rx="5.0" ry="4.2" fill="#569444" opacity="0.59"/><ellipse cx="71.3" cy="43.2" rx="4.8" ry="4.0" fill="#62a048" opacity="0.62"/><ellipse cx="233.7" cy="75.8" rx="4.9" ry="4.1" fill="#4a8438" opacity="0.74"/><ellipse cx="222.5" cy="27.4" rx="4.5" ry="3.7" fill="#1f4424" opacity="0.67"/><ellipse cx="185.5" cy="64.0" rx="3.7" ry="4.0" fill="#3c6a30" opacity="0.66"/><ellipse cx="34.6" cy="47.3" rx="3.2" ry="3.5" fill="#70a852" opacity="0.88"/><ellipse cx="210.8" cy="30.9" rx="4.9" ry="4.7" fill="#2e602c" opacity="0.84"/><ellipse cx="29.9" cy="55.5" rx="2.2" ry="2.7" fill="#62a048" opacity="0.59"/><ellipse cx="0.5" cy="69.7" rx="4.4" ry="4.7" fill="#a0c088" opacity="0.82"/><ellipse cx="20.3" cy="52.6" rx="3.3" ry="3.6" fill="#4a863a" opacity="0.63"/><ellipse cx="112.0" cy="52.5" rx="3.9" ry="3.8" fill="#62a048" opacity="0.76"/><ellipse cx="244.1" cy="72.5" rx="4.6" ry="4.3" fill="#a0c088" opacity="0.89"/><ellipse cx="65.0" cy="28.4" rx="3.5" ry="4.1" fill="#386c32" opacity="0.64"/><ellipse cx="106.5" cy="38.7" rx="2.4" ry="2.5" fill="#386c32" opacity="0.86"/><ellipse cx="245.6" cy="50.5" rx="3.3" ry="2.7" fill="#62a048" opacity="0.70"/><ellipse cx="135.6" cy="54.6" rx="2.9" ry="3.5" fill="#4a863a" opacity="0.68"/><ellipse cx="244.3" cy="41.7" rx="2.6" ry="2.8" fill="#62a048" opacity="0.59"/><ellipse cx="181.5" cy="42.9" rx="3.7" ry="3.5" fill="#3c7432" opacity="0.73"/><ellipse cx="97.6" cy="43.4" rx="4.0" ry="4.3" fill="#3c7432" opacity="0.60"/><ellipse cx="52.4" cy="45.1" rx="3.8" ry="4.8" fill="#4a863a" opacity="0.62"/><ellipse cx="106.7" cy="35.1" rx="2.1" ry="2.2" fill="#386c32" opacity="0.81"/><ellipse cx="205.8" cy="67.1" rx="4.7" ry="4.6" fill="#3c6a30" opacity="0.75"/><ellipse cx="125.4" cy="71.6" rx="2.7" ry="3.3" fill="#80b45a" opacity="0.65"/><ellipse cx="44.9" cy="67.5" rx="3.8" ry="3.9" fill="#6ea84e" opacity="0.83"/><ellipse cx="93.5" cy="50.3" rx="5.0" ry="4.6" fill="#2a5a28" opacity="0.69"/><ellipse cx="126.0" cy="41.9" rx="3.9" ry="3.7" fill="#1e3e1e" opacity="0.65"/><ellipse cx="158.4" cy="61.2" rx="4.6" ry="4.7" fill="#6ea84e" opacity="0.81"/><ellipse cx="246.9" cy="27.4" rx="2.0" ry="2.5" fill="#1f4424" opacity="0.77"/><ellipse cx="20.7" cy="58.7" rx="3.9" ry="3.6" fill="#62a048" opacity="0.66"/><ellipse cx="160.4" cy="73.5" rx="2.2" ry="2.7" fill="#5e9a44" opacity="0.73"/><ellipse cx="57.3" cy="67.6" rx="2.5" ry="3.1" fill="#3c6a30" opacity="0.87"/><ellipse cx="96.8" cy="42.5" rx="3.4" ry="3.1" fill="#62a048" opacity="0.75"/><ellipse cx="83.4" cy="53.1" rx="3.7" ry="4.2" fill="#569444" opacity="0.67"/><ellipse cx="190.7" cy="71.0" rx="4.6" ry="4.7" fill="#4a8438" opacity="0.80"/><ellipse cx="213.1" cy="55.7" rx="3.5" ry="3.2" fill="#70a852" opacity="0.84"/><ellipse cx="233.3" cy="27.7" rx="4.7" ry="5.8" fill="#1f4424" opacity="0.66"/><ellipse cx="187.2" cy="38.7" rx="2.7" ry="2.5" fill="#24502a" opacity="0.68"/><ellipse cx="53.3" cy="41.0" rx="3.0" ry="3.5" fill="#3c7432" opacity="0.67"/><ellipse cx="25.0" cy="37.5" rx="3.3" ry="2.9" fill="#3f7436" opacity="0.72"/><ellipse cx="49.7" cy="66.6" rx="3.1" ry="2.7" fill="#4a8438" opacity="0.81"/><ellipse cx="96.3" cy="52.8" rx="3.8" ry="3.6" fill="#1e3e1e" opacity="0.68"/><ellipse cx="16.8" cy="52.6" rx="3.4" ry="3.7" fill="#3c7432" opacity="0.64"/><ellipse cx="223.5" cy="58.9" rx="2.7" ry="2.8" fill="#70a852" opacity="0.72"/><ellipse cx="99.4" cy="55.4" rx="4.3" ry="5.0" fill="#3c7432" opacity="0.67"/><ellipse cx="181.5" cy="53.4" rx="2.3" ry="2.0" fill="#62a048" opacity="0.65"/><ellipse cx="155.6" cy="27.8" rx="4.8" ry="5.0" fill="#386c32" opacity="0.75"/><ellipse cx="204.6" cy="32.6" rx="2.3" ry="2.5" fill="#3f7436" opacity="0.75"/><ellipse cx="167.9" cy="35.9" rx="3.0" ry="3.6" fill="#1f4424" opacity="0.81"/><ellipse cx="70.4" cy="23.0" rx="4.0" ry="4.1" fill="#386c32" opacity="0.68"/><ellipse cx="42.7" cy="41.9" rx="2.6" ry="2.5" fill="#70a852" opacity="0.59"/><ellipse cx="136.6" cy="38.1" rx="4.2" ry="4.5" fill="#2e602c" opacity="0.71"/><ellipse cx="225.8" cy="51.6" rx="3.1" ry="2.6" fill="#1e3e1e" opacity="0.72"/><ellipse cx="47.8" cy="51.6" rx="2.5" ry="2.7" fill="#3c7432" opacity="0.59"/><ellipse cx="94.6" cy="53.7" rx="2.9" ry="2.5" fill="#569444" opacity="0.65"/><ellipse cx="76.2" cy="72.9" rx="2.4" ry="2.4" fill="#6ea84e" opacity="0.70"/><ellipse cx="63.1" cy="74.0" rx="2.6" ry="2.9" fill="#4a8438" opacity="0.64"/><ellipse cx="62.1" cy="42.0" rx="3.0" ry="2.6" fill="#3c7432" opacity="0.80"/><ellipse cx="186.1" cy="33.2" rx="3.4" ry="3.2" fill="#24502a" opacity="0.82"/><ellipse cx="38.7" cy="59.4" rx="2.8" ry="2.8" fill="#80b45a" opacity="0.85"/><ellipse cx="184.7" cy="48.8" rx="4.1" ry="5.2" fill="#2a5a28" opacity="0.70"/><ellipse cx="71.4" cy="37.3" rx="4.7" ry="3.9" fill="#2e602c" opacity="0.61"/><ellipse cx="158.4" cy="30.1" rx="4.3" ry="5.0" fill="#3f7436" opacity="0.62"/><ellipse cx="173.0" cy="55.9" rx="2.8" ry="3.0" fill="#1e3e1e" opacity="0.81"/><ellipse cx="229.1" cy="32.3" rx="2.5" ry="2.6" fill="#24502a" opacity="0.81"/><ellipse cx="34.7" cy="52.0" rx="4.0" ry="4.7" fill="#62a048" opacity="0.64"/><ellipse cx="18.9" cy="29.2" rx="4.0" ry="3.2" fill="#24502a" opacity="0.58"/><ellipse cx="194.9" cy="42.5" rx="3.4" ry="3.7" fill="#1e3e1e" opacity="0.64"/><ellipse cx="173.6" cy="19.7" rx="2.8" ry="2.5" fill="#1f4424" opacity="0.56"/><ellipse cx="127.6" cy="36.7" rx="4.9" ry="4.0" fill="#24502a" opacity="0.62"/><ellipse cx="-0.1" cy="51.9" rx="4.8" ry="4.6" fill="#1e3e1e" opacity="0.63"/><ellipse cx="111.0" cy="65.4" rx="3.0" ry="2.7" fill="#4a8438" opacity="0.69"/><ellipse cx="96.7" cy="75.0" rx="2.3" ry="2.2" fill="#4a8438" opacity="0.56"/><ellipse cx="3.7" cy="43.5" rx="2.6" ry="2.7" fill="#62a048" opacity="0.77"/><ellipse cx="245.5" cy="42.6" rx="4.7" ry="5.0" fill="#4a863a" opacity="0.70"/><ellipse cx="74.7" cy="25.9" rx="4.4" ry="4.7" fill="#3f7436" opacity="0.65"/><ellipse cx="233.7" cy="72.6" rx="2.4" ry="2.3" fill="#80b45a" opacity="0.73"/><ellipse cx="53.9" cy="52.9" rx="2.9" ry="3.0" fill="#3c7432" opacity="0.72"/><ellipse cx="59.4" cy="72.2" rx="3.2" ry="2.6" fill="#5e9a44" opacity="0.77"/><ellipse cx="11.7" cy="50.3" rx="3.4" ry="2.8" fill="#3c7432" opacity="0.79"/><ellipse cx="73.8" cy="47.9" rx="2.9" ry="3.5" fill="#569444" opacity="0.66"/><ellipse cx="138.9" cy="42.0" rx="3.9" ry="5.1" fill="#3c7432" opacity="0.62"/><ellipse cx="18.0" cy="63.1" rx="3.6" ry="4.0" fill="#80b45a" opacity="0.58"/><ellipse cx="166.8" cy="48.6" rx="4.9" ry="5.1" fill="#3c7432" opacity="0.68"/><ellipse cx="122.9" cy="20.0" rx="4.0" ry="4.3" fill="#386c32" opacity="0.69"/><ellipse cx="114.3" cy="53.6" rx="2.1" ry="2.2" fill="#569444" opacity="0.77"/><ellipse cx="195.3" cy="62.1" rx="2.6" ry="2.9" fill="#6ea84e" opacity="0.81"/><ellipse cx="238.1" cy="47.5" rx="2.6" ry="2.9" fill="#569444" opacity="0.78"/><ellipse cx="248.5" cy="26.5" rx="3.2" ry="2.9" fill="#1f4424" opacity="0.58"/><ellipse cx="42.0" cy="51.7" rx="2.8" ry="3.0" fill="#2a5a28" opacity="0.67"/><ellipse cx="105.6" cy="27.5" rx="4.2" ry="4.1" fill="#1f4424" opacity="0.80"/><ellipse cx="65.7" cy="33.3" rx="2.7" ry="3.2" fill="#2e602c" opacity="0.56"/><ellipse cx="101.2" cy="67.7" rx="3.8" ry="4.0" fill="#2a5226" opacity="0.68"/><ellipse cx="123.8" cy="40.9" rx="2.6" ry="2.2" fill="#2a5a28" opacity="0.75"/><ellipse cx="37.7" cy="26.9" rx="3.7" ry="4.8" fill="#24502a" opacity="0.60"/><ellipse cx="192.7" cy="70.4" rx="2.4" ry="3.0" fill="#4a8438" opacity="0.65"/><ellipse cx="212.5" cy="70.9" rx="3.3" ry="2.9" fill="#80b45a" opacity="0.79"/><ellipse cx="154.9" cy="47.6" rx="3.9" ry="4.9" fill="#62a048" opacity="0.64"/><ellipse cx="1.6" cy="73.5" rx="3.0" ry="2.7" fill="#2a5226" opacity="0.59"/><ellipse cx="47.1" cy="37.1" rx="3.2" ry="3.9" fill="#2e602c" opacity="0.67"/><ellipse cx="183.3" cy="26.4" rx="3.7" ry="4.5" fill="#2e602c" opacity="0.62"/><ellipse cx="180.8" cy="21.9" rx="3.9" ry="5.0" fill="#2e602c" opacity="0.81"/><ellipse cx="203.6" cy="25.5" rx="2.8" ry="2.6" fill="#2e602c" opacity="0.67"/><ellipse cx="51.5" cy="36.4" rx="3.9" ry="4.0" fill="#24502a" opacity="0.64"/><ellipse cx="131.4" cy="42.3" rx="3.7" ry="4.8" fill="#70a852" opacity="0.62"/><ellipse cx="229.5" cy="38.3" rx="4.0" ry="4.0" fill="#24502a" opacity="0.82"/><ellipse cx="177.3" cy="64.7" rx="4.3" ry="4.0" fill="#4a8438" opacity="0.59"/><ellipse cx="142.0" cy="17.0" rx="4.6" ry="5.1" fill="#386c32" opacity="0.63"/><ellipse cx="9.0" cy="64.3" rx="3.8" ry="3.8" fill="#6ea84e" opacity="0.67"/><ellipse cx="70.3" cy="48.5" rx="4.3" ry="5.6" fill="#2a5a28" opacity="0.61"/><ellipse cx="-2.8" cy="64.7" rx="3.1" ry="2.9" fill="#3c6a30" opacity="0.85"/><ellipse cx="46.9" cy="49.6" rx="3.4" ry="3.4" fill="#1e3e1e" opacity="0.55"/><ellipse cx="134.3" cy="47.8" rx="3.5" ry="2.8" fill="#2a5a28" opacity="0.58"/><ellipse cx="73.8" cy="35.2" rx="3.6" ry="3.2" fill="#2e602c" opacity="0.83"/><ellipse cx="62.7" cy="27.6" rx="3.6" ry="4.4" fill="#2e602c" opacity="0.86"/><ellipse cx="243.9" cy="24.7" rx="3.1" ry="3.5" fill="#24502a" opacity="0.73"/><ellipse cx="84.8" cy="47.2" rx="2.0" ry="2.3" fill="#2a5a28" opacity="0.86"/><ellipse cx="135.2" cy="25.6" rx="4.7" ry="5.3" fill="#24502a" opacity="0.62"/><ellipse cx="23.3" cy="30.2" rx="3.0" ry="2.5" fill="#2e602c" opacity="0.70"/><ellipse cx="28.1" cy="70.4" rx="4.2" ry="4.8" fill="#a0c088" opacity="0.81"/><ellipse cx="153.2" cy="62.8" rx="4.1" ry="5.0" fill="#5e9a44" opacity="0.80"/><ellipse cx="159.8" cy="18.0" rx="4.3" ry="3.7" fill="#1f4424" opacity="0.85"/><ellipse cx="109.2" cy="51.3" rx="4.0" ry="4.4" fill="#4a863a" opacity="0.87"/><ellipse cx="73.4" cy="56.3" rx="2.2" ry="2.0" fill="#70a852" opacity="0.86"/><ellipse cx="107.4" cy="44.8" rx="3.6" ry="3.8" fill="#1e3e1e" opacity="0.65"/><ellipse cx="83.9" cy="62.1" rx="2.5" ry="2.1" fill="#a0c088" opacity="0.87"/><ellipse cx="180.9" cy="54.0" rx="3.2" ry="3.3" fill="#62a048" opacity="0.63"/><ellipse cx="22.3" cy="43.4" rx="3.8" ry="3.9" fill="#569444" opacity="0.57"/><ellipse cx="158.5" cy="48.6" rx="4.5" ry="5.0" fill="#569444" opacity="0.72"/><ellipse cx="128.8" cy="46.8" rx="4.5" ry="5.5" fill="#4a863a" opacity="0.90"/><ellipse cx="19.0" cy="60.3" rx="4.4" ry="4.4" fill="#3c6a30" opacity="0.61"/><ellipse cx="212.3" cy="60.4" rx="4.9" ry="3.9" fill="#90bc68" opacity="0.61"/><ellipse cx="47.3" cy="73.9" rx="3.4" ry="3.2" fill="#6ea84e" opacity="0.78"/><ellipse cx="201.9" cy="58.2" rx="2.0" ry="1.9" fill="#2a5a28" opacity="0.76"/><ellipse cx="226.9" cy="56.2" rx="4.3" ry="4.8" fill="#4a863a" opacity="0.75"/><ellipse cx="122.1" cy="67.5" rx="3.6" ry="3.3" fill="#a0c088" opacity="0.62"/><ellipse cx="5.9" cy="70.0" rx="2.2" ry="2.0" fill="#5e9a44" opacity="0.72"/><ellipse cx="79.3" cy="30.9" rx="3.1" ry="3.2" fill="#2e602c" opacity="0.73"/><ellipse cx="132.6" cy="21.7" rx="3.6" ry="3.2" fill="#386c32" opacity="0.65"/><ellipse cx="59.8" cy="69.0" rx="4.5" ry="3.9" fill="#2a5226" opacity="0.70"/><ellipse cx="173.9" cy="23.0" rx="4.8" ry="6.0" fill="#24502a" opacity="0.79"/><ellipse cx="152.6" cy="74.6" rx="2.8" ry="2.8" fill="#90bc68" opacity="0.55"/><ellipse cx="239.7" cy="65.0" rx="3.2" ry="3.2" fill="#5e9a44" opacity="0.86"/><ellipse cx="188.4" cy="58.6" rx="4.5" ry="5.8" fill="#3c7432" opacity="0.88"/><ellipse cx="43.3" cy="71.5" rx="3.0" ry="3.6" fill="#2a5226" opacity="0.88"/><ellipse cx="172.4" cy="39.4" rx="3.5" ry="3.5" fill="#1f4424" opacity="0.67"/><ellipse cx="151.9" cy="32.0" rx="4.6" ry="4.3" fill="#24502a" opacity="0.60"/><ellipse cx="63.3" cy="30.3" rx="4.6" ry="5.0" fill="#3f7436" opacity="0.85"/><ellipse cx="219.7" cy="30.9" rx="4.5" ry="5.8" fill="#386c32" opacity="0.82"/><ellipse cx="95.8" cy="36.3" rx="4.0" ry="4.9" fill="#2e602c" opacity="0.78"/><ellipse cx="88.2" cy="65.0" rx="2.8" ry="3.1" fill="#2a5226" opacity="0.82"/><ellipse cx="35.8" cy="42.0" rx="2.2" ry="2.8" fill="#569444" opacity="0.82"/><ellipse cx="67.1" cy="32.0" rx="4.2" ry="4.7" fill="#1f4424" opacity="0.62"/><ellipse cx="178.5" cy="50.0" rx="3.1" ry="2.9" fill="#62a048" opacity="0.64"/><ellipse cx="224.3" cy="28.1" rx="4.2" ry="4.6" fill="#3f7436" opacity="0.88"/><ellipse cx="162.6" cy="51.7" rx="4.6" ry="5.8" fill="#3c7432" opacity="0.84"/><ellipse cx="134.8" cy="72.6" rx="2.9" ry="2.5" fill="#a0c088" opacity="0.73"/><ellipse cx="62.0" cy="72.4" rx="4.4" ry="5.2" fill="#3c6a30" opacity="0.79"/><ellipse cx="62.8" cy="36.0" rx="4.0" ry="4.8" fill="#3f7436" opacity="0.82"/><ellipse cx="18.0" cy="66.9" rx="2.0" ry="2.5" fill="#3c6a30" opacity="0.75"/><ellipse cx="106.1" cy="31.2" rx="3.2" ry="3.8" fill="#1f4424" opacity="0.67"/><ellipse cx="223.1" cy="43.5" rx="2.2" ry="1.9" fill="#4a863a" opacity="0.64"/><ellipse cx="191.3" cy="26.7" rx="3.6" ry="4.0" fill="#2e602c" opacity="0.67"/><ellipse cx="188.0" cy="66.3" rx="3.7" ry="4.6" fill="#a0c088" opacity="0.57"/><ellipse cx="16.0" cy="54.6" rx="2.4" ry="2.2" fill="#62a048" opacity="0.83"/><ellipse cx="47.6" cy="35.1" rx="4.3" ry="4.3" fill="#2e602c" opacity="0.73"/><ellipse cx="2.9" cy="32.1" rx="3.0" ry="3.5" fill="#1f4424" opacity="0.70"/><ellipse cx="53.0" cy="29.3" rx="4.1" ry="4.8" fill="#3f7436" opacity="0.79"/><ellipse cx="210.7" cy="31.1" rx="2.6" ry="2.1" fill="#386c32" opacity="0.72"/><ellipse cx="163.2" cy="26.7" rx="2.7" ry="2.5" fill="#1f4424" opacity="0.86"/><ellipse cx="12.3" cy="69.2" rx="3.9" ry="4.8" fill="#a0c088" opacity="0.77"/><ellipse cx="37.2" cy="56.8" rx="3.3" ry="4.0" fill="#70a852" opacity="0.86"/><ellipse cx="212.7" cy="67.1" rx="3.7" ry="4.2" fill="#a0c088" opacity="0.75"/><ellipse cx="104.3" cy="27.1" rx="2.3" ry="2.4" fill="#2e602c" opacity="0.63"/><ellipse cx="99.2" cy="68.1" rx="3.9" ry="3.5" fill="#80b45a" opacity="0.86"/><ellipse cx="238.4" cy="36.0" rx="2.4" ry="1.9" fill="#1f4424" opacity="0.69"/><ellipse cx="206.7" cy="51.1" rx="4.6" ry="3.9" fill="#4a863a" opacity="0.87"/><ellipse cx="4.5" cy="74.5" rx="2.7" ry="2.8" fill="#a0c088" opacity="0.79"/><ellipse cx="70.6" cy="67.1" rx="2.3" ry="2.6" fill="#a0c088" opacity="0.57"/><ellipse cx="234.2" cy="38.5" rx="2.2" ry="1.9" fill="#386c32" opacity="0.85"/><ellipse cx="170.1" cy="54.5" rx="3.4" ry="4.2" fill="#3c7432" opacity="0.84"/><ellipse cx="177.1" cy="42.1" rx="2.8" ry="3.4" fill="#4a863a" opacity="0.67"/><ellipse cx="160.7" cy="21.3" rx="4.3" ry="4.7" fill="#386c32" opacity="0.77"/><ellipse cx="36.1" cy="37.7" rx="4.1" ry="4.2" fill="#2e602c" opacity="0.73"/><ellipse cx="19.6" cy="40.7" rx="2.2" ry="2.8" fill="#70a852" opacity="0.73"/><ellipse cx="186.7" cy="58.4" rx="2.6" ry="3.0" fill="#62a048" opacity="0.69"/><ellipse cx="237.4" cy="56.0" rx="2.9" ry="3.5" fill="#1e3e1e" opacity="0.60"/><ellipse cx="174.2" cy="55.1" rx="4.8" ry="4.4" fill="#3c7432" opacity="0.73"/><ellipse cx="111.2" cy="62.0" rx="3.2" ry="3.8" fill="#2a5226" opacity="0.73"/><ellipse cx="73.0" cy="44.4" rx="3.1" ry="2.6" fill="#569444" opacity="0.84"/><ellipse cx="152.4" cy="37.1" rx="2.3" ry="2.6" fill="#1f4424" opacity="0.64"/><ellipse cx="114.0" cy="25.4" rx="2.7" ry="3.1" fill="#3f7436" opacity="0.85"/><ellipse cx="37.9" cy="31.3" rx="3.1" ry="2.8" fill="#1f4424" opacity="0.70"/><ellipse cx="2.2" cy="70.0" rx="5.0" ry="4.1" fill="#90bc68" opacity="0.76"/><ellipse cx="44.3" cy="29.9" rx="3.4" ry="3.4" fill="#3f7436" opacity="0.83"/><ellipse cx="214.1" cy="44.9" rx="2.0" ry="1.6" fill="#70a852" opacity="0.89"/><ellipse cx="100.6" cy="27.4" rx="2.5" ry="2.8" fill="#2e602c" opacity="0.59"/><ellipse cx="140.6" cy="70.6" rx="4.7" ry="5.3" fill="#a0c088" opacity="0.66"/><ellipse cx="158.4" cy="55.6" rx="3.8" ry="3.6" fill="#2a5a28" opacity="0.55"/><ellipse cx="92.4" cy="61.6" rx="4.7" ry="6.0" fill="#90bc68" opacity="0.55"/><ellipse cx="59.8" cy="41.7" rx="3.4" ry="3.8" fill="#2a5a28" opacity="0.55"/><ellipse cx="211.0" cy="37.7" rx="4.8" ry="4.1" fill="#3f7436" opacity="0.69"/><ellipse cx="35.4" cy="63.4" rx="2.3" ry="2.8" fill="#6ea84e" opacity="0.64"/><ellipse cx="1.7" cy="61.0" rx="2.9" ry="3.0" fill="#5e9a44" opacity="0.88"/><ellipse cx="82.8" cy="47.0" rx="4.6" ry="4.5" fill="#4a863a" opacity="0.84"/><ellipse cx="205.7" cy="30.8" rx="4.8" ry="4.8" fill="#386c32" opacity="0.67"/><ellipse cx="22.5" cy="69.7" rx="3.3" ry="4.1" fill="#a0c088" opacity="0.67"/><ellipse cx="20.6" cy="73.9" rx="3.4" ry="3.8" fill="#90bc68" opacity="0.73"/><ellipse cx="123.6" cy="38.8" rx="2.6" ry="3.2" fill="#24502a" opacity="0.75"/><ellipse cx="60.4" cy="71.5" rx="2.6" ry="3.4" fill="#80b45a" opacity="0.81"/><ellipse cx="195.4" cy="49.9" rx="4.1" ry="3.6" fill="#70a852" opacity="0.67"/><ellipse cx="246.0" cy="65.2" rx="4.3" ry="4.8" fill="#6ea84e" opacity="0.61"/><ellipse cx="178.0" cy="34.7" rx="2.8" ry="2.3" fill="#386c32" opacity="0.71"/><ellipse cx="224.2" cy="39.7" rx="2.9" ry="3.2" fill="#70a852" opacity="0.75"/><ellipse cx="224.0" cy="27.0" rx="3.0" ry="3.5" fill="#2e602c" opacity="0.64"/><ellipse cx="232.6" cy="33.5" rx="3.3" ry="3.8" fill="#2e602c" opacity="0.89"/><ellipse cx="201.3" cy="47.7" rx="2.4" ry="2.7" fill="#2a5a28" opacity="0.67"/><ellipse cx="34.5" cy="40.8" rx="4.5" ry="3.6" fill="#569444" opacity="0.63"/><ellipse cx="90.2" cy="38.3" rx="3.8" ry="4.9" fill="#2e602c" opacity="0.66"/><ellipse cx="245.5" cy="54.1" rx="3.5" ry="3.4" fill="#1e3e1e" opacity="0.66"/><ellipse cx="223.4" cy="26.1" rx="3.2" ry="2.8" fill="#3f7436" opacity="0.75"/><ellipse cx="193.8" cy="67.5" rx="3.5" ry="3.6" fill="#3c6a30" opacity="0.85"/><ellipse cx="68.2" cy="37.2" rx="4.4" ry="5.5" fill="#24502a" opacity="0.59"/><ellipse cx="104.5" cy="65.4" rx="4.8" ry="5.9" fill="#80b45a" opacity="0.71"/><ellipse cx="65.9" cy="55.3" rx="4.1" ry="4.1" fill="#3c7432" opacity="0.55"/><ellipse cx="206.5" cy="51.7" rx="2.8" ry="2.5" fill="#569444" opacity="0.84"/><ellipse cx="1.5" cy="63.4" rx="2.5" ry="2.8" fill="#4a8438" opacity="0.58"/><ellipse cx="-0.8" cy="45.3" rx="4.1" ry="4.8" fill="#62a048" opacity="0.63"/><ellipse cx="79.5" cy="49.1" rx="2.8" ry="2.3" fill="#569444" opacity="0.75"/><ellipse cx="138.2" cy="65.4" rx="3.8" ry="4.2" fill="#3c6a30" opacity="0.77"/><ellipse cx="188.3" cy="61.8" rx="3.5" ry="3.1" fill="#a0c088" opacity="0.67"/><ellipse cx="19.0" cy="67.1" rx="2.8" ry="2.6" fill="#3c6a30" opacity="0.76"/><ellipse cx="4.4" cy="53.7" rx="2.4" ry="2.1" fill="#62a048" opacity="0.71"/><ellipse cx="71.1" cy="48.7" rx="3.5" ry="2.9" fill="#569444" opacity="0.70"/><ellipse cx="226.0" cy="72.7" rx="4.0" ry="4.9" fill="#80b45a" opacity="0.72"/><ellipse cx="137.4" cy="23.3" rx="2.0" ry="2.1" fill="#3f7436" opacity="0.70"/><ellipse cx="163.6" cy="66.1" rx="3.2" ry="3.0" fill="#2a5226" opacity="0.71"/><ellipse cx="157.0" cy="21.5" rx="3.5" ry="3.0" fill="#3f7436" opacity="0.75"/><ellipse cx="35.3" cy="40.2" rx="2.2" ry="2.3" fill="#569444" opacity="0.82"/><ellipse cx="62.2" cy="73.5" rx="4.1" ry="4.3" fill="#5e9a44" opacity="0.76"/><ellipse cx="19.4" cy="55.2" rx="2.9" ry="3.7" fill="#2a5a28" opacity="0.60"/><ellipse cx="172.5" cy="38.8" rx="2.3" ry="2.9" fill="#2e602c" opacity="0.83"/><ellipse cx="157.4" cy="74.7" rx="3.7" ry="4.1" fill="#3c6a30" opacity="0.85"/><ellipse cx="212.7" cy="37.9" rx="2.6" ry="2.5" fill="#3f7436" opacity="0.66"/><ellipse cx="157.4" cy="63.5" rx="3.1" ry="3.0" fill="#4a8438" opacity="0.68"/><ellipse cx="69.3" cy="71.0" rx="4.7" ry="4.8" fill="#4a8438" opacity="0.68"/><ellipse cx="218.9" cy="46.7" rx="2.2" ry="2.3" fill="#3c7432" opacity="0.70"/><ellipse cx="183.1" cy="54.5" rx="3.3" ry="4.2" fill="#569444" opacity="0.68"/><ellipse cx="185.3" cy="29.7" rx="4.7" ry="4.0" fill="#24502a" opacity="0.85"/><ellipse cx="91.2" cy="52.1" rx="3.8" ry="4.4" fill="#1e3e1e" opacity="0.55"/><ellipse cx="207.7" cy="68.3" rx="2.6" ry="2.5" fill="#3c6a30" opacity="0.81"/><ellipse cx="91.8" cy="55.8" rx="3.0" ry="2.9" fill="#70a852" opacity="0.83"/><ellipse cx="157.9" cy="46.8" rx="4.0" ry="3.6" fill="#70a852" opacity="0.88"/><ellipse cx="239.7" cy="28.6" rx="4.3" ry="5.0" fill="#386c32" opacity="0.71"/><ellipse cx="162.7" cy="26.0" rx="4.5" ry="4.5" fill="#24502a" opacity="0.68"/><ellipse cx="114.8" cy="32.6" rx="3.5" ry="2.9" fill="#386c32" opacity="0.63"/><ellipse cx="91.6" cy="26.4" rx="3.3" ry="4.2" fill="#1f4424" opacity="0.78"/><ellipse cx="175.5" cy="23.1" rx="2.3" ry="2.8" fill="#1f4424" opacity="0.87"/><ellipse cx="105.2" cy="27.3" rx="2.9" ry="3.2" fill="#24502a" opacity="0.77"/><ellipse cx="87.2" cy="72.4" rx="4.0" ry="5.0" fill="#a0c088" opacity="0.80"/><ellipse cx="140" cy="68" rx="11" ry="7" fill="#a9b99a" opacity="0.7"/><ellipse cx="160" cy="66" rx="4" ry="9" fill="#b0aa9a" opacity="0.5"/></g><rect x="0" y="74" width="246" height="5" fill="#a2c04a"/><rect x="0" y="73.5" width="110" height="2.5" fill="#b8cf5c" opacity="0.8"/><rect x="150" y="76.5" width="30" height="2.5" fill="#b9a98f" opacity="0.6"/><rect x="0" y="79" width="246" height="46" fill="url(#wc)"/><rect x="0" y="90" width="246" height="35" fill="url(#wlc)"/><rect x="213.7" y="120.0" width="1.6" height="1" fill="#6a7090" opacity="0.5"/><rect x="18.9" y="122.1" width="2.6" height="1" fill="#3c4560" opacity="0.5"/><rect x="200.2" y="84.1" width="1.8" height="1" fill="#5a6270" opacity="0.5"/><rect x="154.6" y="100.6" width="1.8" height="1" fill="#3c4030" opacity="0.5"/><rect x="68.3" y="94.2" width="2.1" height="1" fill="#a0a6c8" opacity="0.5"/><rect x="38.2" y="98.6" width="1.6" height="1" fill="#a0a6c8" opacity="0.5"/><rect x="202.8" y="87.5" width="2.6" height="1" fill="#2c3020" opacity="0.5"/><rect x="197.1" y="96.4" width="2.3" height="1" fill="#3c4030" opacity="0.5"/><rect x="5.7" y="87.5" width="3.2" height="1" fill="#a0a6c8" opacity="0.5"/><rect x="178.2" y="104.8" width="2.5" height="1" fill="#2c3020" opacity="0.5"/><rect x="235.5" y="86.3" width="2.4" height="1" fill="#3c4030" opacity="0.5"/><rect x="121.1" y="101.1" width="1.9" height="1" fill="#2c3020" opacity="0.5"/><rect x="58.5" y="114.0" width="2.0" height="1" fill="#a0a6c8" opacity="0.5"/><rect x="183.2" y="117.3" width="1.5" height="1" fill="#6a7090" opacity="0.5"/><rect x="53.7" y="103.4" width="1.9" height="1" fill="#7a84b2" opacity="0.5"/><rect x="91.2" y="118.2" width="1.9" height="1" fill="#7a84b2" opacity="0.5"/><rect x="26.7" y="105.5" width="1.5" height="1" fill="#3c4560" opacity="0.5"/><rect x="143.9" y="106.6" width="2.1" height="1" fill="#5a6270" opacity="0.5"/><rect x="239.3" y="111.2" width="2.0" height="1" fill="#2c3020" opacity="0.5"/><rect x="45.7" y="123.1" width="2.0" height="1" fill="#a0a6c8" opacity="0.5"/><rect x="172.0" y="121.3" width="1.2" height="1" fill="#4b5478" opacity="0.5"/><rect x="134.1" y="120.9" width="1.3" height="1" fill="#4b5478" opacity="0.5"/><rect x="207.2" y="104.1" width="2.9" height="1" fill="#5a6270" opacity="0.5"/><rect x="67.0" y="92.7" width="3.4" height="1" fill="#7a84b2" opacity="0.5"/><rect x="198.0" y="108.0" width="2.9" height="1" fill="#2c3020" opacity="0.5"/><rect x="238.4" y="104.6" width="1.7" height="1" fill="#2c3020" opacity="0.5"/><rect x="203.5" y="123.1" width="1.1" height="1" fill="#2c3020" opacity="0.5"/><rect x="217.1" y="93.8" width="1.9" height="1" fill="#6a7090" opacity="0.5"/><rect x="154.0" y="102.3" width="1.4" height="1" fill="#2c3020" opacity="0.5"/><rect x="129.1" y="113.1" width="3.3" height="1" fill="#3c4030" opacity="0.5"/><rect x="64.9" y="104.6" width="3.1" height="1" fill="#7a84b2" opacity="0.5"/><rect x="149.4" y="99.9" width="1.6" height="1" fill="#5a6270" opacity="0.5"/><rect x="196.6" y="100.2" width="1.1" height="1" fill="#4b5478" opacity="0.5"/><rect x="169.4" y="116.7" width="3.0" height="1" fill="#2c3020" opacity="0.5"/><rect x="151.0" y="119.5" width="3.2" height="1" fill="#2c3020" opacity="0.5"/><rect x="18.5" y="108.9" width="1.5" height="1" fill="#8c94bc" opacity="0.5"/><rect x="237.2" y="120.2" width="3.0" height="1" fill="#4b5478" opacity="0.5"/><rect x="115.7" y="104.8" width="3.1" height="1" fill="#4b5478" opacity="0.5"/><rect x="9.8" y="92.9" width="2.3" height="1" fill="#a0a6c8" opacity="0.5"/><rect x="17.8" y="110.0" width="1.1" height="1" fill="#7a84b2" opacity="0.5"/><rect x="107.8" y="95.2" width="1.4" height="1" fill="#4b5478" opacity="0.5"/><rect x="231.3" y="98.8" width="2.7" height="1" fill="#6a7090" opacity="0.5"/><rect x="112.2" y="114.0" width="3.2" height="1" fill="#2c3020" opacity="0.5"/><rect x="90.4" y="100.7" width="1.1" height="1" fill="#3c4560" opacity="0.5"/><rect x="112.2" y="123.0" width="1.9" height="1" fill="#2c3020" opacity="0.5"/><rect x="31.6" y="95.0" width="1.5" height="1" fill="#4b5478" opacity="0.5"/><rect x="219.4" y="94.9" width="2.7" height="1" fill="#3c4030" opacity="0.5"/><rect x="59.6" y="105.3" width="1.7" height="1" fill="#a0a6c8" opacity="0.5"/><rect x="130.9" y="109.7" width="2.5" height="1" fill="#5a6270" opacity="0.5"/><rect x="204.8" y="84.9" width="2.2" height="1" fill="#5a6270" opacity="0.5"/><rect x="224.6" y="92.3" width="1.1" height="1" fill="#2c3020" opacity="0.5"/><rect x="184.2" y="94.6" width="2.1" height="1" fill="#4b5478" opacity="0.5"/><rect x="92.3" y="115.7" width="3.4" height="1" fill="#3c4560" opacity="0.5"/><rect x="53.7" y="99.3" width="1.2" height="1" fill="#4b5478" opacity="0.5"/><rect x="22.0" y="86.7" width="2.5" height="1" fill="#a0a6c8" opacity="0.5"/><rect x="227.2" y="92.8" width="3.5" height="1" fill="#3c4030" opacity="0.5"/><rect x="169.2" y="121.4" width="1.4" height="1" fill="#2c3020" opacity="0.5"/><rect x="18.3" y="95.5" width="2.1" height="1" fill="#4b5478" opacity="0.5"/><rect x="231.5" y="124.4" width="3.2" height="1" fill="#3c4030" opacity="0.5"/><rect x="208.6" y="117.4" width="2.4" height="1" fill="#5a6270" opacity="0.5"/><rect x="82.7" y="118.9" width="1.8" height="1" fill="#a0a6c8" opacity="0.5"/><rect x="126.0" y="106.5" width="1.9" height="1" fill="#4b5478" opacity="0.5"/><rect x="0.8" y="100.6" width="1.4" height="1" fill="#7a84b2" opacity="0.5"/><rect x="154.1" y="89.4" width="1.2" height="1" fill="#5a6270" opacity="0.5"/><rect x="231.1" y="91.2" width="2.5" height="1" fill="#3c4030" opacity="0.5"/><rect x="95.5" y="115.0" width="1.7" height="1" fill="#7a84b2" opacity="0.5"/><rect x="187.2" y="115.0" width="2.8" height="1" fill="#2c3020" opacity="0.5"/><rect x="73.6" y="108.6" width="2.7" height="1" fill="#7a84b2" opacity="0.5"/><rect x="66.7" y="110.7" width="2.2" height="1" fill="#3c4560" opacity="0.5"/><rect x="220.4" y="96.9" width="1.4" height="1" fill="#2c3020" opacity="0.5"/><rect x="47.1" y="100.4" width="2.7" height="1" fill="#3c4560" opacity="0.5"/><rect x="28.6" y="105.9" width="1.8" height="1" fill="#3c4560" opacity="0.5"/><rect x="39.1" y="114.8" width="1.6" height="1" fill="#4b5478" opacity="0.5"/><rect x="223.9" y="103.4" width="1.5" height="1" fill="#2c3020" opacity="0.5"/><rect x="143.9" y="91.6" width="1.7" height="1" fill="#6a7090" opacity="0.5"/><rect x="75.1" y="93.6" width="1.5" height="1" fill="#8c94bc" opacity="0.5"/><rect x="170.9" y="117.4" width="2.9" height="1" fill="#2c3020" opacity="0.5"/><rect x="229.5" y="122.2" width="2.4" height="1" fill="#6a7090" opacity="0.5"/><rect x="78.1" y="93.4" width="2.0" height="1" fill="#3c4560" opacity="0.5"/><rect x="47.3" y="115.1" width="1.9" height="1" fill="#4b5478" opacity="0.5"/><rect x="164.0" y="86.8" width="3.4" height="1" fill="#6a7090" opacity="0.5"/><rect x="28.1" y="112.3" width="1.4" height="1" fill="#4b5478" opacity="0.5"/><rect x="150.1" y="91.8" width="2.8" height="1" fill="#3c4030" opacity="0.5"/><rect x="157.4" y="96.6" width="1.5" height="1" fill="#2c3020" opacity="0.5"/><rect x="5.2" y="100.0" width="3.1" height="1" fill="#7a84b2" opacity="0.5"/><rect x="220.4" y="110.6" width="1.9" height="1" fill="#5a6270" opacity="0.5"/><rect x="183.8" y="122.8" width="1.7" height="1" fill="#2c3020" opacity="0.5"/><rect x="165.9" y="110.0" width="1.3" height="1" fill="#5a6270" opacity="0.5"/><rect x="234.7" y="98.6" width="2.7" height="1" fill="#2c3020" opacity="0.5"/><rect x="157.7" y="120.8" width="2.1" height="1" fill="#6a7090" opacity="0.5"/><rect x="183.5" y="111.3" width="3.3" height="1" fill="#5a6270" opacity="0.5"/><rect x="9.6" y="103.3" width="2.0" height="1" fill="#8c94bc" opacity="0.5"/><rect x="167.7" y="90.9" width="2.8" height="1" fill="#6a7090" opacity="0.5"/><rect x="173.1" y="106.5" width="1.4" height="1" fill="#4b5478" opacity="0.5"/><rect x="237.1" y="124.4" width="1.4" height="1" fill="#3c4030" opacity="0.5"/><rect x="187.1" y="96.6" width="2.9" height="1" fill="#3c4030" opacity="0.5"/><rect x="237.7" y="117.1" width="3.0" height="1" fill="#5a6270" opacity="0.5"/><rect x="239.2" y="86.7" width="2.1" height="1" fill="#3c4030" opacity="0.5"/><rect x="172.2" y="97.0" width="3.1" height="1" fill="#2c3020" opacity="0.5"/><rect x="68.6" y="85.4" width="3.0" height="1" fill="#3c4560" opacity="0.5"/><rect x="145.1" y="96.1" width="3.2" height="1" fill="#4b5478" opacity="0.5"/><rect x="235.6" y="114.6" width="2.5" height="1" fill="#3c4030" opacity="0.5"/><rect x="156.5" y="122.4" width="1.3" height="1" fill="#5a6270" opacity="0.5"/><rect x="29.8" y="113.1" width="1.8" height="1" fill="#a0a6c8" opacity="0.5"/><rect x="158.5" y="101.0" width="3.2" height="1" fill="#5a6270" opacity="0.5"/><rect x="187.9" y="105.6" width="3.3" height="1" fill="#4b5478" opacity="0.5"/><rect x="150.8" y="120.4" width="1.3" height="1" fill="#2c3020" opacity="0.5"/><rect x="134.9" y="116.5" width="1.5" height="1" fill="#2c3020" opacity="0.5"/><rect x="19.9" y="122.2" width="1.1" height="1" fill="#a0a6c8" opacity="0.5"/><rect x="204.6" y="112.5" width="1.6" height="1" fill="#5a6270" opacity="0.5"/><rect x="69.7" y="110.9" width="1.6" height="1" fill="#7a84b2" opacity="0.5"/><rect x="61.4" y="104.9" width="2.4" height="1" fill="#7a84b2" opacity="0.5"/><rect x="221.6" y="124.9" width="2.4" height="1" fill="#5a6270" opacity="0.5"/><rect x="145.7" y="87.6" width="2.7" height="1" fill="#6a7090" opacity="0.5"/><rect x="23.1" y="110.1" width="1.6" height="1" fill="#4b5478" opacity="0.5"/><rect x="245.6" y="111.4" width="1.2" height="1" fill="#2c3020" opacity="0.5"/><rect x="40.4" y="86.9" width="2.1" height="1" fill="#8c94bc" opacity="0.5"/><rect x="43.6" y="94.0" width="3.2" height="1" fill="#8c94bc" opacity="0.5"/><rect x="92.3" y="107.2" width="1.3" height="1" fill="#4b5478" opacity="0.5"/><rect x="137.9" y="122.9" width="3.4" height="1" fill="#4b5478" opacity="0.5"/><rect x="26.7" y="111.1" width="2.4" height="1" fill="#4b5478" opacity="0.5"/><rect x="15.9" y="90.2" width="2.9" height="1" fill="#4b5478" opacity="0.5"/><rect x="32.6" y="88.1" width="2.1" height="1" fill="#8c94bc" opacity="0.5"/><rect x="6.1" y="85.0" width="1.9" height="1" fill="#4b5478" opacity="0.5"/><rect x="166.7" y="117.1" width="2.5" height="1" fill="#4b5478" opacity="0.5"/><rect x="29.0" y="123.8" width="3.2" height="1" fill="#3c4560" opacity="0.5"/><rect x="108.2" y="108.9" width="3.1" height="1" fill="#7a84b2" opacity="0.5"/><rect x="60.5" y="112.0" width="3.0" height="1" fill="#7a84b2" opacity="0.5"/><rect x="169.8" y="110.4" width="2.2" height="1" fill="#4b5478" opacity="0.5"/><rect x="213.0" y="91.7" width="1.7" height="1" fill="#5a6270" opacity="0.5"/><rect x="166.2" y="124.6" width="1.9" height="1" fill="#6a7090" opacity="0.5"/><rect x="78.7" y="111.9" width="2.4" height="1" fill="#3c4560" opacity="0.5"/><rect x="184.5" y="106.3" width="2.1" height="1" fill="#4b5478" opacity="0.5"/><rect x="97.1" y="102.5" width="3.4" height="1" fill="#a0a6c8" opacity="0.5"/><rect x="139.6" y="104.2" width="2.7" height="1" fill="#4b5478" opacity="0.5"/><rect x="90.7" y="89.4" width="1.4" height="1" fill="#4b5478" opacity="0.5"/><rect x="115.8" y="113.1" width="2.4" height="1" fill="#5a6270" opacity="0.5"/><rect x="107.9" y="99.0" width="1.0" height="1" fill="#3c4560" opacity="0.5"/><rect x="15.5" y="99.3" width="2.0" height="1" fill="#a0a6c8" opacity="0.5"/><rect x="3.9" y="94.0" width="2.6" height="1" fill="#4b5478" opacity="0.5"/><rect x="29.4" y="116.4" width="2.5" height="1" fill="#8c94bc" opacity="0.5"/><rect x="209.9" y="119.0" width="3.2" height="1" fill="#2c3020" opacity="0.5"/><rect x="60.5" y="88.6" width="3.2" height="1" fill="#7a84b2" opacity="0.5"/><rect x="124.1" y="108.4" width="1.4" height="1" fill="#3c4030" opacity="0.5"/><rect x="144.6" y="110.9" width="2.3" height="1" fill="#5a6270" opacity="0.5"/><rect x="199.7" y="122.7" width="1.3" height="1" fill="#4b5478" opacity="0.5"/><rect x="59.3" y="114.8" width="1.3" height="1" fill="#8c94bc" opacity="0.5"/><rect x="243.0" y="113.4" width="2.0" height="1" fill="#5a6270" opacity="0.5"/><rect x="157.6" y="88.8" width="3.5" height="1" fill="#3c4030" opacity="0.5"/><rect x="205.4" y="91.2" width="2.2" height="1" fill="#3c4030" opacity="0.5"/><rect x="167.1" y="104.7" width="2.4" height="1" fill="#4b5478" opacity="0.5"/><rect x="117.2" y="99.1" width="1.1" height="1" fill="#6a7090" opacity="0.5"/><rect x="17.6" y="91.3" width="3.2" height="1" fill="#7a84b2" opacity="0.5"/><rect x="208.1" y="119.6" width="1.2" height="1" fill="#3c4030" opacity="0.5"/><rect x="98.4" y="87.2" width="2.4" height="1" fill="#a0a6c8" opacity="0.5"/><rect x="52.0" y="117.8" width="2.2" height="1" fill="#8c94bc" opacity="0.5"/><rect x="105.2" y="117.8" width="1.5" height="1" fill="#7a84b2" opacity="0.5"/><rect x="39.5" y="102.2" width="1.4" height="1" fill="#3c4560" opacity="0.5"/><rect x="87.8" y="106.9" width="2.1" height="1" fill="#7a84b2" opacity="0.5"/><rect x="226.7" y="96.2" width="3.0" height="1" fill="#5a6270" opacity="0.5"/><rect x="68.5" y="116.0" width="1.7" height="1" fill="#8c94bc" opacity="0.5"/><rect x="84.2" y="102.4" width="2.1" height="1" fill="#4b5478" opacity="0.5"/><rect x="23.3" y="98.1" width="1.6" height="1" fill="#a0a6c8" opacity="0.5"/><rect x="193.6" y="114.4" width="3.2" height="1" fill="#6a7090" opacity="0.5"/><rect x="78.3" y="102.7" width="2.6" height="1" fill="#7a84b2" opacity="0.5"/><rect x="139.7" y="93.1" width="1.7" height="1" fill="#2c3020" opacity="0.5"/><rect x="5.9" y="88.9" width="1.9" height="1" fill="#4b5478" opacity="0.5"/><rect x="69.8" y="112.0" width="1.5" height="1" fill="#4b5478" opacity="0.5"/><rect x="158.8" y="91.9" width="1.9" height="1" fill="#2c3020" opacity="0.5"/><rect x="171.3" y="105.9" width="1.8" height="1" fill="#4b5478" opacity="0.5"/><rect x="157.0" y="88.5" width="1.8" height="1" fill="#4b5478" opacity="0.5"/><rect x="174.1" y="111.0" width="2.1" height="1" fill="#6a7090" opacity="0.5"/><rect x="211.3" y="113.1" width="2.2" height="1" fill="#5a6270" opacity="0.5"/><rect x="45.8" y="96.5" width="3.3" height="1" fill="#a0a6c8" opacity="0.5"/><rect x="50.3" y="100.2" width="1.2" height="1" fill="#a0a6c8" opacity="0.5"/><rect x="207.9" y="118.7" width="3.2" height="1" fill="#6a7090" opacity="0.5"/><rect x="113.6" y="89.6" width="2.4" height="1" fill="#2c3020" opacity="0.5"/><rect x="113.1" y="122.4" width="1.9" height="1" fill="#2c3020" opacity="0.5"/><rect x="66.8" y="122.9" width="1.5" height="1" fill="#8c94bc" opacity="0.5"/><rect x="51.7" y="103.5" width="3.4" height="1" fill="#8c94bc" opacity="0.5"/><rect x="125.1" y="91.6" width="1.6" height="1" fill="#4b5478" opacity="0.5"/><rect x="8.5" y="87.7" width="2.3" height="1" fill="#8c94bc" opacity="0.5"/><rect x="242.9" y="98.6" width="1.7" height="1" fill="#3c4030" opacity="0.5"/><rect x="106.8" y="114.5" width="2.3" height="1" fill="#4b5478" opacity="0.5"/><rect x="180.6" y="95.3" width="3.3" height="1" fill="#4b5478" opacity="0.5"/><rect x="56.7" y="123.2" width="1.1" height="1" fill="#8c94bc" opacity="0.5"/><rect x="165.6" y="103.2" width="3.3" height="1" fill="#5a6270" opacity="0.5"/><rect x="97.3" y="101.9" width="1.4" height="1" fill="#a0a6c8" opacity="0.5"/><rect x="112.3" y="103.7" width="1.8" height="1" fill="#6a7090" opacity="0.5"/><rect x="14.2" y="117.4" width="1.3" height="1" fill="#8c94bc" opacity="0.5"/><rect x="189.3" y="116.2" width="3.3" height="1" fill="#6a7090" opacity="0.5"/><rect x="61.5" y="84.9" width="1.6" height="1" fill="#a0a6c8" opacity="0.5"/><rect x="129.8" y="94.8" width="1.3" height="1" fill="#5a6270" opacity="0.5"/><rect x="59.1" y="113.8" width="2.9" height="1" fill="#3c4560" opacity="0.5"/><rect x="60.0" y="109.2" width="2.3" height="1" fill="#7a84b2" opacity="0.5"/><rect x="52.5" y="122.6" width="2.1" height="1" fill="#4b5478" opacity="0.5"/><rect x="106.9" y="117.5" width="3.4" height="1" fill="#8c94bc" opacity="0.5"/><rect x="0.4" y="93.3" width="1.6" height="1" fill="#8c94bc" opacity="0.5"/><rect x="197.2" y="104.6" width="2.1" height="1" fill="#4b5478" opacity="0.5"/><rect x="190.3" y="93.6" width="1.1" height="1" fill="#6a7090" opacity="0.5"/><rect x="0.2" y="86.7" width="1.1" height="1" fill="#4b5478" opacity="0.5"/><rect x="239.3" y="107.0" width="3.0" height="1" fill="#3c4030" opacity="0.5"/><rect x="67.4" y="101.0" width="1.1" height="1" fill="#3c4560" opacity="0.5"/><rect x="19.2" y="103.4" width="2.3" height="1" fill="#a0a6c8" opacity="0.5"/><rect x="198.6" y="117.5" width="2.8" height="1" fill="#5a6270" opacity="0.5"/><rect x="78.9" y="123.1" width="2.7" height="1" fill="#7a84b2" opacity="0.5"/><rect x="32.6" y="121.5" width="1.8" height="1" fill="#8c94bc" opacity="0.5"/><rect x="170.4" y="97.5" width="1.8" height="1" fill="#5a6270" opacity="0.5"/><rect x="115.9" y="108.8" width="3.4" height="1" fill="#3c4030" opacity="0.5"/><rect x="38.3" y="112.6" width="2.7" height="1" fill="#7a84b2" opacity="0.5"/><rect x="52.2" y="111.0" width="2.8" height="1" fill="#7a84b2" opacity="0.5"/><rect x="45.0" y="85.7" width="2.7" height="1" fill="#8c94bc" opacity="0.5"/><rect x="30.5" y="89.3" width="1.9" height="1" fill="#4b5478" opacity="0.5"/><rect x="164.4" y="99.7" width="3.3" height="1" fill="#6a7090" opacity="0.5"/><rect x="159.9" y="123.9" width="3.5" height="1" fill="#5a6270" opacity="0.5"/><rect x="114.6" y="121.9" width="3.1" height="1" fill="#5a6270" opacity="0.5"/><rect x="187.3" y="90.1" width="3.4" height="1" fill="#4b5478" opacity="0.5"/><rect x="153.2" y="88.4" width="3.2" height="1" fill="#4b5478" opacity="0.5"/><rect x="94.5" y="117.2" width="3.5" height="1" fill="#3c4560" opacity="0.5"/><rect x="216.9" y="117.7" width="1.1" height="1" fill="#4b5478" opacity="0.5"/><rect x="5.7" y="85.3" width="3.1" height="1" fill="#8c94bc" opacity="0.5"/><rect x="210.4" y="101.4" width="3.0" height="1" fill="#4b5478" opacity="0.5"/><rect x="210.2" y="104.9" width="2.4" height="1" fill="#6a7090" opacity="0.5"/><rect x="122.8" y="97.0" width="2.9" height="1" fill="#4b5478" opacity="0.5"/><rect x="144.5" y="90.9" width="1.1" height="1" fill="#2c3020" opacity="0.5"/><rect x="69.8" y="101.1" width="1.9" height="1" fill="#4b5478" opacity="0.5"/><rect x="145.2" y="98.0" width="1.8" height="1" fill="#3c4030" opacity="0.5"/><rect x="105.5" y="114.3" width="2.2" height="1" fill="#a0a6c8" opacity="0.5"/><rect x="34.9" y="111.3" width="3.4" height="1" fill="#a0a6c8" opacity="0.5"/><rect x="1.5" y="104.0" width="2.7" height="1" fill="#4b5478" opacity="0.5"/><rect x="103.7" y="102.6" width="1.2" height="1" fill="#4b5478" opacity="0.5"/><rect x="70.8" y="103.2" width="3.0" height="1" fill="#7a84b2" opacity="0.5"/><rect x="245.6" y="85.9" width="1.3" height="1" fill="#6a7090" opacity="0.5"/><rect x="202.7" y="84.0" width="1.8" height="1" fill="#4b5478" opacity="0.5"/><rect x="14.1" y="96.2" width="2.1" height="1" fill="#3c4560" opacity="0.5"/><rect x="133.0" y="120.5" width="3.2" height="1" fill="#4b5478" opacity="0.5"/><rect x="242.1" y="113.6" width="1.3" height="1" fill="#5a6270" opacity="0.5"/><rect x="107.0" y="107.3" width="1.6" height="1" fill="#7a84b2" opacity="0.5"/><rect x="43.7" y="85.1" width="1.0" height="1" fill="#4b5478" opacity="0.5"/><rect x="39.2" y="109.1" width="1.8" height="1" fill="#4b5478" opacity="0.5"/><rect x="200.1" y="118.2" width="1.3" height="1" fill="#2c3020" opacity="0.5"/><rect x="68.4" y="85.2" width="2.9" height="1" fill="#3c4560" opacity="0.5"/><rect x="176.1" y="112.9" width="1.2" height="1" fill="#2c3020" opacity="0.5"/><rect x="76.4" y="97.2" width="3.4" height="1" fill="#7a84b2" opacity="0.5"/><rect x="194.3" y="103.4" width="1.7" height="1" fill="#4b5478" opacity="0.5"/><rect x="98.4" y="115.0" width="2.4" height="1" fill="#8c94bc" opacity="0.5"/><rect x="67.8" y="101.3" width="1.7" height="1" fill="#3c4560" opacity="0.5"/><rect x="242.8" y="94.2" width="2.9" height="1" fill="#4b5478" opacity="0.5"/><rect x="195.8" y="107.2" width="3.4" height="1" fill="#2c3020" opacity="0.5"/><rect x="73.2" y="89.6" width="3.0" height="1" fill="#3c4560" opacity="0.5"/><rect x="127.7" y="86.4" width="3.2" height="1" fill="#4b5478" opacity="0.5"/><rect x="178.9" y="121.5" width="1.9" height="1" fill="#5a6270" opacity="0.5"/><rect x="170.5" y="100.7" width="2.5" height="1" fill="#2c3020" opacity="0.5"/><rect x="101.9" y="97.9" width="1.3" height="1" fill="#4b5478" opacity="0.5"/><rect x="216.7" y="99.8" width="2.9" height="1" fill="#2c3020" opacity="0.5"/><rect x="159.0" y="93.5" width="2.3" height="1" fill="#3c4030" opacity="0.5"/><rect x="53.1" y="104.3" width="2.2" height="1" fill="#7a84b2" opacity="0.5"/><rect x="185.0" y="107.6" width="1.7" height="1" fill="#2c3020" opacity="0.5"/><rect x="127.7" y="103.5" width="3.4" height="1" fill="#3c4030" opacity="0.5"/><rect x="231.4" y="101.5" width="1.4" height="1" fill="#5a6270" opacity="0.5"/><path d="M115.1 125 L116.8 107.1" stroke="#8a8268" stroke-width="0.8" opacity="0.55"/><path d="M126.4 125 L125.3 99.4" stroke="#8a8268" stroke-width="0.8" opacity="0.55"/><path d="M181.5 125 L182.6 108.9" stroke="#8a8268" stroke-width="0.8" opacity="0.55"/><path d="M124.0 125 L123.1 100.3" stroke="#8a8268" stroke-width="0.8" opacity="0.55"/><path d="M193.1 125 L193.4 99.7" stroke="#8a8268" stroke-width="0.8" opacity="0.55"/><path d="M146.5 125 L148.5 108.0" stroke="#8a8268" stroke-width="0.8" opacity="0.55"/><path d="M176.2 125 L176.1 102.7" stroke="#8a8268" stroke-width="0.8" opacity="0.55"/><path d="M159.8 125 L158.6 99.8" stroke="#8a8268" stroke-width="0.8" opacity="0.55"/><path d="M152.8 125 L152.3 100.7" stroke="#8a8268" stroke-width="0.8" opacity="0.55"/><path d="M182.0 125 L181.3 106.0" stroke="#8a8268" stroke-width="0.8" opacity="0.55"/><path d="M171.7 125 L173.2 100.2" stroke="#8a8268" stroke-width="0.8" opacity="0.55"/><path d="M102.8 125 L104.2 107.6" stroke="#8a8268" stroke-width="0.8" opacity="0.55"/><path d="M132.0 125 L133.2 102.1" stroke="#8a8268" stroke-width="0.8" opacity="0.55"/><path d="M122.4 125 L120.7 107.3" stroke="#8a8268" stroke-width="0.8" opacity="0.55"/><path d="M184.5 125 L183.8 105.6" stroke="#8a8268" stroke-width="0.8" opacity="0.55"/><path d="M141.6 125 L140.2 108.4" stroke="#8a8268" stroke-width="0.8" opacity="0.55"/><path d="M135.9 125 L134.0 108.6" stroke="#8a8268" stroke-width="0.8" opacity="0.55"/><path d="M185.3 125 L185.1 101.6" stroke="#8a8268" stroke-width="0.8" opacity="0.55"/><path d="M129.6 125 L129.8 102.4" stroke="#8a8268" stroke-width="0.8" opacity="0.55"/><path d="M122.5 125 L122.1 106.7" stroke="#8a8268" stroke-width="0.8" opacity="0.55"/><path d="M163.1 125 L164.2 100.9" stroke="#8a8268" stroke-width="0.8" opacity="0.55"/><path d="M123.5 125 L123.8 105.5" stroke="#8a8268" stroke-width="0.8" opacity="0.55"/><path d="M168.1 125 L167.3 105.5" stroke="#8a8268" stroke-width="0.8" opacity="0.55"/><path d="M171.1 125 L171.5 100.6" stroke="#8a8268" stroke-width="0.8" opacity="0.55"/><g filter="url(#fc)"><ellipse cx="177.0" cy="120.1" rx="3.3" ry="3.3" fill="#eef0d8" opacity="0.85"/><ellipse cx="230.6" cy="123.0" rx="2.6" ry="2.6" fill="#eef0d8" opacity="0.85"/><ellipse cx="242.0" cy="98.6" rx="2.1" ry="2.1" fill="#8fae3a" opacity="0.85"/><ellipse cx="191.7" cy="117.3" rx="2.6" ry="2.6" fill="#c6d86c" opacity="0.85"/><ellipse cx="203.1" cy="123.5" rx="3.0" ry="3.0" fill="#7a9a30" opacity="0.85"/><ellipse cx="189.4" cy="122.7" rx="2.8" ry="2.8" fill="#a9c24e" opacity="0.85"/><ellipse cx="207.8" cy="118.2" rx="2.1" ry="2.1" fill="#a9c24e" opacity="0.85"/><ellipse cx="230.3" cy="102.3" rx="4.0" ry="4.0" fill="#c6d86c" opacity="0.85"/><ellipse cx="237.8" cy="117.8" rx="2.6" ry="2.6" fill="#a9c24e" opacity="0.85"/><ellipse cx="227.2" cy="116.6" rx="2.3" ry="2.3" fill="#c6d86c" opacity="0.85"/><ellipse cx="204.5" cy="123.5" rx="4.2" ry="4.2" fill="#c6d86c" opacity="0.85"/><ellipse cx="199.4" cy="114.2" rx="1.8" ry="1.8" fill="#c6d86c" opacity="0.85"/><ellipse cx="181.6" cy="121.2" rx="4.0" ry="4.0" fill="#d8e4a0" opacity="0.85"/><ellipse cx="233.8" cy="121.0" rx="3.6" ry="3.6" fill="#eef0d8" opacity="0.85"/><ellipse cx="235.3" cy="106.1" rx="2.6" ry="2.6" fill="#d8e4a0" opacity="0.85"/><ellipse cx="234.8" cy="98.2" rx="4.2" ry="4.2" fill="#b4cc58" opacity="0.85"/><ellipse cx="236.9" cy="107.3" rx="4.3" ry="4.3" fill="#7a9a30" opacity="0.85"/><ellipse cx="227.6" cy="101.8" rx="2.1" ry="2.1" fill="#8fae3a" opacity="0.85"/><ellipse cx="241.6" cy="97.6" rx="2.6" ry="2.6" fill="#8fae3a" opacity="0.85"/><ellipse cx="214.1" cy="114.3" rx="2.0" ry="2.0" fill="#c6d86c" opacity="0.85"/><ellipse cx="191.8" cy="116.8" rx="4.1" ry="4.1" fill="#7a9a30" opacity="0.85"/><ellipse cx="236.6" cy="101.8" rx="3.7" ry="3.7" fill="#eef0d8" opacity="0.85"/><ellipse cx="189.1" cy="117.9" rx="3.1" ry="3.1" fill="#a9c24e" opacity="0.85"/><ellipse cx="219.6" cy="112.6" rx="3.7" ry="3.7" fill="#8fae3a" opacity="0.85"/><ellipse cx="222.1" cy="105.6" rx="3.3" ry="3.3" fill="#a9c24e" opacity="0.85"/><ellipse cx="191.6" cy="116.6" rx="3.4" ry="3.4" fill="#8fae3a" opacity="0.85"/><ellipse cx="239.0" cy="103.1" rx="3.3" ry="3.3" fill="#c6d86c" opacity="0.85"/><ellipse cx="207.0" cy="115.3" rx="4.2" ry="4.2" fill="#c6d86c" opacity="0.85"/><ellipse cx="243.6" cy="101.7" rx="2.1" ry="2.1" fill="#c6d86c" opacity="0.85"/><ellipse cx="198.5" cy="124.6" rx="2.7" ry="2.7" fill="#c6d86c" opacity="0.85"/><ellipse cx="193.1" cy="122.3" rx="3.1" ry="3.1" fill="#8fae3a" opacity="0.85"/><ellipse cx="220.4" cy="123.9" rx="2.9" ry="2.9" fill="#b4cc58" opacity="0.85"/><ellipse cx="231.1" cy="111.2" rx="2.9" ry="2.9" fill="#8fae3a" opacity="0.85"/><ellipse cx="230.8" cy="123.0" rx="3.3" ry="3.3" fill="#b4cc58" opacity="0.85"/><ellipse cx="231.4" cy="107.1" rx="3.6" ry="3.6" fill="#a9c24e" opacity="0.85"/><ellipse cx="244.9" cy="120.7" rx="2.3" ry="2.3" fill="#b4cc58" opacity="0.85"/><ellipse cx="221.2" cy="104.1" rx="2.8" ry="2.8" fill="#eef0d8" opacity="0.85"/><ellipse cx="238.2" cy="120.1" rx="2.5" ry="2.5" fill="#eef0d8" opacity="0.85"/><ellipse cx="244.8" cy="122.0" rx="3.6" ry="3.6" fill="#7a9a30" opacity="0.85"/><ellipse cx="244.2" cy="116.0" rx="1.9" ry="1.9" fill="#d8e4a0" opacity="0.85"/><ellipse cx="244.7" cy="111.0" rx="2.8" ry="2.8" fill="#c6d86c" opacity="0.85"/><ellipse cx="198.2" cy="116.4" rx="4.3" ry="4.3" fill="#c6d86c" opacity="0.85"/><ellipse cx="213.4" cy="116.0" rx="1.8" ry="1.8" fill="#7a9a30" opacity="0.85"/><ellipse cx="194.9" cy="120.5" rx="1.8" ry="1.8" fill="#8fae3a" opacity="0.85"/><ellipse cx="226.2" cy="118.1" rx="2.9" ry="2.9" fill="#c6d86c" opacity="0.85"/><ellipse cx="213.0" cy="106.0" rx="1.9" ry="1.9" fill="#8fae3a" opacity="0.85"/><ellipse cx="230.4" cy="102.0" rx="4.2" ry="4.2" fill="#b4cc58" opacity="0.85"/><ellipse cx="212.4" cy="112.1" rx="4.1" ry="4.1" fill="#d8e4a0" opacity="0.85"/><ellipse cx="236.6" cy="111.3" rx="3.6" ry="3.6" fill="#b4cc58" opacity="0.85"/><ellipse cx="232.3" cy="99.0" rx="4.1" ry="4.1" fill="#b4cc58" opacity="0.85"/><ellipse cx="219.2" cy="105.4" rx="2.2" ry="2.2" fill="#c6d86c" opacity="0.85"/><ellipse cx="197.1" cy="115.8" rx="2.7" ry="2.7" fill="#8fae3a" opacity="0.85"/><ellipse cx="219.4" cy="123.7" rx="3.7" ry="3.7" fill="#eef0d8" opacity="0.85"/><ellipse cx="231.9" cy="110.6" rx="3.2" ry="3.2" fill="#a9c24e" opacity="0.85"/><ellipse cx="230.4" cy="103.5" rx="3.8" ry="3.8" fill="#7a9a30" opacity="0.85"/><ellipse cx="245.4" cy="99.0" rx="3.2" ry="3.2" fill="#a9c24e" opacity="0.85"/><ellipse cx="211.1" cy="115.3" rx="2.3" ry="2.3" fill="#eef0d8" opacity="0.85"/><ellipse cx="234.9" cy="115.8" rx="4.2" ry="4.2" fill="#b4cc58" opacity="0.85"/><ellipse cx="176.7" cy="119.9" rx="3.6" ry="3.6" fill="#b4cc58" opacity="0.85"/><ellipse cx="209.7" cy="107.3" rx="2.4" ry="2.4" fill="#d8e4a0" opacity="0.85"/><ellipse cx="181.9" cy="120.6" rx="2.2" ry="2.2" fill="#b4cc58" opacity="0.85"/><ellipse cx="223.9" cy="123.0" rx="2.0" ry="2.0" fill="#d8e4a0" opacity="0.85"/><ellipse cx="227.0" cy="120.3" rx="3.6" ry="3.6" fill="#d8e4a0" opacity="0.85"/><ellipse cx="197.7" cy="112.6" rx="4.1" ry="4.1" fill="#a9c24e" opacity="0.85"/><ellipse cx="204.6" cy="113.2" rx="3.9" ry="3.9" fill="#a9c24e" opacity="0.85"/><ellipse cx="238.3" cy="104.2" rx="4.1" ry="4.1" fill="#b4cc58" opacity="0.85"/><ellipse cx="233.0" cy="119.9" rx="2.8" ry="2.8" fill="#d8e4a0" opacity="0.85"/><ellipse cx="222.2" cy="124.9" rx="2.3" ry="2.3" fill="#8fae3a" opacity="0.85"/><ellipse cx="237.4" cy="97.3" rx="3.1" ry="3.1" fill="#b4cc58" opacity="0.85"/><ellipse cx="211.1" cy="120.0" rx="3.3" ry="3.3" fill="#7a9a30" opacity="0.85"/><ellipse cx="195.9" cy="113.0" rx="3.9" ry="3.9" fill="#d8e4a0" opacity="0.85"/><ellipse cx="225.7" cy="114.2" rx="3.3" ry="3.3" fill="#8fae3a" opacity="0.85"/><ellipse cx="234.0" cy="117.6" rx="3.2" ry="3.2" fill="#c6d86c" opacity="0.85"/><ellipse cx="238.7" cy="115.6" rx="3.3" ry="3.3" fill="#a9c24e" opacity="0.85"/><ellipse cx="233.5" cy="123.5" rx="3.6" ry="3.6" fill="#8fae3a" opacity="0.85"/><ellipse cx="204.1" cy="123.0" rx="2.2" ry="2.2" fill="#c6d86c" opacity="0.85"/><ellipse cx="201.0" cy="112.9" rx="2.5" ry="2.5" fill="#8fae3a" opacity="0.85"/><ellipse cx="192.8" cy="118.9" rx="3.4" ry="3.4" fill="#8fae3a" opacity="0.85"/><ellipse cx="180.3" cy="122.8" rx="4.1" ry="4.1" fill="#a9c24e" opacity="0.85"/><ellipse cx="225.1" cy="124.9" rx="3.7" ry="3.7" fill="#8fae3a" opacity="0.85"/><ellipse cx="242.0" cy="119.5" rx="4.1" ry="4.1" fill="#d8e4a0" opacity="0.85"/><ellipse cx="236.8" cy="103.7" rx="1.9" ry="1.9" fill="#c6d86c" opacity="0.85"/><ellipse cx="238.8" cy="105.1" rx="2.4" ry="2.4" fill="#d8e4a0" opacity="0.85"/><ellipse cx="241.5" cy="108.6" rx="1.8" ry="1.8" fill="#a9c24e" opacity="0.85"/><ellipse cx="214.2" cy="118.9" rx="2.9" ry="2.9" fill="#d8e4a0" opacity="0.85"/><ellipse cx="236.8" cy="110.3" rx="3.1" ry="3.1" fill="#8fae3a" opacity="0.85"/><ellipse cx="243.1" cy="113.3" rx="2.4" ry="2.4" fill="#a9c24e" opacity="0.85"/><ellipse cx="235.6" cy="112.7" rx="3.1" ry="3.1" fill="#7a9a30" opacity="0.85"/></g></svg></div><div class="badge">В продаже</div>
<div class="r1 lt g">BE ECO DESIGN</div><div class="r1 rt">Новорижское шоссе <b>97 км.</b></div>
<div class="r2 lt d">Участок № 94</div><div class="r2 rt">Волоколамское шоссе <b>97 км.</b></div></div>
</div>
<div id="scroll" class="a"></div>
<svg class="a" style="left:1263px;top:61px" width="17" height="923">
  <path d="M4.5 11 L8.5 6.6 L12.5 11 Z" fill="#a3a3a3"/>
  <rect x="2.5" y="17.5" width="12" height="609" fill="#c1c1c1" stroke="#a8a8a8" stroke-width="1"/>
  <path d="M4.5 911.5 L8.5 916 L12.5 911.5 Z" fill="#505050"/>
</svg>
<div id="taskbar" class="a"></div>
<svg class="a" style="left:0;top:984px" width="1280" height="40">
  <defs>
    <radialGradient id="ieg" cx="0.45" cy="0.4" r="0.6"><stop offset="0" stop-color="#b6f0ff"/><stop offset="0.55" stop-color="#3fc0f2"/><stop offset="1" stop-color="#1686d2"/></radialGradient>
    <linearGradient id="ring" x1="0" y1="1" x2="1" y2="0"><stop offset="0" stop-color="#e9a400"/><stop offset="0.5" stop-color="#ffd21c"/><stop offset="1" stop-color="#f4b400"/></linearGradient>
    <linearGradient id="fold" x1="0" y1="0" x2="0" y2="1"><stop offset="0" stop-color="#fbeaa8"/><stop offset="1" stop-color="#ecc865"/></linearGradient>
    <linearGradient id="cmdg" x1="0" y1="0" x2="1" y2="1"><stop offset="0" stop-color="#3a3a3a"/><stop offset="0.45" stop-color="#000"/></linearGradient>
  </defs>
  <!-- overlay -->
  <rect x="162" y="0" width="960" height="22" fill="#869bad"/>
  <rect x="162" y="13.5" width="960" height="8.5" fill="#8399a9"/>
  <rect x="162" y="0" width="960" height="1" fill="#6f8597"/>
  <rect x="170" y="12" width="944" height="1" fill="#8ea3b4"/>
  <rect x="170" y="13" width="944" height="1" fill="#6b8194"/>
  <rect x="170" y="0" width="1" height="13" fill="#7a90a2"/>
  <rect x="1113" y="0" width="1" height="13" fill="#7a90a2"/>
  <path d="M180 2 L177 5 L180 8" fill="none" stroke="#778799" stroke-width="1.2"/>
  <path d="M1084 2 L1087 5 L1084 8" fill="none" stroke="#9eacba" stroke-width="1.2"/>
  <g fill="#75869a"><rect x="1108" y="3" width="1.2" height="1.2"/><rect x="1105" y="6" width="1.2" height="1.2"/><rect x="1108" y="6" width="1.2" height="1.2"/><rect x="1102" y="9" width="1.2" height="1.2"/><rect x="1105" y="9" width="1.2" height="1.2"/><rect x="1108" y="9" width="1.2" height="1.2"/></g>
  <!-- windows logo -->
  <g fill="#fff">
    <path d="M12 9.8 L23 8.4 L23 18.6 L12 18.6 Z"/>
    <path d="M24 8.2 L38.3 6.6 L38.3 18.6 L24 18.6 Z"/>
    <path d="M12 20 L23 20 L23 30.3 L12 29.3 Z"/>
    <path d="M24 20 L38.3 20 L38.3 32.3 L24 30.6 Z"/>
  </g>
  <!-- IE -->
  <ellipse cx="82" cy="20" rx="13.8" ry="13.6" fill="url(#ieg)"/>
  <path d="M76 17.8 C76.6 13.5 79 11.6 83.2 11.6 C87.4 11.6 89.6 13.8 89.8 17.8 Z" fill="#243a4c"/>
  <path d="M78.5 23 C79.5 25.8 81.5 26.8 84 26.8 C86.5 26.8 88.5 25.6 89.5 23.5 L96 23.5 L96 26 C94 29 91 31.5 84 31.5" fill="none"/>
  <path d="M79.5 22.6 L96.5 22.6 L96.5 25.6 L80.8 25.6 Z" fill="#243a4c"/>
  <path d="M68.5 32 C63 36 66 26 76 15.5 C86 6 96.5 1.5 95.8 7.5" fill="none" stroke="url(#ring)" stroke-width="2.7" stroke-linecap="round"/>
  <!-- explorer -->
  <path d="M127.5 11 L127.5 34 L158.5 34 L158.5 12 L145 12 L143.5 9.5 L130 9.5 Z" fill="url(#fold)" stroke="#c89b3c" stroke-width="0.8"/>
  <rect x="130.5" y="12" width="8" height="2.5" fill="#fff"/><rect x="130.5" y="12" width="2.5" height="2.5" fill="#20b020"/>
  <rect x="139" y="14" width="9" height="2.5" fill="#fff"/><rect x="139" y="14" width="2.5" height="2.5" fill="#e03020"/>
  <rect x="146" y="16" width="9" height="2.5" fill="#fff"/><rect x="146" y="16" width="2.5" height="2.5" fill="#2a90e0"/>
  <path d="M127.5 19 L158.5 19" stroke="#d8b460" stroke-width="0.8"/>
  <path d="M131.5 24 L154.5 24 L154.5 36 L149 36 L149 29.5 L137 29.5 L137 36 L131.5 36 Z" fill="#7ccaef" stroke="#3f9ad0" stroke-width="0.8"/>
  <!-- store -->
  <rect x="190" y="5" width="30" height="30" fill="#008a00"/>
  <path d="M194 12.8 L211.5 10.8 L211.5 30.8 L194 28.3 Z" fill="#fff"/>
  <path d="M211.5 10.8 L215 12.6 L215 29.6 L211.5 30.8 Z" fill="#e8e8e8"/>
  <path d="M198.5 12.3 C198.5 6.5 207 6 207.5 11.5" fill="none" stroke="#fff" stroke-width="1.4"/>
  <path d="M201.5 9 L203.5 12" stroke="#fff" stroke-width="1.2"/>
  <g fill="#008a00"><rect x="197.6" y="16.2" width="4.3" height="4.3"/><rect x="202.7" y="15.8" width="4.8" height="4.7"/><rect x="197.6" y="21.2" width="4.3" height="4.3"/><rect x="202.7" y="21.2" width="4.8" height="4.7"/></g>
  <!-- task buttons -->
  <rect x="238" y="0.5" width="58" height="21.5" fill="#a6b2bd"/>
  <rect x="238" y="22" width="58" height="17" fill="#85909b"/>
  <rect x="238.8" y="1.3" width="56.4" height="37.4" fill="none" stroke="#f4f6f8" stroke-width="1.6"/>
  <g>
    <rect x="300" y="0.5" width="58" height="21.5" fill="#8c9fb0"/><rect x="300" y="22" width="58" height="17" fill="#4c5e6e"/>
    <rect x="300.5" y="1" width="57" height="38" fill="none" stroke="#a7b3bf" stroke-width="1"/>
    <rect x="362" y="0.5" width="58" height="21.5" fill="#8c9fb0"/><rect x="362" y="22" width="58" height="17" fill="#4c5e6e"/>
    <rect x="362.5" y="1" width="57" height="38" fill="none" stroke="#a7b3bf" stroke-width="1"/>
    <rect x="424" y="0.5" width="58" height="21.5" fill="#8c9fb0"/><rect x="424" y="22" width="58" height="17" fill="#4c5e6e"/>
    <rect x="424.5" y="1" width="57" height="38" fill="none" stroke="#a7b3bf" stroke-width="1"/>
    <rect x="486" y="0.5" width="58" height="21.5" fill="#8c9fb0"/><rect x="486" y="22" width="58" height="17" fill="#4c5e6e"/>
    <rect x="486.5" y="1" width="57" height="38" fill="none" stroke="#a7b3bf" stroke-width="1"/>
  </g>
  <rect x="238" y="13" width="306" height="1" fill="#ffffff" opacity="0.12"/>
  <!-- chrome -->
  <circle cx="267" cy="20" r="14" fill="#d8382c"/>
  <path d="M267 20 L279.12 13 A14 14 0 0 1 267 34 Z" fill="#f8c82c"/>
  <path d="M267 20 L267 34 A14 14 0 0 1 254.88 13 Z" fill="#3aa848"/>
  <path d="M267 13.5 L279.12 13 L273 22 Z" fill="#f8c82c"/>
  <path d="M261.5 23 L267 34 L255.5 14 Z" fill="#3aa848"/>
  <circle cx="267" cy="20" r="6.4" fill="#fff"/>
  <circle cx="267" cy="20" r="5.1" fill="#3d82d8"/>
  <!-- cmd -->
  <rect x="313.5" y="7.5" width="28.5" height="24" rx="1" fill="url(#cmdg)" stroke="#8d97a0" stroke-width="1"/>
  <rect x="314" y="8" width="27.5" height="2.5" fill="#dde2e6"/>
  <g fill="#fff"><path d="M321 14.5 L318.5 14.5 L318 15 L318 19 L318.5 19.5 L321 19.5" fill="none" stroke="#fff" stroke-width="1.1"/><rect x="323" y="15" width="1.2" height="1.2"/><rect x="323" y="18.5" width="1.2" height="1.2"/><path d="M325.5 13.5 L329 20" stroke="#fff" stroke-width="1.2"/><rect x="331" y="19.2" width="8" height="1.2"/></g>
  
  <!-- firefox -->
  <defs>
    <radialGradient id="ffg" cx="0.6" cy="0.35" r="0.6"><stop offset="0" stop-color="#5aa8e8"/><stop offset="0.6" stop-color="#1f5cb0"/><stop offset="1" stop-color="#142f78"/></radialGradient>
    <linearGradient id="ffo" x1="0" y1="0" x2="0.4" y2="1"><stop offset="0" stop-color="#f6a21c"/><stop offset="0.6" stop-color="#e8601a"/><stop offset="1" stop-color="#d84a14"/></linearGradient>
    <linearGradient id="npg" x1="0" y1="0" x2="1" y2="1"><stop offset="0" stop-color="#bfe6f4"/><stop offset="1" stop-color="#3aa0c8"/></linearGradient>
  </defs>
  <circle cx="392.5" cy="18.5" r="12.5" fill="url(#ffg)"/>
  <path d="M378.5 9 C377 12 376 15.5 376 19.5 C376 28 382.5 34.5 391 34.5 C399.5 34.5 406 28 406 19.5 C406 15 404.5 11.5 402 9 C404 13 404 18 401.5 22.5 C398.5 27.5 392 29 387 26.5 C382.5 24 381.5 19 383.5 16 C385 13.5 388 13.5 389.5 14.5 C388.5 12 386 11 383.5 11.5 C381.5 10.5 380 9.5 378.5 9 Z" fill="url(#ffo)"/>
  <path d="M402 9 C405 12.5 406.5 16 406 21 C405 17 403.5 13 400 10 Z" fill="#f8c03a"/>
  <!-- notepad -->
  <path d="M447 8.5 L468 13 L458.5 35 L437.5 30.5 Z" fill="#f2f6f8" stroke="#9aaab4" stroke-width="0.6"/>
  <path d="M447.5 9.5 L464 13 L455.5 33.5 L438 29.5 Z" fill="url(#npg)"/>
  <path d="M464 13 L468 13.5 L459 35 L455.5 33.5 Z" fill="#e6eef2"/>
  <path d="M466.5 14 L469 14.6 L460 35.6 L458 35.2 Z" fill="#c8a060"/>
  <path d="M448 7.8 L465.5 11.8" stroke="#9aa0a4" stroke-width="1.6" stroke-dasharray="1 0.8"/>
  <!-- paint palette -->
  <path d="M499.5 28 C496.5 21 503 13.5 513.5 12.8 C522.5 12.2 528 16.5 526.5 22 C525.5 25.5 520.5 24 518.5 27.5 C516.5 31.5 505 33.5 499.5 28 Z" fill="#e6f0f6" stroke="#8cc0dc" stroke-width="1"/>
  <circle cx="504" cy="23" r="2.3" fill="#e8382a"/><circle cx="508.8" cy="18.2" r="2.3" fill="#58c23a"/><circle cx="515.5" cy="16.5" r="2.3" fill="#f4b41c"/>
  <circle cx="512.5" cy="24.5" r="1.8" fill="#485868"/>
  <path d="M515.5 35.5 L527 13" stroke="#e8841c" stroke-width="2.4" stroke-linecap="round"/>
  <path d="M527 12.5 L530.5 6.5" stroke="#9aa0a8" stroke-width="2.4"/>
  <path d="M529 7.5 C528 4 530 1 533 1.5 C533.5 4.5 532.5 7 530.5 8.5 Z" fill="#d8a060"/>
  <!-- tray -->
  <path d="M1068.5 22.5 L1072.5 19 L1076.5 22.5 Z" fill="#fff"/>
  <path d="M1090.5 13.5 L1090.5 28.5" stroke="#fff" stroke-width="1.2"/>
  <path d="M1091 14 C1095 13 1097 16 1099.5 15.5 L1104.5 15 L1102.5 18 L1104 21.5 C1100 22 1096 21 1091 22 Z" fill="#fff"/>
  <g fill="none" stroke="#fff" stroke-width="1.2">
    <circle cx="1116.5" cy="16" r="2.3"/>
    <path d="M1116.5 18.5 L1116.5 27 M1119.5 16 L1127.5 16 L1127.5 22.5 L1118.5 22.5 M1122.5 22.5 L1122.5 26 M1119 26.5 L1126 26.5"/>
  </g>
  <path d="M1141.5 17.5 L1144 17.5 L1148.5 14 L1148.5 28 L1144 24.5 L1141.5 24.5 Z" fill="#fff"/>
</svg>
<div class="a tb" style="left:1167px;top:999px;font-size:12px;letter-spacing:-0.6px">ENG</div>
<div class="a tb" style="left:1222px;top:991px;font-size:12px;letter-spacing:-0.5px">18:45</div>
<div class="a tb" style="left:1208px;top:1008px;font-size:12px;letter-spacing:-0.55px">13.02.2015</div>
</body></html>
